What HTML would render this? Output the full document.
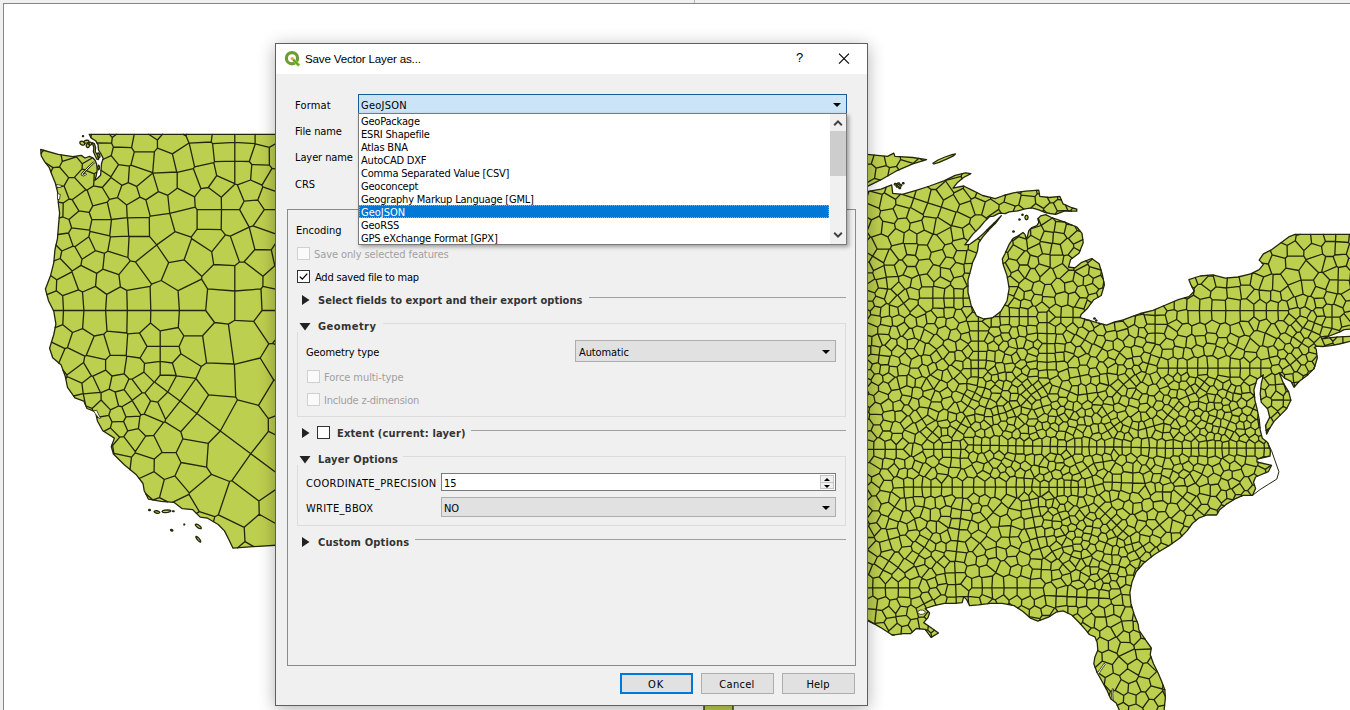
<!DOCTYPE html>
<html lang="en">
<head>
<meta charset="utf-8">
<title>Save Vector Layer as...</title>
<style>
*{box-sizing:border-box;margin:0;padding:0}
html,body{width:1350px;height:710px;overflow:hidden;background:#fff}
body{position:relative;font-family:"DejaVu Sans Condensed","DejaVu Sans","Liberation Sans",sans-serif;font-stretch:condensed;font-size:11px;color:#000}
.abs{position:absolute}
#canvas{left:0;top:0;width:1350px;height:710px;background:#fff;overflow:hidden}
#map{left:0;top:0}
.edgeT{left:0;top:0;width:1350px;height:4px;background:#f0f0f0;border-bottom:1px solid #868686}
.edgeL{left:0;top:3px;width:4px;height:707px;background:#f0f0f0;border-right:1px solid #868686}
#dlg{left:275px;top:43px;width:593px;height:663px;background:#f0f0f0;border:1px solid #5f5f5f;box-shadow:0 3px 16px 0 rgba(0,0,0,.30)}
#title{left:0;top:0;width:591px;height:30px;background:#fff}
#title .t{left:29px;top:7px;font-family:"Liberation Sans",sans-serif;font-stretch:normal;font-size:11.6px;line-height:16px;white-space:nowrap;letter-spacing:-.18px}
.lbl{white-space:nowrap;line-height:14px;height:14px;letter-spacing:-.2px}
.dis{color:#a0a0a0}
.b{font-weight:700;color:#333;letter-spacing:0}
.combo{background:#e1e1e1;border:1px solid #adadad}
.combo .v,.spin .v{left:3px;top:5px;line-height:14px;letter-spacing:-.1px}
.arr{width:0;height:0;border-left:4px solid transparent;border-right:4px solid transparent;border-top:4px solid #000}
.cb{width:13px;height:13px;background:#fff;border:1px solid #333}
.cb.d{border-color:#d0d0d0;background:#fafafa}
.grp{border:1px solid #dcdcdc}
.hl{height:1px;background:#a0a0a0}
.btn{height:21px;width:73px;top:629px;background:#e1e1e1;border:1px solid #adadad;text-align:center;line-height:21px;text-indent:-1px;letter-spacing:-.2px}
#list{left:82px;top:69px;width:489px;height:132px;background:#fff;border:1px solid #7a7a7a;box-shadow:2px 2px 4px rgba(0,0,0,.35)}
#list .it{left:0;width:470px;height:13px;line-height:15px;padding-left:2px;white-space:nowrap;letter-spacing:-.2px}
</style>
</head>
<body>
<div id="canvas" class="abs">
<svg id="map" class="abs" width="1350" height="710" viewBox="0 0 1350 710">
<g fill="#bdcf4f" stroke="#23260a" stroke-width="1.3" stroke-linejoin="round">
<path d="M89.2 134.3L280 134.3L280 545L258.3 546.3L233 548.2L228.7 539.3L224.5 530.9L218.2 524.5L207.6 518.2L200.2 517.1L192.8 509.7L182.3 508.7L173.8 502.3L161.1 501.3L148.5 499.2L144.2 490.7L143 483.5L136.6 475.1L124 464.5L113.4 454L111.3 446.6L114.4 438.1L102.8 430.7L97.5 421.2L95.4 411.7L87 408.5L83.8 401.1L74.9 397.9L67.5 387.3L65.4 376.8L61.2 365.1L52.7 357.8L49.6 348.2L53.8 334.5L55.9 324L53.8 311.3L48.5 300.7L45.4 289.1L50.6 275.4L53.8 262.7L54.9 250L57.5 238.3L58.5 225.6L59.6 213L58.5 204.5L57.6 192.1L55.3 183.1L52.5 176.3L49.1 167.3L44.6 161.7L41.3 156L40.7 149.5L58.2 154.3L72.8 156.6L81.2 155.4L85 158L89.5 156.3L93 158L95.2 160.5L96.6 164L97.2 170L96.2 176L94.7 180.4L98.1 177.8L100.6 175.3L101 170.2L101.5 163.5L103.2 158.4L100.6 153.3L98.5 150L98.1 144.9L95.6 140.7L91.3 138.1Z"/>
<path d="M860 154.3L867 154.3L887.5 156.4L893.8 153.2L894.9 156.4L912.8 157.5L926.6 159.6L912.8 163.8L895.9 171.2L881.1 179.7L867 186.6L862 189L867 191.7L881.1 189.2L891.7 184.9L892.7 193.4L902.3 194.4L917 190.2L929.7 186L944.5 180.7L955.1 175.4L965.6 172.9L970.9 173.7L963.5 177.5L957.2 182.8L953 188.1L963.5 186L972 190.2L982.6 195.5L995.2 198.7L1003.7 195.5L1013.4 192.8L1026 191.1L1038.7 190.1L1039.8 196.4L1049.3 197.5L1059.9 196.4L1063 203.8L1072.5 208L1076.8 209.1L1076.8 211.2L1064.1 211.2L1055.6 214.4L1050 213.5L1044.7 212.3L1038.8 209.8L1031.9 207.8L1024.9 208.8L1018 210.8L1009.2 211.8L1005.2 213.7L999.3 213.2L993.4 216.2L989.4 216.7L984.5 221.6L979.6 227.5L972.7 234.4L964.8 244.8L969.7 244.3L976.6 239.4L983.5 233.5L989.4 227.5L995.4 221.6L1001.3 215.7L995.9 222.9L988.9 229.8L983 236.7L978.6 242.8L977.6 250.2L975.6 256.1L972.7 262.1L971.5 267.2L968 279.9L968 292.5L971.1 305.2L976.4 315.8L983.8 319L992.3 317.9L1000.7 311.6L1007 301L1009.2 288.3L1007 275.6L1003.3 265L1002.3 259.1L1005.2 253.2L1009.2 244.3L1013.1 238.4L1019 235.4L1023 232.5L1025 234.4L1026.4 239.4L1027.9 234.4L1028.9 230.5L1031.9 227.5L1036.8 225.6L1038.8 222.6L1037.8 218.7L1040.7 215.9L1045.7 214.6L1051.4 217.5L1064.1 221.8L1076.8 227L1082 233.4L1083.2 242.7L1079 253.2L1070.6 259.6L1068.5 267L1074.8 268L1081.1 262.7L1091.7 258.5L1099.1 263.8L1102.3 274.4L1104.4 284.9L1101.2 295.5L1093.8 299.7L1087.5 308.2L1081.1 314.5L1080.1 317.7L1087.5 319.8L1098 323L1106.5 325.1L1114.9 321.9L1123.4 319.8L1131.8 316.6L1140.3 313.5L1153 310.3L1165.6 305L1178.3 299.7L1188.9 296.6L1194.2 291.3L1191 284.9L1188.9 279.7L1195.2 277.5L1200 276L1212.7 274.9L1225.4 278.1L1238 277L1250.7 273.9L1259.2 269.7L1263.4 264.4L1259.2 260.1L1263.4 253.8L1271.8 249.6L1280.3 243.2L1288.7 236.9L1295.1 234.4L1356 234.4L1356 329L1350 329.2L1344.2 329.6L1339.2 332.1L1330.7 335.5L1322.3 338.9L1330.7 337.6L1339.2 336.8L1350 336.3L1356 336.2L1356 341L1350 341.4L1339.2 344L1330.7 345.6L1322.3 346.5L1316.8 346.1L1314.3 347.6L1316.3 349.2L1316.8 354.9L1317.3 358L1314.1 368.6L1307.7 374.9L1299.3 381.3L1294 387.2L1290.9 381.3L1284.5 378.1L1279.2 372.8L1283.5 383.4L1288.7 391.8L1290.9 400.3L1286.6 408.7L1280.3 415.1L1274 421.4L1268.7 429.9L1266.6 434.1L1265.5 425.6L1269.7 417.2L1267.6 408.7L1261.3 402.4L1260.2 393.9L1261.3 383.4L1263.4 374.9L1257 379.2L1253.9 389.7L1254.9 400.3L1257 408.7L1259.2 419.3L1260.2 429.9L1262.3 438.3L1267.6 442.5L1270.4 450.6L1270 456L1257 459L1257 462L1271.5 465.4L1268.3 471.7L1255.6 477L1253.5 482.3L1255.6 488.6L1252.5 495.4L1243 495.4L1234.5 499.2L1226.1 504.4L1219.7 509.7L1216.6 515L1207 515L1198.6 518.2L1192.3 523.5L1187 530.9L1179.6 538.2L1169 545.6L1158.5 552L1154.1 554.8L1143.5 563.2L1136.1 571.7L1131.9 582.3L1129.8 592.8L1130.9 603.4L1134 613.9L1138.2 624.5L1138.9 630L1145.7 640.1L1151.3 648L1150.2 654.8L1153.5 663.8L1158 672.8L1161.4 680.7L1164.8 689.7L1165.4 697.6L1163.7 714L1120.9 714L1116.4 703.3L1110.7 698.7L1107.3 690.9L1101.7 680.7L1097.2 672.8L1093.8 663.8L1094.9 657L1097.8 650.3L1097.2 642.4L1094.9 636.8L1089.3 634.5L1086.5 630.9L1080.1 623.5L1071.7 615L1063.2 610.8L1056.9 611.8L1048.5 617.1L1037.8 621.1L1030.4 618.1L1023 611.5L1014.1 605.6L1002.2 603.3L990.4 603.3L978.5 604.8L969.6 605.6L966.7 599.6L963.7 596.7L962.2 602.6L954.8 603.3L944.4 603.3L934.1 605.6L925.2 608.5L929.6 613L928.1 617.4L923.7 622.6L931.1 627.8L938.5 633L931.1 637.4L925.2 629.3L916.3 628.5L910.4 633.7L903 633.7L892.6 635.2L882.2 628.5L874.8 624.1L867 620.4L860 620.4Z"/>
<path d="M704 704L733 704L733 714L704 714Z"/>
<path d="M84.6 144.5L83.6 145.2L82.1 145.1L80.7 144.3L79.9 143.1L80 141.9L81 141.2L82.5 141.3L83.9 142.1L84.7 143.3Z"/>
<path d="M89.1 141.1L88.7 142.1L87.5 142.9L86 143.1L84.6 142.8L83.9 142.1L84.3 141.1L85.5 140.3L87 140.1L88.4 140.4Z"/>
<path d="M89.4 145.6L89.1 146.8L88.3 147.5L87.3 147.5L86.5 146.8L86.2 145.6L86.5 144.4L87.3 143.7L88.3 143.7L89.1 144.4Z"/>
<path d="M91.5 143.6L91.3 144.5L90.7 145.1L89.9 145.1L89.3 144.5L89.1 143.6L89.3 142.7L89.9 142.1L90.7 142.1L91.3 142.7Z"/>
<path d="M83.6 136.2L83.3 136.7L82.7 136.7L82.4 136.2L82.7 135.7L83.3 135.7Z"/>
<path d="M92.2 142.5L94.3 143.5L95.6 147.5L95.2 151.5L97.6 155.5L98.6 159.5L96.8 159.2L95.2 155.8L93.4 151.8L93.8 147.5Z"/>
<path d="M99.8 154.9L100 156.8L99.5 157.7L98.6 157.2L97.8 155.5L97.6 153.6L98.1 152.7L99 153.2Z"/>
<path d="M99.5 167.5L99.2 169.2L98.6 169.9L98 169.2L97.7 167.5L98 165.8L98.6 165.1L99.2 165.8Z"/>
<path d="M150.5 510.1L150 510.7L149 510.7L148.5 510.1L149 509.5L150 509.5Z"/>
<path d="M159.7 512.5L159 513.1L157.6 513.3L155.8 513L154.5 512.3L154.1 511.5L154.8 510.9L156.2 510.7L158 511L159.3 511.7Z"/>
<path d="M170.8 510.8L170 511.7L167.9 512.3L165.2 512.6L162.9 512.3L162 511.6L162.8 510.7L164.9 510.1L167.6 509.8L169.9 510.1Z"/>
<path d="M174.2 511.2L173.8 511.6L172.9 511.6L172.4 511.2L172.9 510.8L173.8 510.8Z"/>
<path d="M201.2 528.5L200.2 528.7L198.5 528.1L196.7 526.8L195.5 525.4L195.4 524.3L196.4 524.1L198.1 524.7L199.9 526L201.1 527.4Z"/>
<path d="M200.6 542L199.7 541.8L198.2 540.7L196.8 539L195.9 537.4L196 536.4L196.9 536.6L198.4 537.7L199.8 539.4L200.7 541Z"/>
<path d="M172.9 530.6L172.1 531.1L170.9 530.6L170.5 529.8L171.3 529.3L172.5 529.8Z"/>
<path d="M184.8 524.5L184.5 525L183.9 524.8L183.9 524.2L184.5 524Z"/>
<path d="M932.9 163.2L938 160L945 157L952 154.6L955.4 154L953 156.2L946 159.4L939 162.4L934 164Z"/>
<path d="M896.8 184.3L896.1 185.1L894.9 185.1L894.2 184.3L894.9 183.5L896.1 183.5Z"/>
<path d="M899.8 183.6L899.2 184.4L898 184.4L897.4 183.6L898 182.8L899.2 182.8Z"/>
<path d="M898.5 186.4L897.9 187.2L896.7 187.2L896.1 186.4L896.7 185.6L897.9 185.6Z"/>
<path d="M901.9 185.4L901.3 186.1L900.2 186.1L899.7 185.4L900.2 184.7L901.3 184.7Z"/>
<path d="M900.7 187.8L900.2 188.5L899.2 188.5L898.7 187.8L899.2 187.1L900.2 187.1Z"/>
<path d="M904.1 183.3L903.7 183.9L902.8 183.9L902.3 183.3L902.8 182.7L903.7 182.7Z"/>
<path d="M1028.1 217.5L1027.6 219.1L1026.5 219.8L1025.4 219.1L1024.9 217.5L1025.4 215.9L1026.5 215.2L1027.6 215.9Z"/>
<path d="M1020.3 219.5L1019.7 220.1L1018.9 219.9L1018.9 219.1L1019.7 218.9Z"/>
<path d="M1023.3 214.8L1022.7 215.4L1021.9 215.2L1021.9 214.4L1022.7 214.2Z"/>
<path d="M1014.4 231.5L1013.8 232.2L1012.8 231.9L1012.8 231.1L1013.8 230.8Z"/>
<path d="M1095.4 318.5L1094.8 319.2L1093.8 318.9L1093.8 318.1L1094.8 317.8Z"/>
<path d="M1097.1 320.6L1096.5 321.2L1095.7 321L1095.7 320.2L1096.5 320Z"/>
</g>
<path fill="none" stroke="#23260a" stroke-width="1.3" stroke-linecap="round" d="M280 140.1L277.5 140.8M277.5 140.8L276 134.3M145.6 493.4L152.9 499.9M41.1 153.6L41.3 152.7M277.5 140.8L276.4 143.2M276.4 143.2L280 146.8M268.4 431.4L250.8 453.7M220.3 431L250.8 453.7M258.5 405.3L237.5 399.8M237.5 399.8L220.3 431M268.3 418.7L258.5 405.3M268.3 418.7L268.4 431.4M258.5 405.3L273.8 380.2M234.4 364.3L260.2 358M234.4 364.3L235.7 397.2M235.7 397.2L237.5 399.8M260.2 358L273.8 380.2M280 414.2L268.3 418.7M280 380L273.8 380.2M162.5 134.3L157.4 140M148.6 134.3L157.4 140M260.2 358L268.8 343.9M280 346.4L272.6 343.3M272.6 343.3L268.8 343.9M262.9 286.3L280 290.2M262.9 286.3L261 288.9M261 288.9L262 310.5M262 310.5L280 310.5M274.8 265.7L280 266.7M263 276.3L274.8 265.7M263 276.3L262.9 286.3M253.7 321.4L268.8 343.9M272.6 343.3L280 334M253.7 321.4L262 310.5M231.9 480.7L250.8 453.7M231.9 480.7L258.9 501M250.8 453.7L280 475.5M258.9 501L280 486.6M268.4 431.4L280 437M199.3 511.6L189 494.4M199.3 511.6L196.5 513.4M189 494.4L172.9 502.2M213.5 521.7L214.8 516.7M214.8 516.7L199.3 511.6M152.9 499.9L159.5 497.7M159.5 497.7L167.7 501.8M162.1 452.3L153.7 435.3M176.1 452.7L162.1 452.3M176.1 452.7L182.9 438.8M182.9 438.8L180.8 431.8M163.6 422.4L153.7 435.3M163.6 422.4L165 421.9M180.8 431.8L165 421.9M134.3 151.8L154.4 151.6M134.3 151.8L130.9 165.1M130.9 165.1L152.7 172.7M154.4 151.6L152.7 172.7M157.5 148.1L157.4 140M131.6 147.7L134.2 134.3M157.5 148.1L154.4 151.6M131.6 147.7L134.3 151.8M51.5 342.1L65 348.6M58.8 363L65 348.6M165 421.9L165.6 419.4M157.7 402.1L165.6 419.4M157.7 402.1L150.6 400.9M163.6 422.4L144.1 414.2M150.6 400.9L144.1 414.2M234.8 320.3L234.8 291M261 288.9L234.8 291M253.7 321.4L234.8 320.3M233.9 364L228.4 324.1M234.4 364.3L233.9 364M234.8 320.3L228.4 324.1M126.8 333L127.3 310.5M127.3 310.5L150.8 310.5M126.8 333L127.7 333.8M139.5 332.9L127.7 333.8M150.5 323.1L150.8 310.5M139.5 332.9L150.5 323.1M126.8 290.4L150.1 286.3M126.8 290.4L127.3 310.5M150.1 286.3L150.8 310.5M156.7 245L135.4 261.9M135.4 261.9L151.6 284.1M156.7 245L168.7 262.6M151.6 284.1L161.2 280.5M168.7 262.6L161.2 280.5M274.8 265.7L271.3 249.8M279.2 237.9L271.3 249.8M280 222.9L277.6 234.7M279.2 237.9L277.6 234.7M280 168.2L277.9 169.4M277.9 169.4L280 173.9M259.2 514.3L280 526M259.2 514.3L244.2 527.3M245 541.6L244.2 527.3M245 541.6L253.8 546.6M275.3 545.3L280 539.4M258.9 501L259.2 514.3M218.4 514.8L244.2 527.3M218.4 514.8L229.6 481.5M229.6 481.5L231.9 480.7M237.7 547.8L245 541.6M214.8 516.7L218.4 514.8M211.5 474.3L206.6 467.1M211.5 474.3L189.3 492.9M206.6 467.1L181 462.5M189.3 492.9L174.9 475.9M174.9 475.9L181 462.5M220.3 431L208.3 443.3M229.6 481.5L211.5 474.3M208.3 443.3L206.6 467.1M189 494.4L189.3 492.9M208.3 443.3L182.9 438.8M176.1 452.7L181 462.5M159.5 497.7L164.3 479.5M164.3 479.5L174.9 475.9M145.7 436L153.7 435.3M135.3 451.7L145.7 436M162.1 452.3L154.3 459.1M135.3 451.7L135.2 452.9M135.2 452.9L154.3 459.1M164.3 479.5L154.1 471.7M139.2 478.5L154.1 471.7M154.1 471.7L154.3 459.1M144.1 414.2L140.9 414.9M140.9 414.9L140 416.1M145.7 436L138.4 428.6M138.4 428.6L140 416.1M135.3 451.7L123.8 436.7M123.8 436.7L127.7 430.8M138.4 428.6L127.7 430.8M196.9 413.6L180 401.1M208.6 394.8L196.9 413.6M195.9 378.5L180 401.1M208.6 394.8L195.9 378.5M180.8 431.8L196.9 413.6M165.6 419.4L180 401.1M220.3 431L196.9 413.6M235.7 397.2L208.6 394.8M201.3 366.5L206.6 362.8M233.9 364L206.6 362.8M195.9 378.4L201.3 366.5M195.9 378.4L195.9 378.5M62.3 161.3L59.5 167M62.3 161.3L61.1 154.8M41.3 152.7L43.8 150.3M45.5 162.8L53 167.6M53 167.6L59.5 167M132.2 400.6L132.3 400.3M132.2 400.6L121.8 406.7M132.3 400.3L124.1 389.7M115.1 392L124.1 389.7M115.1 392L118.6 406M118.6 406L121.8 406.7M140.9 414.9L132.2 400.6M140 416.1L126 416.9M121.8 406.7L126 416.9M127.7 430.8L123.6 421.4M126 416.9L123.6 421.4M118.6 406L110.5 409.9M110.5 409.9L108.8 415.3M123.6 421.4L112 421.9M108.8 415.3L112 421.9M112.6 445.5L111.8 445.1M112.6 445.5L119.7 437.2M119.7 437.2L110.4 427.9M110.4 427.9L103.9 431.4M123.8 436.7L119.7 437.2M112 421.9L110.4 427.9M108.8 415.3L96.7 417.5M201.3 366.5L180.9 353.7M206.6 362.8L202.6 335.7M179.1 346.4L180.9 353.7M179.1 346.4L183.9 335.8M202.6 335.7L183.9 335.8M228.4 324.1L214.6 322.5M202.6 335.7L214.6 322.5M126.8 356.2L126.2 355.5M127.7 333.8L126.2 355.5M139.5 332.9L147 346.4M126.8 356.2L140 358M140 358L147 346.4M150.5 323.1L160.2 330.9M160.2 330.9L160.2 346.4M147 346.4L160.2 346.4M179.1 346.4L160.2 346.4M160.2 330.9L178.3 327.5M183.9 335.8L178.3 327.5M195.9 378.4L176.5 375.8M176.5 375.8L167.8 392M180 401.1L167.8 392M157.7 402.1L167.8 392M207.6 288.8L205.7 310.5M207.6 288.8L201.6 279.1M201.6 279.1L178.1 290.7M205.7 310.5L179.4 310.5M178.1 290.7L179.4 310.5M234.8 291L207.6 288.8M214.6 322.5L205.7 310.5M178.3 327.5L179.4 310.5M150.1 286.3L151.6 284.1M150.8 310.5L179.4 310.5M161.2 280.5L178.1 290.7M194.6 196.8L201 188.7M201 188.7L193.3 168.6M177.2 188.2L194.6 196.8M177.2 188.2L177.2 172.4M193.3 168.6L177.2 172.4M157.5 148.1L172.4 153.9M152.9 173.1L176.7 172M152.7 172.7L152.9 173.1M172.4 153.9L176.7 172M169.7 213.3L150.2 216.2M169.7 213.3L167.8 195.3M167.8 195.3L158.4 191.6M158.4 191.6L145.9 199.9M145.9 199.9L150.2 216.2M175 231.7L169.8 213.4M169.8 213.4L169.7 213.3M149.5 236.3L156.7 244.9M149.5 236.3L149.3 217.4M156.7 244.9L175 231.7M149.3 217.4L150.2 216.2M169.8 213.4L195.2 207.1M194.6 196.8L195.2 207.1M177.2 188.2L167.8 195.3M152.8 173.1L158.4 191.6M152.9 173.1L152.8 173.1M176.7 172L177.2 172.4M136.6 186.4L152.8 173.1M140 197.1L136.6 186.4M140 197.1L145.9 199.9M280 212.8L277.6 209.6M277.6 209.6L280 200.7M276.4 143.2L269.3 147.4M255.1 134.3L255.1 143.6M255.1 143.6L255.3 143.8M269.3 147.4L255.3 143.8M130 469.6L131.5 457.1M131.5 457.1L113.9 453.3M135.2 452.9L131.5 457.1M112.6 445.5L113.9 453.3M126.8 333L107 331.1M127.3 310.5L105.6 310.5M107 331.1L105.6 310.5M84.8 356.2L67.4 347.6M67.4 347.6L72.5 332.5M72.5 332.5L82.6 328.6M84.8 356.2L86.3 355.3M86.3 355.3L94.2 336M82.6 328.6L94.2 336M86.3 355.3L105.6 359.7M110.2 355.1L105.6 359.7M110.2 355.1L103.8 334.2M94.2 336L103.8 334.2M126.2 355.5L110.2 355.1M107 331.1L103.8 334.2M105.6 310.5L83.9 310.5M82.6 328.6L83.9 310.5M126.6 205L140 197.1M126.6 205L127.2 217.6M149.3 217.4L127.5 217.9M127.5 217.9L127.2 217.6M62.3 161.3L76.5 156.8M59.5 167L68.7 177.6M74.4 177.4L68.7 177.6M76.5 156.8L82.3 163.8M74.4 177.4L82.1 168.9M82.1 168.9L82.3 163.8M130.9 165.1L129.4 166.1M136.6 186.4L128.3 182.6M128.3 182.6L129.4 166.1M131.6 147.7L113.4 147M113.4 147L111.2 155.6M111.2 155.6L118.5 164.6M129.4 166.1L118.5 164.6M129 378.8L124.1 389.7M124.1 373.8L129 378.8M124.1 373.8L112 376M115.1 392L109.2 389.1M109.2 389.1L112 376M124.1 373.8L126.8 356.2M105.6 359.7L105.6 370.1M105.6 370.1L112 376M81.9 383.2L91.4 375.8M81.9 383.2L67 376.5M67 376.5L66.9 375M66.9 375L83.6 362.6M83.6 362.6L91.4 375.8M73.6 396L83.2 393.7M65.8 378.7L67 376.5M83.2 393.7L81.9 383.2M63 370.2L66.9 375M84.8 356.2L83.6 362.6M67.4 347.6L65 348.6M92.8 376.2L105.6 370.1M92.8 376.2L91.4 375.8M101.1 400L92.1 408.4M101.1 400L101.1 392.7M101.1 392.7L100.3 392.3M100.3 392.3L83.3 393.8M83.3 393.8L85.6 405.2M85.9 406L92.1 408.4M110.5 409.9L101.1 400M92.7 410.7L92.1 408.4M109.2 389.1L101.1 392.7M92.8 376.2L100.3 392.3M83.2 393.7L83.3 393.8M144.9 392.8L142.2 392.8M144.9 392.8L154.1 382.1M142.2 392.8L131.9 379.2M154.1 382.1L143.9 372.1M143.9 372.1L131.9 379.2M150.6 400.9L144.9 392.8M132.3 400.3L142.2 392.8M154.5 382.1L167.8 392M154.5 382.1L154.1 382.1M129 378.8L131.9 379.2M140 358L144.5 363.4M144.5 363.4L143.9 372.1M172.4 363L160.2 361.3M172.4 363L176.2 375.5M176.2 375.5L160.2 375M160.2 375L160.2 361.3M160.2 346.4L160.2 361.3M180.9 353.7L172.4 363M176.5 375.8L176.2 375.5M154.5 382.1L160.2 375M144.5 363.4L160.2 361.3M208.3 187.5L201 188.7M216.7 175.7L208.3 187.5M193.3 168.6L194.6 166.9M216.7 175.7L213.8 162.7M213.8 162.7L194.6 166.9M168.7 262.6L184.1 259.8M201.6 279.1L201.9 276.4M184.1 259.8L201.9 276.4M156.7 245L156.7 244.9M175 231.7L191.2 237.1M191.2 237.1L191.6 238.6M184.1 259.8L191.6 238.6M271.3 249.8L254.9 249.5M263 276.3L244.1 261.8M254.9 249.5L244.1 261.8M191.2 237.1L197.1 229.2M195.2 207.1L197.1 209.6M197.1 209.6L197.1 229.2M208.3 187.5L221.3 197.3M197.1 209.6L221.5 209.6M221.3 197.3L221.5 209.6M221.2 229.6L221.5 209.6M221.2 229.6L197.1 229.2M264.3 209.6L257.8 200M264.3 209.6L253.1 225.9M257.8 200L244.1 201.2M253.1 225.9L249.2 227.1M249.2 227.1L239.6 209.6M239.6 209.6L244.1 201.2M277.6 209.6L264.3 209.6M280 192.8L262.8 186.9M262.8 186.9L257.8 200M277.6 234.7L253.1 225.9M249.2 227.2L254.9 249.5M249.2 227.2L249.2 227.1M277.9 169.4L272 168.3M262.8 186.9L262 185.2M272 168.3L262 185.2M269.3 147.4L269.4 165.1M272 168.3L269.4 165.1M53 167.6L50.9 171.9M72.1 199.7L78.9 210.9M78.9 210.9L89.2 212.4M85.8 189.8L72.1 199.7M87.1 190L85.8 189.8M87.1 190L92.8 205.9M92.8 205.9L89.2 212.4M110.4 236.8L128.7 236.1M110.4 236.8L107.8 251.2M107.8 251.2L127.9 257.5M127.9 257.5L129.1 236.5M129.1 236.5L128.7 236.1M149.5 236.3L129.1 236.5M135.4 261.9L130.2 260.9M130.2 260.9L127.9 257.5M127.5 217.9L128.7 236.1M126.8 290.4L120.4 286.9M130.2 260.9L118.9 274.6M120.4 286.9L118.9 274.6M105.6 310.5L106.7 294.4M120.4 286.9L106.7 294.4M97 143L111.6 143.2M90.8 137.3L91.5 134.3M109.6 134.3L112.3 137.6M112.3 137.6L111.6 143.2M82.3 163.8L92.6 157.8M111.2 155.6L102.8 159.5M113.4 147L111.6 143.2M116.4 134.3L112.3 137.6M126.6 205L117.4 197.6M128.3 182.6L121.9 185.3M121.9 185.3L117.4 197.6M255.1 143.6L234.8 142.3M234.8 134.3L234.8 142.3M213.7 264.5L211.7 251.8M213.7 264.5L234.8 265.7M211.7 251.8L225.4 234.8M234.8 265.7L239.5 262.1M239.5 262.1L230.3 236.1M225.4 234.8L230.3 236.1M191.6 238.6L211.7 251.8M201.9 276.4L213.7 264.5M234.8 291L234.8 265.7M221.2 229.6L225.4 234.8M244.1 261.8L239.5 262.1M249.2 227.2L230.3 236.1M221.5 209.6L239.6 209.6M249.3 161.5L251.8 164.5M249.3 161.5L234.8 161.2M251.8 164.5L250.6 180M234.8 183.6L234.8 161.2M250.6 180L237.4 184.9M237.4 184.9L235.1 184M234.8 183.6L235.1 184M255.3 143.8L249.3 161.5M269.4 165.1L251.8 164.5M234.8 142.3L234.8 161.2M262 185.2L250.6 180M214.5 161.7L234.8 161.2M216.7 175.7L234.8 183.6M213.8 162.7L214.5 161.7M244.1 201.2L237.4 184.9M221.3 197.3L235.1 184M212.6 143.7L234.8 142.3M214.5 161.7L212.6 143.7M85.8 189.8L74.4 177.4M68.7 177.6L64.1 185.9M72.1 199.7L69.1 199M69.1 199L64.1 185.9M64.1 185.9L56.5 187.8M91.9 219.7L111.3 219.3M91.9 219.7L89.6 230.2M90 231.3L89.6 230.2M90 231.3L109.7 235.9M109.7 235.9L111.5 219.5M111.5 219.5L111.3 219.3M92.8 205.9L107.3 202.2M89.2 212.4L91.9 219.7M107.3 202.2L111.3 219.3M71.6 227.8L89.6 230.2M69 219.5L71.6 227.8M69 219.5L78.9 210.9M127.2 217.6L111.5 219.5M110.4 236.8L109.7 235.9M117.4 197.6L109.5 199.4M107.3 202.2L109.5 199.4M106.7 294.4L95.5 286.4M83.9 310.5L82.5 292M95.5 286.4L82.5 292M110.9 176.8L111 177.5M110.9 176.8L101 170.3M111 177.5L102.3 187.5M94.3 173.8L96.9 172M94.3 173.8L93.6 185.9M93.6 185.9L102.3 187.5M118.5 164.6L110.9 176.8M121.9 185.3L111 177.5M109.5 199.4L102.3 187.5M82.1 168.9L94.3 173.8M87.1 190L93.6 185.9M212.2 134.3L211.2 142M211.2 142L189.2 143.1M186.8 134.3L186 135.8M186 135.8L189 143M189 143L189.2 143.1M212.6 143.7L211.2 142M194.6 166.9L189.2 143.1M183.1 134.3L186 135.8M172.4 153.9L189 143M58.3 202.2L63.2 203M63.2 203L62.9 217M59.2 217.9L62.9 217M69.1 199L63.2 203M69 219.5L62.9 217M71.6 227.8L68.5 233M57.8 234.5L68.5 233M62.8 324.7L63.5 310.5M62.8 324.7L55.2 327.6M53.4 310.5L63.5 310.5M72.5 332.5L62.8 324.7M83.9 310.5L63.5 310.5M71.9 271.8L78.6 289.9M71.9 271.8L56.7 279.8M78.6 289.9L62.7 295.7M56.7 279.8L56.3 290.8M62.7 295.7L56.3 290.8M63.5 310.5L62.7 295.7M82.5 292L78.6 289.9M46.9 294.7L56.3 290.8M50.6 275.5L56.7 279.8M118.9 274.6L102.8 269.2M95.5 286.4L96.7 273.4M102.8 269.2L96.7 273.4M107.8 251.2L104.5 253.3M102.8 269.2L104.5 253.3M90 231.3L88.8 236.8M88.8 236.8L95.4 250.7M104.5 253.3L95.4 250.7M72.2 271L80.9 265.4M72.2 271L60.2 258.5M80.9 265.4L82 259.2M82 259.2L74.9 246.7M60.2 258.5L61.8 251M61.8 251L73.1 246.1M73.1 246.1L74.9 246.7M71.9 271.8L72.2 271M96.7 273.4L80.9 265.4M54 260.8L60.2 258.5M95.4 250.7L82 259.2M88.8 236.8L74.9 246.7M56 245L61.8 251M68.5 233L73.1 246.1"/>
<path fill="none" stroke="#23260a" stroke-width="1.3" stroke-linecap="round" d="M1164.8 689.6L1162.9 689.7M1165.3 696.3L1162.7 690.9M1162.7 690.9L1162.9 689.7M1163.1 685.2L1162.5 689M1162.9 689.7L1162.5 689M871.3 163.8L874.1 155M871.3 163.8L860.9 165.2M860 164.4L860.9 165.2M861.3 181.7L860.9 165.2M860 182L861.3 181.7M876 168.1L871.3 163.8M876 168.1L886.3 165.7M884.2 156.1L886.3 165.7M861.3 181.7L865.8 183.4M876 168.1L874.6 178.3M874.6 178.3L865.8 183.4M999.2 204.8L1004 202M1005.7 194.9L1004 202M990.6 199L990.6 197.5M990.6 199L999.2 204.8M1016.7 260.4L1024.6 251M1008.7 258.7L1016.7 260.4M1007.7 252.6L1013.3 244.7M1008.7 258.7L1007.7 252.6M1013.3 244.7L1024.6 251M1109.2 695.4L1110.4 691.4M1110.4 691.4L1104.3 684.8M1096.9 672L1105.2 677.6M1105.2 677.6L1104.3 684.8M1158.2 706.5L1153.9 699.7M1158.2 706.5L1156.3 711.1M1156.3 711.1L1146.4 712.6M1149.1 699.1L1153.9 699.7M1149.1 699.1L1142.7 708M1146.4 712.6L1143.4 710.4M1142.7 708L1143.4 710.4M1164.6 705.1L1158.2 706.5M1162.7 690.9L1153.9 699.7M1158.1 714L1156.3 711.1M1146.7 714L1146.4 712.6M1139.4 714L1143.4 710.4M1256.2 466.7L1254.1 473.6M1254.1 473.6L1257.4 476.2M1257.7 465.6L1265.3 469.4M1257.7 465.6L1256.2 466.7M1265.9 472.7L1265.3 469.4M860 203L862.7 204M862.7 204L865.2 202.7M865.8 183.4L867.1 186.5M865.2 202.7L868.9 191.4M922.9 160.7L920.1 158.6M900.3 156.7L900.6 159.7M918.6 158.4L913.1 163.4M900.6 159.7L913.1 163.4M953.9 192.8L953.4 194.5M945.6 181L953.9 192.8M936 189.5L945.6 181M936 189.5L943.5 200.1M953.4 194.5L943.5 200.1M963.1 188.3L971.2 199.2M963.1 188.3L963.9 186.2M974.9 197.4L971.2 199.2M974.9 197.4L976.9 192.6M985.3 201.8L974.9 197.4M990.6 199L985.3 201.8M945.7 180.3L961.1 176.3M961.1 176.3L962.1 173.7M961.9 178.9L961.1 176.3M953.9 192.8L963.1 188.3M945.6 181L945.7 180.3M991.2 326.9L989.8 327.9M989.8 327.9L982 321.3M991.2 318L991.2 326.9M985.4 318.8L982 321.3M1001.5 213.4L998.7 209.4M998.7 209.4L986.1 218M995.2 223.6L993.8 223.2M986.1 218L986.7 219.4M1015.4 206.1L1013.1 211.4M1015.4 206.1L1004 202M999.2 204.8L998.7 209.4M985.3 201.8L981.6 214.9M981.6 214.9L986.1 218M987 230L987.9 231M1008.7 258.7L1005.3 262.7M1011.2 272.9L1005.3 262.7M1011.2 272.9L1018.2 269.8M1016.7 260.4L1019.6 264.9M1018.2 269.8L1019.6 264.9M1050.2 267.3L1050.3 267.5M1040 276.9L1050.3 267.5M1040 276.9L1034.8 268.5M1050.2 267.3L1039 263.9M1039 263.9L1034.8 268.5M1025.3 278.1L1030.6 268.4M1033.6 282.7L1025.3 278.1M1033.6 282.7L1039.6 280.7M1040 276.9L1039.6 280.7M1034.8 268.5L1030.6 268.4M1018.2 269.8L1024.6 278.2M1019.6 264.9L1027.7 265M1024.6 278.2L1025.3 278.1M1030.6 268.4L1027.7 265M1015.4 206.1L1018.7 205M1018.7 205L1023.7 209.1M1013.3 244.7L1012.8 240.9M1007.7 252.6L1005.8 251.8M1011.9 240.2L1012.8 240.9M930.2 355.6L932.9 362.4M930.2 355.6L936.4 350.1M936.4 350.1L942 358.7M942 358.7L935.6 363.2M935.6 363.2L932.9 362.4M870.1 191.1L882.2 194.3M865.2 202.7L879.2 208.4M879.2 208.4L882.2 194.3M860.4 452.6L862.3 449.3M862.3 449.3L860 441M1117.2 705.3L1123.3 702.4M1128.2 714L1128.7 706.2M1128.7 706.2L1123.3 702.4M1142.7 708L1136 704M1128.7 706.2L1136 704M1150.9 656.8L1147.3 662.6M1156.7 671.6L1147.3 662.6M1151 685.9L1145.4 692.2M1151 685.9L1149.1 678.9M1149.1 678.9L1138.7 676.3M1145.4 692.2L1141.1 691.5M1141.1 691.5L1136.3 680.6M1136.3 680.6L1138.7 676.3M1162.5 689L1151 685.9M1149.1 699.1L1145.4 692.2M1156.7 671.6L1149.1 678.9M1138.5 675.4L1143.1 663.4M1147.3 662.6L1143.1 663.4M1138.5 675.4L1138.7 676.3M1136 704L1136.1 695.2M1136.1 695.2L1141.1 691.5M1128.6 683.6L1127.9 692.5M1128.6 683.6L1121.1 679.5M1121.1 679.5L1115.2 690.4M1115.2 690.4L1123.8 695.5M1123.8 695.5L1127.9 692.5M1136.1 695.2L1127.9 692.5M1136.3 680.6L1128.6 683.6M1123.3 702.4L1123.8 695.5M1110.4 691.4L1115.2 690.4M1095.2 667.5L1102.3 661.1M1097.7 650.5L1101.9 652.9M1102.3 661.1L1101.9 652.9M1091.3 628L1082.6 622.4M1091.3 628L1087.6 632.4M1080.5 624L1082.6 622.4M1323.2 234.4L1325.4 241.3M1335.8 234.4L1335.5 241.5M1325.4 241.3L1335.5 241.5M1348.6 242.5L1349.4 234.4M1348.6 242.5L1335.5 241.5M862.7 204L861.1 213.7M860 214.5L861.1 213.7M970.4 200.8L975.2 214.9M970.4 200.8L959.6 204.6M957.1 211.6L959.6 204.6M957.1 211.6L970.6 218.2M970.6 218.2L975.2 214.9M971.2 199.2L970.4 200.8M981.6 214.9L975.2 214.9M953.4 194.5L959.6 204.6M969.4 223.4L975.7 231.4M969.4 223.4L970.6 218.2M993.8 316.7L999.7 316.7M1000.2 312L999.7 316.7M1036.5 316.7L1038.8 322.7M1036.5 316.7L1038.2 312.4M1038.2 312.4L1047 311.8M1047 311.8L1047 322.6M1038.8 322.7L1047 322.6M1037.2 193.9L1035 196.6M1037.2 193.9L1036.4 190.3M1035 196.6L1021.2 195.1M1021.4 191.7L1020.6 193.7M1020.6 193.7L1021.2 195.1M1039.4 193.9L1037.2 193.9M1035.7 203.6L1035 196.6M1035.7 203.6L1030.8 208M1018.7 205L1021.2 195.1M1016.9 192.3L1020.6 193.7M1018.6 236.7L1018.8 235.5M1018.6 236.7L1026.3 239.2M1026.5 239.2L1030.8 235.2M1030.8 235.2L1030.5 228.9M1012.8 240.9L1018.6 236.7M921 388.2L914.9 386.8M915.5 379L914.9 386.8M915.5 379L922.2 376.4M921 388.2L926.3 378M922.2 376.4L926.3 378M951.2 365L960.6 371.6M963.1 368.7L960.6 371.6M951.2 365L955.3 360.3M963.1 368.7L962.8 361.6M955.3 360.3L962.8 361.6M860.7 281.1L860 281.6M860 276.7L860.7 281.1M860 261.4L862.8 263.4M860 274.1L861.4 272.9M861.4 272.9L862.8 263.4M1050.7 404.6L1052 408.3M1050.7 404.6L1042.2 406.6M1052 408.3L1047.7 414.5M1042.2 406.6L1042.1 406.9M1042.1 406.9L1044.5 413.3M1047.7 414.5L1044.5 413.3M1056.4 410L1052 408.3M1057.8 415.7L1056.4 410M1056.2 416.7L1048.5 415.8M1048.5 415.8L1047.7 414.5M1057.8 415.7L1056.2 416.7M1056.4 410L1060.7 406M1051.4 402.4L1050.7 404.6M1051.4 402.4L1057.4 400.9M1057.4 400.9L1060.7 406M1065.5 409L1064.2 406.6M1065.5 409L1064.4 412.9M1064.4 412.9L1058.3 415.8M1057.8 415.7L1058.3 415.8M1064.2 406.6L1060.7 406M1058.3 415.8L1063.2 421.7M1063.2 421.7L1058.8 425.5M1056.2 416.7L1055 422.6M1058.8 425.5L1055 422.6M1254.1 473.6L1248.2 476.9M1254.5 485.2L1252.6 485M1252.6 485L1248.2 476.9M860.4 452.6L867.1 463M860 464.1L866.2 464.3M867.1 463L866.2 464.3M865.8 431.5L862.2 438.4M865.8 431.5L871 430.5M862.2 438.4L873.9 441.7M871 430.5L877.1 437.9M873.9 441.7L877.1 437.9M862.3 449.3L873.6 449.3M860 439.6L862.2 438.4M873.6 449.3L873.9 441.7M865.8 431.5L860.7 424.2M880.2 424.7L873.5 424.8M880.2 424.7L883.3 419.9M882 414.7L869.7 414.2M882 414.7L883.3 419.9M873.5 424.8L869 418.7M869 418.7L869.7 414.2M879.1 437.4L877.1 437.9M879.1 437.4L882.9 431M882.9 431L880.2 424.7M871 430.5L873.5 424.8M890.2 430.9L892.8 422.4M892.8 422.4L883.3 419.9M882.9 431L890.2 430.9M892.8 422.4L895.2 421M894.9 411.7L895.2 421M883.4 412.1L882 414.7M893.2 410.1L883.4 412.1M893.2 410.1L894.9 411.7M860.7 424.2L869 418.7M904.3 430L904.3 429.6M904.3 430L902.3 433.4M904.3 429.6L900.2 423M900.2 423L895.2 421M890.2 430.9L892.2 433.4M902.3 433.4L892.2 433.4M860.7 281.1L865.9 284.7M865.9 284.7L866.6 290.1M866.6 290.1L864.7 292.3M864.7 292.3L860 292.7M963.1 368.7L970.9 368.6M962.8 361.6L966.6 357.9M968.4 358L966.6 357.9M968.4 358L970.8 360.1M970.9 368.6L971.2 368.4M970.8 360.1L971.2 368.4M975.1 432L970.2 426.8M975.1 432L981.1 428.5M981.1 428.5L980.1 422.9M970.2 426.8L970.9 425.2M970.9 425.2L975.3 421.6M980.1 422.9L975.3 421.6M968.3 427.5L970.2 426.8M968.3 427.5L960.8 423.6M966 416.4L970.9 425.2M965.5 416.2L966 416.4M965.5 416.2L960.8 423.6M974.5 414.5L966 416.4M974.5 414.5L975.3 421.6M984.1 415.5L975 413.7M974.5 414.5L975 413.7M984.5 416.3L984.1 415.5M984.5 416.3L983.9 420M983.9 420L980.1 422.9M964.1 437.1L963.3 438.7M964.1 437.1L973.5 437.5M963.3 438.7L968.1 444.8M973.5 437.5L973.5 444.9M968.1 444.8L973.5 444.9M963.6 434.5L968.3 427.5M963.6 434.5L964.1 437.1M975.2 435.6L973.5 437.5M975.2 435.6L975.1 432M894.9 411.7L901.5 410.5M900.2 423L907.1 415.8M907.1 415.8L901.5 410.5M904.3 429.6L913.2 422.5M913.2 422.5L909.5 415.7M907.1 415.8L909.5 415.7M915.4 434.4L918.6 431.8M904.3 430L915.4 434.4M913.2 422.5L915.3 423.1M915.3 423.1L918.6 431.8M960.6 371.6L960.6 372.1M971.1 376.7L970.9 368.6M971.1 376.7L967.4 379.6M960.6 372.1L967.4 379.6M962.8 412.5L965.5 416.2M962.8 412.5L967.9 405.9M975 413.7L974.7 409.7M974.7 409.7L968.2 405.8M967.9 405.9L968.2 405.8M1161.1 542.8L1168.7 545.8M1161.1 542.8L1156.9 547M1156.9 547L1159.4 551.4M1132.3 608.1L1130.8 606.7M1130.8 606.7L1131.3 604.8M1137 621.4L1133.1 621.2M1139.8 632.6L1133.4 630M1133.1 621.2L1133.4 630M1132.2 620.3L1133.6 612.5M1132.2 620.3L1133.1 621.2M1096.5 640.7L1099.8 636.8M1099.8 636.8L1108.3 641M1101.9 652.9L1108.5 649.9M1108.3 641L1108.5 649.9M1082.6 622.4L1083.1 619.1M1083.1 619.1L1091.5 612.9M1091.5 612.9L1095.2 616.9M1091.3 628L1094.1 627.6M1095.2 616.9L1094.1 627.6M1099.8 636.8L1099.7 631.3M1094.1 627.6L1099.7 631.3M1105.2 677.6L1113.3 673M1102.3 661.1L1112.4 664.7M1112.4 664.7L1113.3 673M1121.1 679.5L1119.5 675.7M1113.3 673L1119.5 675.7M1138.5 675.4L1127.5 668.8M1119.5 675.7L1127.5 668.8M1143.1 663.4L1136.9 658.8M1136.9 658.8L1127.6 664.6M1127.5 668.8L1127.6 664.6M1066.6 342.8L1070.7 342.1M1070.7 342.1L1074.7 334.9M1062.7 334.1L1066.6 342.8M1062.7 334.1L1066.3 330M1074.7 334.9L1066.3 330M1039.6 243.3L1042.5 253.6M1039.6 243.3L1027.7 249.1M1030.2 255L1037.9 257.1M1030.2 255L1026.9 250.7M1037.9 257.1L1042.5 253.6M1027.7 249.1L1026.9 250.7M1027.7 265L1030.2 255M1039 263.9L1037.9 257.1M1024.6 251L1026.9 250.7M1026.5 239.2L1027.7 249.1M1038.2 218.3L1041.2 225.4M1030.5 228.9L1041.2 225.5M1041.2 225.4L1041.2 225.5M1030.8 235.2L1040.2 240.5M1041.2 225.5L1044.2 231M1044.2 231L1040.2 240.5M1039.6 243.3L1040.4 241.3M1040.4 241.3L1040.2 240.5M1060.2 244.5L1062.9 254.8M1060.2 244.5L1052.7 243.1M1052.7 243.1L1052 243.5M1052 243.5L1049.8 254.7M1062.9 254.8L1050.1 255.1M1050.1 255.1L1049.8 254.7M1053.4 232.4L1044.2 231M1053.4 232.4L1052.7 243.1M1040.4 241.3L1052 243.5M1042.5 253.6L1049.8 254.7M1050.2 267.3L1050.1 255.1M1063.9 255.6L1062.9 254.8M1063.9 255.6L1062.4 263.5M1050.3 267.5L1052.6 268.7M1052.6 268.7L1062.4 263.5M1074 267.9L1073.8 270.4M1068 254.8L1072.3 258.3M1063.9 255.6L1068 254.8M1073.8 270.4L1068.9 270M1062.4 263.5L1068.9 270M1039.6 280.7L1044.9 284.6M1044.9 284.6L1051 284.1M1052.6 268.7L1056.5 278.1M1051 284.1L1056.5 278.1M1068.9 270L1059.7 278.6M1056.5 278.1L1059.7 278.6M1074.8 271.6L1074.7 271.1M1073.8 270.4L1074.7 271.1M1074.8 271.6L1072.9 280.9M1059.7 278.6L1064.5 283M1072.9 280.9L1064.5 283M1048.7 310.2L1055.5 316.9M1048.7 310.2L1047 311.8M1047 322.6L1048.9 322.7M1048.9 322.7L1055.5 316.9M1072.9 280.9L1077.6 286.6M1075.2 292L1077.6 286.6M1075.2 292L1068.4 293.9M1064.5 283L1065 291.6M1068.4 293.9L1065 291.6M1051 284.1L1056 294M1065 291.6L1056 294M1320.9 336.8L1324.8 345.6M1320.9 336.8L1328.2 336M1324.8 345.6L1332.9 343.1M1332.9 343.1L1332.9 341.2M1329.8 337.7L1332.9 341.2M1337.1 337L1332.9 341.2M1339.8 331.8L1339.4 330.6M1339.4 330.6L1332 328.4M1328.2 336L1332 328.4M1332 328.4L1332 328.4M1332.9 343.1L1334.2 344.8M1320.5 336.6L1319.8 334.9M1320.9 336.8L1320.5 336.6M1332 328.4L1322.4 326.7M1319.8 334.9L1322.4 326.7M1341.7 327.1L1339.8 316.9M1341.7 327.1L1350.4 325M1350.4 325L1351.3 322.9M1351.3 322.9L1344 313.6M1339.8 316.9L1344 313.6M1343 343.1L1342.8 336.6M1352.6 336.3L1352.8 341.2M1352.1 329.1L1350.4 325M1339.4 330.6L1341.7 327.1M1356 269L1350.7 271.1M1356 279.5L1349.9 279.6M1350.7 271.1L1349.9 279.6M1356 291.5L1354.1 291.6M1350.7 288.7L1354.1 291.6M1350.7 288.7L1349.3 280.3M1349.3 280.3L1349.9 279.6M1348.6 242.5L1349.5 243.8M1356 244.9L1349.5 243.8M1268.3 264L1262.1 263.1M1268.3 264L1272.1 254.9M1272.1 254.9L1270.3 250.3M1272.1 254.9L1285.3 258.3M1285.3 258.3L1287.3 256.2M1287.3 256.2L1287.1 245.5M1287.1 245.5L1281.1 242.6M1325.9 317L1332 317.2M1332 328.4L1332 317.2M1322.4 326.7L1321.9 325.6M1321.9 325.6L1325.9 317M1339.8 316.9L1332 317.2M1321.6 272.1L1325.7 256.5M1321.6 272.1L1318.7 272.7M1325.7 256.5L1322.7 254M1322.7 254L1305.9 259.7M1305.9 259.7L1306 260.2M1318.7 272.7L1306 260.2M1072.8 410.1L1073.6 402.5M1065.5 409L1072.8 410.1M1064.2 406.6L1068 400.7M1073.6 402.5L1068 400.7M1059.2 397L1066.8 397.7M1059.2 397L1057.4 400.9M1066.8 397.7L1068 400.7M1307.8 374.8L1307.1 374.1M1302.5 378.8L1303.4 375.9M1307.1 374.1L1303.4 375.9M1294.1 382.7L1298.8 381.8M1294.5 386.6L1294.1 382.7M1133 463.4L1132.7 473M1132.7 473L1132.9 473.2M1136.8 460.1L1133 463.4M1136.8 460.1L1141.9 465.1M1141.9 465.1L1139.3 472.2M1132.9 473.2L1139.3 472.2M1145.7 464.6L1141.9 465.1M1145.7 464.6L1150.4 470M1142.8 474.4L1139.3 472.2M1142.8 474.4L1150.4 470.5M1150.4 470.5L1150.4 470M898.9 169.9L896.5 166.3M887.8 175.9L889.5 167.6M889.5 167.6L896.5 166.3M900.6 159.7L896.5 166.3M884.4 192.9L882.2 194.3M874.6 178.3L880.3 180.1M884.4 192.9L886.1 187.2M886.3 165.7L889.5 167.6M936 189.5L931.2 189.5M931.2 189.5L927.6 186.7M957.1 211.6L956 212.2M969.4 223.4L962.4 228.2M962.4 228.2L951.6 225.7M956 212.2L951.6 225.7M988.3 330.7L988.7 332.2M988.3 330.7L978.4 330.8M988.7 332.2L984.3 341.1M978.4 330.8L978.4 340.8M984.3 341.1L978.4 340.8M969.9 330.7L978.4 330.8M971.2 341.1L978.4 340.8M969 332.1L969.9 330.7M969 332.1L971.2 341.1M1040.3 399.7L1042.2 406.6M1040.3 399.7L1041.5 397.9M1051.4 402.4L1047.2 395.9M1041.5 397.9L1047.2 395.9M1038.8 322.7L1036.7 325.9M1028 316.7L1036.5 316.7M1028 316.7L1028 325.2M1028 325.2L1036.7 325.9M1014.2 297.6L1013.8 296.1M1014.2 297.6L1007.9 306M1007.9 306L1004.6 305.1M1013.8 296.1L1008.2 294M1033.6 282.7L1031.5 290M1044.9 284.6L1042 295.2M1031.5 290L1034.3 294.2M1034.3 294.2L1042 295.2M1049.5 308.2L1055.7 304M1049.5 308.2L1042 301.7M1055.7 304L1054.5 297.4M1054.5 297.4L1042.7 296.3M1042 301.7L1042.7 296.3M1038.2 312.4L1035.4 306.5M1048.7 310.2L1049.5 308.2M1042 301.7L1035.4 306.5M1054.5 297.4L1056 294M1042 295.2L1042.7 296.3M1020.8 300.9L1023.8 298.9M1020.8 300.9L1020.2 307.4M1023.8 298.9L1030.8 301M1020.2 307.4L1028 309M1028 309L1032.8 305.6M1032.8 305.6L1030.8 301M1013.8 296.1L1018.3 286.8M1024.3 291.7L1018.3 286.8M1024.3 291.7L1023.8 298.9M1014.2 297.6L1020.8 300.9M1009.2 307.4L1007.9 306M1009.2 307.4L1019.2 308.5M1019.2 308.5L1020.2 307.4M1024.3 291.7L1031.5 290M1034.3 294.2L1030.8 301M1028 316.7L1028 309M1035.4 306.5L1032.8 305.6M969.9 330.7L967.3 321.6M978.4 330.8L978.4 321.2M967.3 321.6L978.4 321.2M989.8 327.9L988.3 330.7M982 321.3L978.4 321.2M937.5 369.3L930.5 375M935.6 363.2L937.5 369.3M932.9 362.4L927.4 366M927.4 366L930 375.1M930.5 375L930 375.1M968.4 358L973.1 351.3M973.1 351.3L968.2 344.7M966.6 357.9L961.8 350.9M961.8 350.9L968.2 344.7M971.2 341.1L968.3 343.8M973.1 351.3L978.4 351.1M978.4 351.1L978.4 340.8M968.3 343.8L968.2 344.7M1005.3 262.7L1003 263.4M884.4 192.9L895.6 199.4M895.6 199.4L900.4 194.2M902 194.4L913.8 198.2M916.2 190.4L913.8 198.2M1048.5 415.8L1047.6 421.4M1055 422.6L1050.2 424.2M1047.6 421.4L1050.2 424.2M1252.6 485L1247.6 490.6M1247.6 490.6L1251.2 495.4M1244.4 476.4L1240 481.6M1244.4 476.4L1241.3 469.2M1241.3 469.2L1232.1 471.3M1232.1 471.3L1232.3 477.8M1232.3 477.8L1240 481.6M1126.6 461.9L1121.9 466.3M1126.6 461.9L1133 463.4M1132.7 473L1123.4 471.5M1123.4 471.5L1121.9 466.3M882.9 459.3L873.9 456M882.9 459.3L882 468.7M882 468.7L880.9 469.5M880.9 469.5L869.2 462.3M873.9 456L869.2 462.3M867.1 463L869.2 462.3M873.6 449.3L873.9 456M906.8 385.7L912.7 387.9M914.9 386.8L912.7 387.9M915.5 379L908.4 374.2M906.8 385.7L907 375.3M908.4 374.2L907 375.3M930 375.1L926.6 378M926.3 378L926.6 378M927.4 366L922.2 364.2M922.2 376.4L918.3 368M922.2 364.2L918.3 368M908.4 374.2L910.2 368.1M918.3 368L910.2 368.1M878.6 391L888.3 394.7M878.6 391L873.7 395.6M873.7 395.6L875.1 402.2M888.6 398.6L888.3 394.7M888.6 398.6L880.6 404.1M880.6 404.1L875.1 402.2M893.2 410.1L892.9 402.5M883.4 412.1L880.6 404.1M892.9 402.5L888.6 398.6M869.7 414.2L868.7 412.3M860 412.1L868.7 412.3M875.1 402.2L869.5 407.8M868.7 412.3L869.5 407.8M869.5 407.8L860.8 400.1M873.7 395.6L869.2 394M869.2 394L860.8 400.1M860 400L860.8 400.1M860 388.2L861.6 387.3M860.8 378.5L861.6 387.3M869.2 394L866.2 388.3M861.6 387.3L866.2 388.3M860 301.8L862.9 303.5M864.7 292.3L864.9 301.2M864.9 301.2L862.9 303.5M866.6 290.1L874.7 292.9M874.7 292.9L875.8 296.1M875.8 296.1L872.7 301M864.9 301.2L872.7 301M860 308.9L862.7 306.1M862.7 306.1L862.9 303.5M874.7 292.9L878.4 287.9M875.8 296.1L884.4 299.2M878.4 287.9L887.7 289M887.7 289L884.4 299.2M867.2 505.3L872.4 510.6M860 509L867.2 505.3M860 517.2L866.7 519M866.7 519L872.4 510.6M867.2 505.3L867.5 500.2M867.5 500.2L860 497M874.3 536.2L881.3 528.5M874.3 536.2L868.7 526.2M881.3 528.5L876.6 522.6M876.6 522.6L869.4 523.9M868.7 526.2L869.4 523.9M881.1 514.3L876.6 522.6M878.8 510.8L881.1 514.3M872.4 510.6L878.8 510.8M866.7 519L869.4 523.9M860 531.2L868.7 526.2M901.7 626.6L897.2 623.2M901.7 626.6L901 634M897.2 623.2L888.7 630.9M894.2 635L892 634.8M888.5 632.3L888.7 630.9M908 625.1L901.7 626.6M908 625.1L912.4 631.9M883.9 622.3L888.7 630.9M883.9 622.3L874.8 623.3M874.8 623.3L874.2 623.8M895.7 613.7L888.7 606.1M895.7 613.7L896 616.6M896 616.6L895.8 616.9M895.8 616.9L886.4 618.4M886.4 618.4L882 610.5M882 610.5L888.7 606.1M897.2 623.2L895.8 616.9M883.9 622.3L886.4 618.4M876.3 609.6L874.8 623.3M876.3 609.6L882 610.5M876.3 609.6L876.3 609.5M876.3 609.5L877.7 599.4M885.7 596.6L877.7 599.4M889.9 600.2L888.7 606.1M889.9 600.2L885.7 596.6M860 606.1L864.3 606.4M860.6 617.9L862.5 616.7M862.5 616.7L865.6 608.7M865.6 608.7L864.3 606.4M860.5 620.4L860.6 617.9M860.5 595L864.8 600.2M864.8 600.2L864.3 606.4M874 623.7L862.5 616.7M876.3 609.5L865.6 608.7M877.7 599.4L872.9 596M864.8 600.2L872.9 596M887.6 469.2L882 468.7M884.8 457.9L894.4 459.8M882.9 459.3L884.8 457.9M887.6 469.2L894.2 463.4M894.2 463.4L894.4 459.8M883.1 570.2L879.2 576.8M885.5 583.9L879.2 576.8M885.5 583.9L891.9 576.9M883.1 570.2L891.8 574.4M891.8 574.4L891.9 576.9M1044.5 413.3L1037.7 417.7M1042.1 406.9L1033.7 409.9M1037.7 417.7L1033.7 409.9M1040.3 399.7L1036.2 400.3M1036.2 400.3L1031.8 404.8M1031.8 404.8L1031.8 409M1033.7 409.9L1031.8 409M979.6 405.3L974.7 409.7M979.6 405.3L985.6 407.6M984.1 415.5L985.9 408.1M985.9 408.1L985.6 407.6M985.2 368.4L986.6 360.4M985.2 368.4L978.4 368.5M978.4 368.5L978.4 360.2M986.4 360.1L978.4 360.2M986.6 360.4L986.4 360.1M970.8 360.1L978.4 360.2M971.2 368.4L978.4 368.5M978.4 351.1L978.4 360.2M986.8 351.4L978.4 351.1M986.8 351.4L986.4 360.1M971.1 376.7L978.4 377.2M978.4 377.2L978.4 368.5M978.5 377.3L982.8 377.6M978.4 377.2L978.5 377.3M987.8 371.1L985.2 368.4M987.8 371.1L987.9 371.9M982.8 377.6L987.9 371.9M926.3 425.5L922 419M927.6 414.9L922 419M926.3 425.5L935.2 420.5M927.6 414.9L935.2 420.5M928.5 408.2L929 407.8M938.9 412.1L929 407.8M936.5 420.6L938.9 412.1M936.5 420.6L935.2 420.5M928.5 408.2L927.6 414.9M922 419L916.2 410.2M928.5 408.2L919.5 406.8M919.5 406.8L916.2 410.2M915.3 423.1L922 419M909.5 415.7L913.6 410.7M916.2 410.2L913.6 410.7M889.9 600.2L896.6 598.8M895.7 613.7L900.5 606.2M900.5 606.2L896.6 598.8M1049.5 615.5L1049.9 616.2M1049.5 615.5L1042.1 615.4M1040.2 620.2L1039.9 618.7M1039.9 618.7L1042.1 615.4M1084.5 584.1L1089.2 578.8M1084.5 584.1L1079.2 580M1079.2 580L1080.5 572M1080.5 572L1089.2 576.7M1089.2 576.7L1089.2 578.8M1083.1 619.1L1077.4 613.5M1077.4 613.5L1072.6 615.9M1078.2 607.9L1077.4 613.5M1091.5 612.9L1091.4 610.9M1078.2 607.9L1086.5 606M1091.4 610.9L1086.5 606M1071.8 581.7L1070.3 584.7M1070.3 584.7L1077 589.4M1071.8 581.7L1079.2 580M1084.5 584.1L1084.5 586.6M1077 589.4L1084.5 586.6M1091.4 610.9L1098.5 605.4M1086.5 606L1086.9 597.5M1098.7 598L1086.9 597.5M1098.5 605.4L1098.7 598M1057.8 611.7L1055.3 607.8M1049.5 615.5L1054.6 608M1055.3 607.8L1054.6 608M1125.3 606.8L1130.8 606.7M1125.3 606.8L1123.1 605.1M1130 595.1L1121.9 594.3M1123.1 605.1L1121.9 594.3M1109.6 598.6L1109.1 591.2M1111.2 588.9L1109.1 591.2M1109.6 598.6L1110.9 599.9M1111.2 588.9L1120.1 588.6M1120.1 588.6L1121.2 593.7M1110.9 599.9L1121.2 593.7M1139.8 632.6L1140.9 638.1M1140.9 638.1L1144.9 639M1136.9 658.8L1135.1 649.7M1135.1 649.7L1151.1 649M1116.9 653.4L1120.4 642.2M1116.9 653.4L1118.6 656.4M1118.8 656.4L1118.6 656.4M1118.8 656.4L1134.5 648.9M1120.4 642.2L1130.2 642.6M1130.2 642.6L1133.8 645.5M1134.5 648.9L1133.8 645.5M1116.7 637.2L1115.9 636.9M1108.3 641L1115.9 636.9M1108.5 649.9L1116.9 653.4M1116.7 637.2L1120.4 642.2M1112.4 664.7L1118.6 656.4M1127.6 664.6L1118.8 656.4M1135.1 649.7L1134.5 648.9M1123.6 630.7L1116.7 637.2M1129.4 632.8L1123.6 630.7M1129.4 632.8L1130.2 642.6M1129.4 632.8L1133.4 630M1140.9 638.1L1133.8 645.5M1132.2 620.3L1121.8 621.2M1125.3 606.8L1120.3 617.6M1121.8 621.2L1120.3 617.6M1123.6 630.7L1121.7 621.3M1121.8 621.2L1121.7 621.3M1115.9 636.9L1110.6 627.4M1121.7 621.3L1110.6 627.4M1099.7 631.3L1107.1 626.2M1107.1 626.2L1110.6 627.4M1090.5 320.7L1094.2 328M1094.2 328L1100.9 323.7M1055.7 304L1061.4 306.9M1068.4 293.9L1067.7 304.8M1061.4 306.9L1067.7 304.8M1079.9 297.5L1075.2 292M1074.6 306.8L1079.9 297.5M1074.6 306.8L1073 307.4M1073 307.4L1067.7 304.8M1057.5 196.7L1057.8 199.3M1061.4 200L1057.8 199.3M1055.7 221.4L1054.1 231.9M1055.7 221.4L1064.9 222.1M1065.1 222.2L1066.4 224.2M1066.4 224.2L1064.1 233.7M1064.1 233.7L1054.1 231.9M1068.4 238.5L1067 238.2M1068.4 238.5L1077.2 230.5M1067 238.2L1064.1 233.7M1074.9 226.2L1077.2 230.5M1072.1 225.1L1066.4 224.2M1067 238.2L1060.2 244.5M1053.4 232.4L1054.1 231.9M1070.7 210.7L1072.6 208M1070.7 210.7L1071.4 211.2M1065.5 204.9L1067.7 210.3M1068.9 211L1067.7 210.3M1068.9 211L1070.7 210.7M1080.4 231.4L1077.2 230.5M1087.8 264.2L1074.7 271.1M1087.8 264.2L1087.9 262.8M1085.8 260.8L1087.9 262.8M1316.4 346.4L1314.1 343.5M1316.7 354.2L1308.7 352.2M1314.1 343.5L1308.7 347.5M1308.7 347.5L1308.7 352.2M1314.1 342.8L1320.5 336.6M1314.1 342.8L1314.1 343.5M1314.1 342.8L1308 337.6M1308 337.6L1311.6 331.2M1319.8 334.9L1311.6 331.2M1314.4 322.8L1311.6 331.2M1314.4 322.8L1321.9 325.6M1308 337.6L1304.4 338.5M1304.4 338.5L1301.8 343.1M1308.7 347.5L1301.8 343.2M1301.8 343.2L1301.8 343.1M1300.2 331.8L1304.4 338.5M1296.8 332.5L1300.2 331.8M1296.8 332.5L1293 336.9M1301.8 343.1L1293 336.9M1313.5 279.9L1301.2 280.1M1301.2 280.1L1303.1 294.1M1315.7 286.4L1310.8 296.1M1310.8 296.1L1308 296.5M1315.7 286.4L1313.5 279.9M1308 296.5L1303.1 294.1M1307.1 374.1L1308.5 371.5M1308.5 371.5L1312.2 370.4M1313.6 369.1L1314.9 366M1317 356L1312 361.4M1314.9 365.8L1312 361.4M1356 320.7L1351.3 322.9M1335.5 241.5L1334.8 255M1325.7 256.5L1333.1 256.5M1325.4 241.3L1321.5 246.5M1322.7 254L1321.5 246.5M1334.8 255L1333.1 256.5M1349.5 243.8L1346.3 254.2M1334.8 255L1346.3 254.2M1356 258.7L1348.7 258.2M1350.7 271.1L1346.3 266M1346.3 266L1348.7 258.2M1346.3 254.2L1348.7 258.2M1311.6 243.3L1303.9 250.6M1311.6 243.3L1310.6 234.4M1303.9 250.6L1295.3 240.7M1300.3 234.4L1296.2 235.4M1296.2 235.4L1295.3 240.7M1321.5 246.5L1311.6 243.3M1305.9 259.7L1303.7 255.9M1303.7 255.9L1303.9 250.6M1303.7 255.9L1287.3 256.2M1287.1 245.5L1295.3 240.7M1295.4 234.4L1296.2 235.4M1280.4 274L1285.9 268.1M1280.4 274L1288 285.1M1285.9 268.1L1298.8 270.5M1288 285.1L1301.1 280M1301.1 280L1298.8 270.5M1285.3 258.3L1285.9 268.1M1306 260.2L1298.8 270.5M1318.7 272.7L1313.5 279.9M1301.2 280.1L1301.1 280M1314.2 322.5L1316.9 316.5M1314.2 322.5L1314.4 322.8M1325.9 317L1324.5 315.8M1316.9 316.5L1324.5 315.8M1329.7 279.8L1338.1 279.9M1338.4 267.5L1338.1 279.9M1336.8 266.4L1338.4 267.5M1336.8 266.4L1322.7 272.5M1322.7 272.5L1329.7 279.8M1325.7 289.6L1326.4 291.4M1337.1 293.9L1326.4 291.4M1337.8 293.5L1337.1 293.9M1337.8 293.5L1338.1 279.9M1325.7 289.6L1329.7 279.8M1349.3 280.3L1338.1 279.9M1346.3 266L1338.4 267.5M1333.1 256.5L1336.8 266.4M1321.6 272.1L1322.7 272.5M1315.7 286.4L1325.7 289.6M1350.7 288.7L1340.9 294.2M1340.9 294.2L1337.8 293.5M1345.8 301.2L1342.8 307.9M1345.8 301.2L1352.2 300.1M1352.2 300.1L1355.5 304M1355.5 304L1352.5 310.7M1352.5 310.7L1344.5 312.4M1344.5 312.4L1342.8 307.9M1333.8 304.1L1337.1 293.9M1333.8 304.1L1342.8 307.9M1340.9 294.2L1345.8 301.2M1354.1 291.6L1352.2 300.1M1356 313.9L1352.5 310.7M1344 313.6L1344.5 312.4M1332 304.9L1332 317.2M1332 304.9L1333.8 304.1M1248.2 476.9L1244.4 476.4M1256.2 466.7L1245 463.9M1241.3 469.2L1241.9 466.7M1245 463.9L1241.9 466.7M1257.7 465.6L1258.3 462.3M1246.4 456.2L1255 456.1M1258.3 458.7L1255 456.1M1246.4 456.2L1246 456.8M1245 463.9L1246 456.8M1260.7 458.1L1263.8 456.4M1263.8 456.4L1265.4 457.1M1265.3 469.4L1271 465.3M1268.3 264L1271.7 273.8M1280.4 274L1273.1 274.5M1273.1 274.5L1271.7 273.8M1293.7 382.5L1294.1 382.7M1288.5 391.5L1286.2 391.4M1291.6 382.6L1293.7 382.5M1283.9 384L1286.2 391.4M1163.5 305.9L1167.1 310.9M1155.1 309.4L1155.1 315.5M1165.2 314.8L1155.1 315.5M1167.1 310.9L1165.2 314.8M1174.2 309.6L1167.1 310.9M1174.2 301.4L1174.2 309.6M1093.3 423.5L1098.1 424.2M1093.3 423.5L1090 425.9M1092.5 434.1L1090 425.9M1092.5 434.1L1099 432.5M1098.1 424.2L1099 432.5M1062.3 381.2L1059.8 387.5M1059.8 387.5L1069.5 391.7M1071.9 385.8L1069.5 391.7M1062.3 381.2L1068.7 380.2M1068.7 380.2L1071.9 385.8M1066.8 397.7L1069.5 391.7M1057.8 393.6L1059.8 387.5M1057.8 393.6L1059.2 397M1059.8 387.5L1059.8 387.5M1086.2 353.5L1080.3 346M1086.2 353.5L1078.2 357.6M1078.2 357.6L1074.4 355.5M1076.1 346.9L1073.8 353.9M1076.1 346.9L1080.3 346M1073.8 353.9L1074.4 355.5M1075.9 334.4L1074.7 334.9M1075.9 334.4L1084.6 339.8M1070.7 342.1L1076.1 346.9M1084.6 339.8L1080.3 346M1144 314.7L1143.4 314.2M1144 314.7L1155.1 315.5M1143.4 314.2L1143.8 312.6M1083.1 285L1085.3 286M1083.1 285L1083.6 277M1085.3 286L1092.4 283.3M1088.5 274.4L1083.6 277M1088.5 274.4L1093.3 278.3M1093.3 278.3L1092.4 283.3M1079.9 297.5L1086.7 298.1M1086.7 298.1L1088.6 294.9M1077.6 286.6L1083.1 285M1088.6 294.9L1085.3 286M1074.8 271.6L1083.6 277M1089.4 266.7L1087.8 264.2M1089.4 266.7L1088.5 274.4M1089.4 266.7L1101 270M1100.7 275.1L1101.4 271.3M1100.7 275.1L1093.3 278.3M1293.7 382.5L1292.9 373.7M1284.5 378.1L1284.5 374.7M1284.5 374.7L1292.9 373.7M1297 371.5L1294.4 371.8M1297 371.5L1303.4 375.9M1292.9 373.7L1294.4 371.8M1122.6 508.2L1124.4 502.1M1122.6 508.2L1130.1 514.6M1132.5 513.9L1130.1 514.6M1132.5 513.9L1133.1 503.3M1124.4 502.1L1129.4 499.7M1133.1 503.3L1129.4 499.7M1145.2 483.5L1145 483.4M1142.8 474.4L1145 483.4M1145.2 483.5L1151 481.6M1150.4 470.5L1153.1 473.7M1151 481.6L1153.1 473.7M1145.2 485.4L1138.4 493.3M1145.2 485.4L1150.7 495.6M1138.4 493.3L1143.7 499.6M1143.7 499.6L1150 498.2M1150.7 495.6L1150 498.2M941.3 207.1L941.3 207.2M941.3 207.1L927.8 202.8M941.3 207.2L937.7 217.2M923.1 214.6L927.8 202.8M936.2 218.2L937.7 217.2M936.2 218.2L923.7 216.4M923.1 214.6L923.7 216.4M943.5 200.1L941.3 207.1M956 212.2L941.3 207.2M931.2 189.5L927.8 202.8M951.6 225.7L951.3 225.9M951.3 225.9L937.7 217.2M910.6 207.5L913.8 198.2M910.6 207.5L923.1 214.6M913.8 198.2L927.8 202.8M1059.8 387.5L1052.1 385.2M1057.8 393.6L1049.1 393.8M1052.1 385.2L1049.1 393.8M1047.2 395.9L1047.9 394.5M1049.1 393.8L1047.9 394.5M1047.9 394.5L1043 386.6M1049.7 382.1L1043 386.6M1052.1 385.2L1049.7 382.1M1019.3 316.7L1009.6 316.7M1019.2 308.5L1019.3 316.7M1009.2 307.4L1009.6 316.7M1028 316.7L1019.3 316.7M999.7 316.7L1009.6 316.7M1028 325.2L1026.2 326.6M1019.3 316.7L1019.2 325.2M1026.2 326.6L1019.2 325.2M999.7 316.7L1000.6 325.2M1009.6 316.7L1009.3 324.3M1000.6 325.2L1009.3 324.3M991.2 326.9L999.1 327M1000.6 325.2L999.1 327M1019.2 325.2L1017.1 326.9M1017.1 326.9L1011.6 326.8M1009.3 324.3L1011.6 326.8M987.8 371.1L995.1 365.8M987.9 371.9L991.6 375.2M997.8 374.2L991.6 375.2M997.8 374.2L998.3 373.5M995.1 365.8L998.3 373.5M997.8 374.2L998.8 379.8M1003.9 381.4L1006.2 380.1M1006.1 372.5L1006.2 380.1M1006.1 372.5L1005.2 371.8M998.8 379.8L1003.9 381.4M998.3 373.5L1005.2 371.8M1019.1 283.2L1018.2 286.6M1019.1 283.2L1010.3 275.9M1018.2 286.6L1008.9 286.7M1010.3 275.9L1007.3 277.5M1024.6 278.2L1019.1 283.2M1018.3 286.8L1018.2 286.6M1011.2 272.9L1010.3 275.9M978.4 321.2L978.4 316.7M947.1 383L941.4 380.1M947.1 383L952.6 378.6M941.4 380.1L942.8 371M952.6 378.6L947.3 368.7M947.3 368.7L942.8 371M954 378.5L959.1 384M959.1 384L955.7 391M954 378.5L952.6 378.6M955.7 391L952.3 392.3M947.6 387.1L952.3 392.3M947.6 387.1L947.1 383M937.5 369.3L942.8 371M930.5 375L939.9 380.4M939.9 380.4L941.4 380.1M960.6 372.1L954 378.5M948.9 365.6L951.2 365M948.9 365.6L947.3 368.7M943.6 359L948.9 365.6M943.6 359L942 358.7M955.3 360.3L954.7 352M961.8 350.9L956.7 350.2M954.7 352L956.7 350.2M943.6 359L949.3 351.9M954.7 352L949.3 351.9M936.5 349.2L942.8 344.5M936.5 349.2L936.4 350.1M949.3 351.9L942.8 344.5M934 334.8L928.5 343M936.5 349.2L928.5 343M936.5 334L934 334.8M936.5 334L943.9 340.8M943.9 340.8L942.8 344.5M969 332.1L961 334.2M968.3 343.8L960.2 338.7M961 334.2L960.2 338.7M956.7 350.2L955.5 342.1M960.2 338.7L955.5 342.1M943.9 340.8L948.1 338.9M948.1 338.9L955.5 342.1M967.2 286L963.5 289.1M967.2 286L962.7 275.9M963.5 289.1L953.7 288.3M962.7 275.9L953.8 277.9M953.8 277.9L950.7 282.1M950.7 282.1L950.5 284.7M950.5 284.7L953.7 288.3M961 334.2L956.7 328.6M948.1 338.9L950.6 330.2M950.6 330.2L956.7 328.6M967.3 321.6L966.3 320.8M966.3 320.8L959.2 323.1M959.2 323.1L956.7 328.6M980.3 240.5L977.8 238.4M878.4 287.9L876.1 279.7M865.9 284.7L874.8 279M874.8 279L876.1 279.7M861.4 272.9L872.7 272.9M874.8 279L872.7 272.9M862.8 263.4L869.1 261.9M869.1 261.9L873.5 270.6M872.7 272.9L873.5 270.6M861.1 213.7L871.4 219.9M860 230L866.8 231.7M871.4 219.9L866.8 231.7M879.2 208.4L880.6 210.8M880.6 210.8L879.3 216.2M871.4 219.9L879.3 216.2M860.2 248.5L870.4 236.8M866.8 231.7L870.4 236.8M924.3 230.1L916.9 234M921.8 220.1L924.3 230.1M921.8 220.1L910.2 223.1M910.2 223.1L909.2 229.5M916.9 234L909.2 229.5M1020.7 394.5L1026.7 399.7M1020.8 406L1026.7 399.7M1017 400.5L1020 405.6M1017 400.5L1019.2 394.5M1019.2 394.5L1020.7 394.5M1020.8 406L1020 405.6M1021.4 406.8L1031.1 409.4M1021.4 406.8L1020.8 406M1031.8 404.8L1026.7 399.7M1031.8 409L1031.1 409.4M1036.2 400.3L1031 395.1M1031 395.1L1026.7 399.7M1092.5 434.1L1090.4 437.8M1083.5 436.4L1089.8 438M1083 433L1083.5 436.4M1090 425.9L1086.8 426M1086.8 426L1083 433M1090.4 437.8L1089.8 438M1105 446.9L1096.8 446.9M1104.5 440.5L1105 446.9M1104.5 440.5L1101.7 438.2M1101.7 438.2L1096.6 441.2M1096.6 441.2L1096.8 446.9M1096.5 453.8L1096.8 446.9M1102 455.7L1096.5 453.8M1102 455.7L1104.5 452.8M1104.5 452.8L1105 446.9M1101.3 434.2L1099 432.5M1090.4 437.8L1096.6 441.2M1101.3 434.2L1101.7 438.2M1088.8 446.8L1096.8 446.9M1089.8 438L1088.8 446.8M1089.7 455.4L1088.8 446.8M1091.8 456.3L1089.7 455.4M1096.5 453.8L1091.8 456.3M1138.4 493.3L1132.2 492.1M1132.2 492.1L1132.7 483M1145 483.4L1132.7 483M1145.2 485.4L1145.2 483.5M1141.6 502.4L1143.7 499.6M1133.1 503.3L1141.6 502.4M1129.4 499.7L1130.2 494M1130.2 494L1132.2 492.1M1132.9 473.2L1132.7 483M1120.8 490.4L1130.2 494M1124.4 502.1L1117.9 498.6M1120.8 490.4L1119.3 491.5M1117.9 498.6L1119.3 491.5M1094.5 497.2L1097.3 494.9M1094.5 497.2L1086.4 494.5M1097.3 494.9L1094.2 485.9M1086.7 488.1L1094.2 485.9M1086.7 488.1L1086.4 494.5M1121.3 474.1L1121.5 482.6M1132.7 483L1121.5 482.6M1123.4 471.5L1121.3 474.1M1120.8 490.4L1121.5 482.6M1077.8 424.6L1075.9 427.8M1077.8 424.6L1077 420.7M1075.9 427.8L1068.6 426.1M1077 420.7L1069.6 418.8M1068.6 426.1L1067.3 422M1067.3 422L1069.1 419M1069.6 418.8L1069.1 419M1076.1 428.5L1083 433M1076.1 428.5L1075.9 427.8M1085.4 424.9L1086.8 426M1085.4 424.9L1077.8 424.6M1083.8 417L1085.4 424.9M1079.6 417.2L1083.8 417M1079.6 417.2L1077 420.7M1065.7 431.7L1073.1 435.5M1065.7 431.7L1068.6 426.1M1073.1 435.5L1076.1 428.5M1079.6 417.2L1076.1 411.8M1076.1 411.8L1073.8 411.4M1073.8 411.4L1069.6 418.8M1064.4 412.9L1069.1 419M1063.2 421.7L1067.3 422M1072.8 410.1L1073.8 411.4M1083.5 436.4L1081.8 437.9M1073.1 435.5L1074.1 438M1074.1 438L1074.7 438.4M1081.8 437.9L1074.7 438.4M1074.1 438L1066.4 441.8M1066.4 441.8L1066.4 446.6M1066.4 446.6L1074.9 446.8M1074.7 438.4L1074.9 446.8M873.6 449.3L885.3 449.3M879.1 437.4L884.8 441.3M884.8 441.3L885.3 449.3M892.2 433.4L890.9 439.3M884.8 441.3L890.9 439.3M884.8 457.9L885.3 449.3M860.8 378.5L863.4 376.7M863.4 376.7L871 379.8M866.2 388.3L871.6 382.1M871.6 382.1L871 379.8M878.6 391L878.4 385.7M871.6 382.1L878.4 385.7M888.3 394.7L891.5 390.5M888.2 383.4L891.5 390.5M888.2 383.4L883.2 381.5M878.4 385.7L883.2 381.5M897.2 366.9L898.4 375.8M897.2 366.9L889.4 366.2M888.6 372.7L895 377.2M888.6 372.7L889.4 366.2M895 377.2L896.9 377.1M898.4 375.8L896.9 377.1M910.2 368.1L909.4 366.5M907 375.3L898.4 375.8M900.6 363.4L897.2 366.9M900.6 363.4L909.4 366.5M883.2 381.5L882.5 375.8M882.5 375.8L888.6 372.7M888.2 383.4L895 377.2M891.5 390.5L899.7 389.1M899.7 389.1L899.8 388.9M899.8 388.9L896.9 377.1M906.8 385.7L899.8 388.9M930.2 355.6L923.2 354.7M922.2 364.2L921.2 356.1M923.2 354.7L921.2 356.1M928.5 343L925.5 343.4M923.2 354.7L925.5 343.4M934 334.8L924.1 329.3M924.1 329.3L920.1 340.2M925.5 343.4L920.1 340.2M915.7 266.4L918.9 274.9M915.7 266.4L907.1 266.5M918.9 274.9L911.8 278.4M907.1 266.5L903.1 274.8M911.8 278.4L903.1 274.8M860 488.5L862.1 486.8M862.1 486.8L860 479.7M879.3 473.4L880.9 469.5M866.2 464.3L865.7 472.7M879.3 473.4L871.6 477.1M871.6 477.1L865.7 472.7M865.7 472.7L860 475.6M876.1 495.6L871.8 496.1M876.1 495.6L880.1 490.4M871.8 496.1L865.9 486.9M880.1 490.4L879.5 487.9M879.5 487.9L871.4 481.8M871.4 481.8L865.9 486.9M881.3 504.1L878.8 510.8M881.3 504.1L876.1 495.6M867.5 500.2L871.8 496.1M890.4 492.4L888.5 502.2M881.3 504.1L888.5 502.2M890.4 492.4L880.1 490.4M862.1 486.8L865.9 486.9M871.6 477.1L871.4 481.8M883.8 480.2L879.3 473.4M883.8 480.2L879.5 487.9M860 550.6L863.9 549.7M863.9 549.7L860 538.2M874.3 536.2L874.2 537.5M860 537.5L874.2 537.5M889 539.5L879.4 542.3M889 539.5L886.5 529.6M879.4 542.3L875.8 540.7M881.3 528.5L885.6 528.6M886.5 529.6L885.6 528.6M874.2 537.5L875.8 540.7M879.2 576.8L873 578.2M873 578.2L872.7 587.9M885.3 587.9L872.7 587.9M885.5 583.9L885.3 587.9M864 587.9L872.7 587.9M872.9 596L872.7 587.9M860.5 595L864 587.9M885.7 596.6L885.3 587.9M918.9 473.3L912.1 468.2M923.1 463.4L918.9 473.3M923.1 463.4L914.7 460.2M914.7 460.2L912.1 468.2M903.3 449.3L908.9 442.9M903.3 449.3L896.2 449.3M896.2 444.7L896.2 449.3M896.2 444.7L902.7 437.7M902.7 437.7L908.9 442.9M913.1 443.3L911.4 456.1M913.1 443.3L908.9 442.9M911.4 456.1L910.1 456.2M910.1 456.2L903.3 449.3M896.2 457.8L896.2 449.3M904.6 459.8L910.1 456.2M896.2 457.8L904.6 459.8M885.3 449.3L896.2 449.3M890.9 439.3L896.2 444.7M902.3 433.4L902.7 437.7M914.3 442.7L915.4 434.4M914.3 442.7L913.1 443.3M894.4 459.8L896.2 457.8M967.5 476.8L962.5 481M962.5 481L956.7 477.2M964 469.2L967.5 476.8M964 469.2L961.1 468.5M956.7 477.2L961.1 468.5M960.6 467.9L950.2 467.1M950.2 467.1L951.6 457.4M960.1 458.4L960.6 467.9M960.1 458.4L960.1 458.4M960.1 458.4L951.6 457.4M930.9 496.1L931 487.1M930.9 496.1L925 498.2M925 498.2L922.8 496.6M922.8 496.6L921.8 487.1M931 487.1L921.8 487.1M894.2 463.4L899.2 469.4M904.6 459.8L905.1 467.8M899.2 469.4L905.1 467.8M914.7 460.2L913.1 457M912.1 468.2L907.6 469.3M913.1 457L911.4 456.1M905.1 467.8L907.6 469.3M985.9 550.1L996.1 547M996.1 547L996.5 557.4M984.8 554.5L988.3 559M984.8 554.5L985.9 550.1M988.3 559L996.5 557.4M975.8 564.4L976.7 556.9M975.8 564.4L967 566.1M967 566.1L964.4 562.6M964.4 562.6L966.8 552.9M976.7 556.9L972.4 551.7M972.4 551.7L968.7 551.4M968.7 551.4L966.8 552.9M979.1 567.2L975.8 564.4M979.1 567.2L986.7 564.9M986.7 564.9L988.3 559M984.8 554.5L976.7 556.9M980.3 543.1L985.9 550.1M979.4 543.1L980.3 543.1M979.4 543.1L972.4 551.7M885.3 587.9L898.4 587.9M898.2 582.1L898.4 587.9M891.9 576.9L898.2 582.1M898.2 596.9L909.8 597.7M898.2 596.9L898.4 587.9M909.8 597.7L909.7 587.9M898.4 587.9L909.7 587.9M896.6 598.8L898.2 596.9M881.2 552.1L879.4 542.3M881.2 552.1L892.1 549.3M889 539.5L889.1 539.6M892.1 549.3L889.1 539.6M982.8 377.6L986.1 381.9M991.6 375.2L991.1 380.1M986.1 381.9L991.1 380.1M998.8 379.8L995 383.3M991.1 380.1L995 383.3M1002.3 390L1003.9 381.4M1002.3 390L995.1 384.7M995 383.3L995.1 384.7M991.5 392.9L989.9 389.8M991.5 392.9L989.9 398.7M989.9 389.8L985 387.9M989.1 399.1L989.9 398.7M989.1 399.1L981.6 396.9M981.6 396.9L981.6 396.7M981.6 396.7L985 387.9M985 387.9L985 387.9M1002.3 390L1002.5 390.6M1000.8 393.5L1002.5 390.6M995.1 384.7L989.9 389.8M1000.8 393.5L991.5 392.9M996.3 402.5L989.9 398.7M1000.9 396L996.3 402.5M1000.9 396L1000.8 393.5M986.1 381.9L985 387.9M978.8 401.8L981.6 396.9M979.6 405.3L978.8 401.8M985.6 407.6L989.1 399.1M967.9 405.9L961.2 401M968.2 405.8L971.5 399.2M961.2 401L964 394.3M964 394.3L964.1 394.3M964.1 394.3L971.5 399.2M978.8 401.8L971.5 399.2M960 412.2L956.7 414M960 412.2L956.7 402.6M956.7 414L948.3 411.7M956.7 402.6L954.3 402M954.3 402L947.2 410.1M947.2 410.1L948.3 411.7M960.8 423.6L956.2 420M962.8 412.5L960 412.2M956.2 420L956.7 414M961.2 401L956.7 402.6M956.2 420L950 422.9M947.5 419.6L948.3 411.7M950 422.9L947.5 419.6M951.3 396.4L952.3 392.3M964 394.3L955.7 391M951.3 396.4L954.3 402M943.6 408.9L947.2 410.1M938.9 412.1L943.6 408.9M937.4 421.7L936.5 420.6M937.4 421.7L947.5 419.6M951.3 396.4L942.5 398.9M947.6 387.1L939.5 392.2M939.5 392.2L942.5 398.9M929 407.8L931.3 401.6M943.6 408.9L941 402.1M931.3 401.6L941 402.1M941 402.1L942.5 398.9M911.5 396.7L902 394.9M911.5 396.7L911.9 397.4M911.9 397.4L908.3 404.6M900.1 400L902 394.9M900.1 400L904.4 405M904.4 405L908.3 404.6M912.7 387.9L911.5 396.7M899.7 389.1L902 394.9M918.4 399.4L919.5 406.8M918.4 399.4L911.9 397.4M913.6 410.7L908.3 404.6M892.9 402.5L900.1 400M901.5 410.5L904.4 405M1190.2 503.6L1196.9 509.3M1183.5 511.3L1190.2 503.6M1192.4 515.1L1196.9 509.3M1192.4 515.1L1186.2 515.3M1183.5 511.3L1186.2 515.3M1195.8 520.6L1192.4 515.1M1204.3 515.5L1196.9 509.3M1196.2 496.2L1190.2 503.6M1182.7 497.3L1190.2 503.6M1196.2 496.2L1187.1 491.8M1187.1 491.8L1182.7 497.3M1181.8 536.1L1179.9 532.6M1179.9 532.6L1184.1 525.9M1184.1 525.9L1189.6 527.3M1171.2 533.1L1171.9 543.6M1171.2 533.1L1179.9 532.6M1171.2 533.1L1170.1 532.3M1170.1 532.3L1172.4 519.8M1183.2 523.8L1172.4 519.8M1183.2 523.8L1184.1 525.9M1183.2 523.8L1186.2 515.3M1126.8 556.5L1121.5 557.2M1126.8 556.5L1130.1 561.5M1130.1 561.5L1129.8 563.9M1125.4 568L1129.8 563.9M1125.4 568L1119.8 566.5M1119.8 566.5L1118.7 565.2M1118.7 565.2L1121.5 557.2M1099.8 561.7L1101.7 560.4M1099.8 561.7L1098.6 566.9M1101.7 560.4L1110.8 565.3M1098.6 566.9L1099.4 568.7M1099.4 568.7L1108.3 571.3M1110.8 565.3L1108.3 571.3M1089.9 566.8L1098.6 566.9M1089.1 566L1089.9 566.8M1092.5 557.7L1099.8 561.7M1089.1 566L1092.5 557.7M1089.9 566.8L1090.7 574.9M1097.3 573.7L1090.7 574.9M1097.3 573.7L1099.4 568.7M1117.2 573.8L1119.8 566.5M1108.3 571.3L1108.7 572.9M1118.7 565.2L1112.1 564.3M1112.1 564.3L1110.8 565.3M1117.2 573.8L1109.1 573.2M1109.1 573.2L1108.7 572.9M1029 616.7L1039.9 618.7M1059.1 569.3L1051.4 570.7M1059.1 569.3L1062.2 575.3M1062.2 575.3L1060.9 578.1M1060.9 578.1L1051.9 580.4M1051.9 580.4L1051.4 570.7M1070.4 573.2L1062.2 575.3M1070.4 573.2L1070.8 572.4M1070.8 572.4L1062.7 564M1062.7 564L1059.1 569.3M1070.4 573.2L1071.8 581.7M1066.4 585.4L1067.9 585.8M1070.3 584.7L1067.9 585.8M1066.4 585.4L1060.9 578.1M1056.6 588.5L1066.4 585.4M1051.1 581.8L1056.6 588.5M1051.1 581.8L1051.9 580.4M1085.3 517L1089.8 512.1M1085.3 517L1079.4 509.6M1089.8 512.1L1088.3 505.8M1079.4 509.6L1079.3 508.4M1079.3 508.4L1087.1 505.4M1087.1 505.4L1088.3 505.8M1083.4 496.8L1086.4 494.5M1083.4 496.8L1087.1 505.4M1093.7 502.9L1094.5 497.2M1093.7 502.9L1088.3 505.8M1074.9 515.6L1079.4 509.6M1079.5 521.1L1074.9 515.6M1079.5 521.1L1083.1 520M1085.3 517L1085.3 517M1083.1 520L1085.3 517M1094.8 513.2L1096.9 518.3M1094.8 513.2L1099 507.4M1099.8 518.9L1105.2 513.6M1099 507.4L1105.2 513.6M1099.8 518.9L1096.9 518.3M1093.3 521.2L1085.3 517M1089.8 512.1L1094.8 513.2M1093.3 521.2L1096.9 518.3M1099 507.4L1093.7 502.9M1099 507.4L1099 507.4M1102.9 524.2L1106.4 524.3M1102.9 524.2L1099.8 518.9M1111 519.3L1105.2 513.6M1106.4 524.3L1111 519.3M1112 506.6L1105.2 513.6M1116.6 514.1L1111 519.3M1112 506.6L1116.7 510.4M1116.7 510.4L1116.6 514.1M1134.4 514.6L1137.6 519.8M1134.4 514.6L1142.6 510.3M1137.6 519.8L1146.1 521.5M1142.6 510.3L1146.8 512.3M1146.8 512.3L1147.6 519.6M1146.1 521.5L1147.6 519.6M1141.6 502.4L1142.6 510.3M1132.5 513.9L1134.4 514.6M1134.7 528.1L1136.5 531.7M1136.5 531.7L1138.8 532.6M1146.3 524.9L1138.8 532.6M1134.7 528.1L1137.6 519.8M1146.3 524.9L1146.1 521.5M1153.1 502L1150 498.2M1153.4 508.1L1146.8 512.3M1153.4 508.1L1153.1 502M1158.1 512L1155.4 519.5M1158.1 512L1153.4 508.1M1155.4 519.5L1147.6 519.6M1143.1 546.3L1149.7 541.7M1149.9 536.6L1149.7 541.7M1149.9 536.6L1140.1 534.4M1140.1 534.4L1139.3 541.6M1143.1 546.3L1142.6 546.1M1139.3 541.6L1142.6 546.1M1130.1 561.5L1139.4 558.3M1139.4 558.3L1135.1 551.3M1126.8 556.5L1127.9 553.8M1127.9 553.8L1133.8 550.8M1135.1 551.3L1133.8 550.8M1155.4 547L1149.7 552.8M1156.9 547L1155.4 547M1151.3 556.6L1149.7 552.8M1142.6 546.1L1135.1 551.3M1143.1 546.3L1145.9 551.6M1139.4 558.3L1139.5 558.4M1139.5 558.4L1145.9 551.6M1149.7 541.7L1155.4 547M1149.7 552.8L1145.9 551.6M1095.1 544.9L1096.7 550.4M1091.7 554.9L1096.7 550.4M1091.7 554.9L1086.4 549.3M1095.1 544.9L1090.3 543.7M1086.4 549.3L1090.3 543.7M1092.5 557.7L1091.6 555.7M1091.6 555.7L1082.1 558.9M1089.1 566L1086.3 565.8M1082.1 558.9L1086.3 565.8M1089.2 576.7L1090.7 574.9M1080.5 572L1080.1 571.2M1086.3 565.8L1080.1 571.2M1070.8 572.4L1075.8 569.4M1080.1 571.2L1075.8 569.4M1076.2 606.1L1067.9 606.3M1076.2 606.1L1076.6 597M1067 596.5L1076.6 597M1066.9 605.3L1067 596.5M1066.9 605.3L1067.9 606.3M1078.2 607.9L1076.2 606.1M1067.8 613.1L1067.9 606.3M1086.9 597.5L1076.6 597M1067.9 585.8L1067 596.5M1077 589.4L1076.6 597M1055.7 607.2L1056.1 596M1055.7 607.2L1066.9 605.3M1056.1 596L1067 596.5M1055.7 607.2L1055.3 607.8M1056.6 588.5L1056.1 596M1087.3 590.1L1086.9 597.5M1087.3 590.1L1084.5 586.6M1056.1 596L1044.7 595.4M1054.6 608L1046.2 605.1M1046.2 605.1L1044.7 595.4M1042.1 615.4L1040.7 608.7M1046.2 605.1L1040.7 608.7M1051.1 581.8L1045.5 583.6M1043.2 587.9L1045.5 583.6M1043.2 587.9L1044.5 595.2M1044.7 595.4L1044.5 595.2M1120.2 588.4L1116.4 581.1M1120.2 588.4L1125.8 584.4M1125.8 584.4L1125.6 576.8M1116.4 581.1L1119 576.3M1119 576.3L1125.6 576.8M1111.3 580.4L1109.2 583.3M1111.2 588.9L1109.2 583.3M1120.1 588.6L1120.2 588.4M1111.3 580.4L1116.4 581.1M1121.2 593.7L1121.9 594.3M1131.1 585.9L1125.8 584.4M1117.2 573.8L1119 576.3M1109.1 573.2L1111.3 580.4M1125.4 568L1127.2 574.9M1127.2 574.9L1125.6 576.8M1113.9 614.4L1105.9 617.4M1113.9 614.4L1113.5 605.3M1104.2 608.2L1111.5 603.5M1104.2 608.2L1105.4 617M1105.4 617L1105.9 617.4M1113.5 605.3L1111.5 603.5M1120.3 617.6L1113.9 614.4M1107.1 626.2L1105.9 617.4M1123.1 605.1L1113.5 605.3M1109.6 598.6L1098.7 598M1098.5 605.4L1104.2 608.2M1110.9 599.9L1111.5 603.5M1095.2 616.9L1105.4 617M1073.8 353.9L1064.7 351.2M1066.6 342.8L1065.2 344.2M1064.7 351.2L1065.2 344.2M1065.2 344.2L1055.2 343.2M1062.7 334.1L1056.4 334.2M1056.4 334.2L1055.2 343.2M1049.7 382.1L1049.8 379.7M1062.3 381.2L1057.9 375.5M1057.9 375.5L1049.8 379.7M1067.9 368.6L1058.4 372.4M1069.9 378.2L1067.9 368.6M1068.7 380.2L1069.9 378.2M1057.9 375.5L1058.4 372.4M1091.6 302.6L1087.3 299.8M1087.3 299.8L1083.8 309M1083.8 309L1084.9 310.8M1089.8 320.5L1084.8 319.7M1084.4 318.9L1084.8 319.7M1074.6 306.8L1083.8 309M1086.7 298.1L1087.3 299.8M1102.2 348.6L1102 348.1M1102.2 348.6L1107.2 351.3M1107.2 351.3L1113.4 349M1113 341.3L1113.4 349M1113 341.3L1105.8 340.2M1102 348.1L1105.8 340.2M1060.9 322.9L1060.8 317.1M1060.9 322.9L1066.3 327.4M1060.8 317.1L1073.1 317.3M1066.3 327.4L1072.8 322.5M1072.8 322.5L1073.1 317.3M1048.9 322.7L1055.6 326.5M1055.6 326.5L1060.9 322.9M1055.5 316.9L1060.8 317.1M1066.3 330L1066.3 327.4M1056.4 334.2L1055.4 333.3M1055.6 326.5L1055.4 333.3M1061.4 306.9L1060.8 317.1M1073 307.4L1073.1 317.3M1075.9 334.4L1078.5 328M1078.5 328L1072.8 322.5M1082.4 326.8L1078.5 328M1080.2 317.5L1073.1 317.3M1084.8 319.7L1082.4 326.8M1057.3 211L1053.4 202.9M1057.3 211L1055.2 214.3M1052.3 218L1052.8 218.1M1046.7 212.8L1043.7 209.9M1043.7 209.9L1043.5 208.4M1043.5 208.4L1050.1 202.6M1050.1 202.6L1053.4 202.9M1067.7 210.3L1057.3 211M1057.8 199.3L1053.4 202.9M1055.7 221.4L1052.8 218.1M1041.2 225.4L1052.3 218M1042.5 211.4L1043.7 209.9M1035.7 203.6L1043.5 208.4M1047.2 197.3L1050.1 202.6M1079.9 250.9L1073.8 247.5M1073.5 244.2L1073.8 247.5M1073.5 244.2L1082.8 239.6M1068 254.8L1073.8 247.5M1068.4 238.5L1073.5 244.2M1087.9 262.8L1092.4 259M1100.7 275.1L1103.2 279M1143.4 314.2L1136.5 315.4M1301.8 343.2L1298.4 347.5M1298.4 347.5L1294.2 348.2M1293 336.9L1292.1 337.2M1294.2 348.2L1290.1 343.1M1292.1 337.2L1290.1 343.1M1294.2 348.2L1291.2 353.2M1291.2 353.2L1288.1 353.7M1288.1 353.7L1283.6 349.1M1283.6 349.1L1285.3 344.1M1285.3 344.1L1290.1 343.1M1308.1 320.3L1306.8 318M1308.1 320.3L1303.4 327.6M1306.8 318L1300.1 315.8M1303.4 327.6L1302.6 327.8M1302.6 327.8L1295.9 320.3M1300.1 315.8L1296.1 319.5M1296.1 319.5L1295.9 320.3M1316.9 316.5L1313.4 310.4M1311.3 310.7L1313.4 310.4M1314.2 322.5L1308.1 320.3M1311.3 310.7L1306.8 318M1311.6 331.2L1303.4 327.6M1311.3 310.7L1304.8 306.6M1304.8 306.6L1300 308.7M1300 308.7L1300.1 315.8M1300.2 331.8L1302.6 327.8M1290.8 325.1L1295.9 320.3M1296.8 332.5L1290.8 325.1M1273.1 274.5L1272.5 289.8M1287.8 285.9L1280.3 291.8M1287.8 285.9L1288 285.1M1280.3 291.8L1272.5 289.8M1303.1 294.1L1295.3 296.9M1300 308.7L1297.7 307.3M1308 296.5L1304.8 306.6M1297.7 307.3L1295.3 296.9M1287.8 285.9L1293.9 296.5M1295.3 296.9L1293.9 296.5M1307.9 361.1L1305 364.8M1307.9 361.1L1305.8 354.8M1301.1 364.8L1296.5 359.5M1302.5 354.3L1296.5 359.5M1301.1 364.8L1305 364.8M1302.5 354.3L1305.8 354.8M1308.5 371.5L1305 364.8M1312 361.4L1307.9 361.1M1308.7 352.2L1305.8 354.8M1290.3 364.8L1296.5 359.5M1294.4 371.8L1290.3 364.8M1297 371.5L1301.1 364.8M1291.2 353.2L1296.5 359.5M1298.4 347.5L1302.5 354.3M1289.8 364.8L1290.3 364.8M1285 358.5L1288.1 353.7M1285 358.5L1289.8 364.8M1323.7 297.8L1314 298.5M1323.7 297.8L1326.5 303.8M1326.5 303.8L1322.8 307.8M1322.8 307.8L1315.9 307.5M1314 298.5L1315.9 307.5M1326.4 291.4L1323.7 297.8M1310.8 296.1L1314 298.5M1332 304.9L1326.5 303.8M1324.5 315.8L1322.8 307.8M1313.4 310.4L1315.9 307.5M1241.9 466.7L1234.7 460.7M1246 456.8L1236.7 454.6M1236.7 454.6L1234.9 456.5M1234.9 456.5L1234.7 460.7M1232.1 471.3L1229.3 469.6M1229.3 469.6L1229.9 463.7M1234.7 460.7L1229.9 463.7M1268.2 430.9L1266.9 429.8M1266.9 429.8L1269.9 427.9M1257.9 419.9L1259.2 419.8M1265.6 425.3L1265.7 427.1M1257.9 419.9L1259 427.2M1259 427.2L1260 427.5M1266.9 429.8L1266.5 429.8M1266.1 430.5L1266.5 429.8M1246.4 456.2L1246.2 448.1M1236.9 448.1L1246.2 448.1M1236.7 454.6L1236.9 448.1M1258.7 440.4L1255 443.2M1258.7 440.4L1264.1 443.9M1264.1 443.9L1264.4 448.1M1264.4 448.1L1255.1 448.1M1255 443.2L1255.1 448.1M1258.5 436.4L1261.5 435.3M1258.5 436.4L1258.7 440.4M1266 441.2L1264.1 443.9M1269.5 448L1264.4 448.1M1263.8 456.4L1264.4 448.1M1255 456.1L1255.1 448.1M1246.2 448.1L1255.1 448.1M1249 439.4L1255 443.2M1246.3 442.8L1249 439.4M1246.3 442.8L1246.2 448.1M1258.5 436.4L1255.2 433.9M1249 439.4L1249.1 437.7M1249.1 437.7L1255.2 433.9M1255.9 419.5L1251 423.2M1251 423.2L1250.8 427.2M1257.4 419.5L1257.9 419.9M1259 427.2L1255.2 430M1255.9 419.5L1257.4 419.5M1250.8 427.2L1255.2 430M1255.2 430L1255.2 433.9M1249.1 437.7L1245.4 433.7M1250.8 427.2L1245.2 429.7M1245.4 433.7L1245.2 429.7M1227.4 277.9L1226.6 287.9M1226.5 288L1226.6 287.9M1214 275.2L1213.3 275.9M1226.5 288L1216.1 286.8M1216.1 286.8L1213.3 275.9M1207.4 275.4L1208.1 276.1M1208.1 276.1L1213.3 275.9M1257.2 356.4L1256.4 352.7M1256.4 352.7L1244.8 351.4M1249.9 362.7L1243.5 357.1M1257.2 356.4L1249.9 362.7M1244.8 351.4L1243.5 357.1M1290.9 400.1L1283.4 400M1283.4 395.9L1283.4 400M1286.2 391.4L1283.4 395.9M1283.2 406.2L1283.4 400M1283.2 406.2L1286.7 408.4M1155.1 315.5L1155.1 324.1M1146.9 324.2L1155.1 324.1M1144 314.7L1146.9 324.2M1098.1 424.2L1100.9 422.7M1107.5 430.7L1104.1 424.3M1107.5 430.7L1101.3 434.2M1104.1 424.3L1100.9 422.7M1069.5 391.7L1077.9 395.3M1073.6 402.5L1077 401M1077 401L1077.9 395.3M1076.1 411.8L1082 407.4M1082 407.4L1081.7 404.5M1077 401L1081.7 404.5M1085.4 415.6L1091.6 416.9M1085.4 415.6L1085.1 410M1085.1 410L1091.5 407.9M1091.5 407.9L1094.4 413.2M1091.6 416.9L1094.4 413.2M1083.8 417L1085.4 415.6M1093.3 423.5L1091.6 416.9M1082 407.4L1085.1 410M1097.2 413.2L1094.4 413.2M1097.2 413.2L1102 417.8M1102 417.8L1100.9 422.7M1102 417.8L1107.3 414.5M1097.2 413.2L1102.1 406.3M1102.1 406.3L1107.3 414.5M1091.5 407.9L1092.5 404.5M1081.7 404.5L1087.8 400.2M1087.8 400.2L1091.8 402.9M1091.8 402.9L1092.5 404.5M1102.1 406.3L1102.1 405.4M1092.5 404.5L1102.1 405.4M1067.9 368.6L1068.7 367.4M1068.7 367.4L1077.7 367.9M1079.9 376.2L1069.9 378.2M1079.9 376.2L1080 376.1M1080 376.1L1077.7 367.9M1078.2 357.6L1079.9 365.2M1090.5 356.4L1086.7 364.9M1088.5 353.9L1090.5 356.4M1088.5 353.9L1086.2 353.5M1086.7 364.9L1079.9 365.2M1074.4 355.5L1067.3 363M1067.3 363L1068.7 367.4M1079.9 365.2L1077.7 367.9M1168.9 517.1L1171.4 518.2M1168.9 517.1L1165.4 511.4M1171.4 518.2L1180.2 510M1165.4 511.4L1167.9 504.1M1167.9 504.1L1170.5 502.9M1170.5 502.9L1176.9 503.8M1176.9 503.8L1180.2 510M1183.5 511.3L1180.2 510M1172.4 519.8L1171.4 518.2M1162.8 500.5L1153.1 502M1162.8 500.5L1167.9 504.1M1158.1 512L1165.4 511.4M1182.7 497.3L1176.9 503.8M1160.7 538.1L1166.2 532.3M1160.7 538.1L1152.3 534.5M1166.2 532.3L1159.5 525M1152.3 534.5L1152.7 530.5M1152.7 530.5L1159.5 525M1159.5 525L1159.5 525M1161.1 542.8L1160.7 538.1M1170.1 532.3L1166.2 532.3M1149.9 536.6L1152.3 534.5M1168.9 517.1L1159.5 525M1146.3 524.9L1152.7 530.5M1140.1 534.4L1138.8 532.6M1155.4 519.5L1159.5 525M1150.7 495.6L1155.7 491.8M1151 481.6L1154.8 483.4M1154.8 483.4L1155.7 491.8M1196.9 509.3L1201.4 504.3M1196.2 496.2L1197.3 495.9M1197.3 495.9L1201.4 504.3M1187.1 491.8L1187.2 486.9M1197.3 495.9L1199.6 493.3M1199.6 493.3L1199.3 486.8M1187.2 486.9L1195.2 483.2M1195.2 483.2L1195.5 483.3M1195.5 483.3L1199.3 486.8M932.9 234.1L927.3 245.2M932.9 234.1L933.3 234M933.3 234L936.6 234.8M936.6 234.8L944.9 244.9M931.2 252.4L927.3 245.2M931.2 252.4L942.5 249.3M942.5 249.3L944.9 244.9M921.8 220.1L923.7 216.4M924.3 230.1L932.9 234.1M936.2 218.2L933.3 234M951.3 225.9L950.7 227.3M950.7 227.3L936.6 234.8M1032.9 385L1036.9 390.7M1031 394.6L1036.9 390.7M1031 394.6L1026.6 389.6M1026.6 389.6L1031.8 384.9M1031.8 384.9L1032.9 385M1043 386.6L1036.9 390.7M1038.4 380.3L1043 386.6M1038.4 380.3L1032.9 385M1031 395.1L1031 394.6M1041.5 397.9L1036.9 390.7M1026.3 389.6L1020.7 394.5M1026.3 389.6L1026.6 389.6M1022.1 382.8L1027.5 378.8M1027.5 378.8L1031.8 384.9M1022 384L1026.3 389.6M1022.1 382.8L1022 384M1006.1 372.5L1012.1 372M1011.6 382.4L1006.2 380.1M1011.6 382.4L1015.8 377.7M1015.8 377.7L1012.1 372M1011.6 326.8L1008.9 332.6M999.1 327L1001.2 333M1008.9 332.6L1001.2 333M988.7 332.2L994.3 337.3M994.3 337.3L1000.5 334.9M1001.2 333L1000.5 334.9M986.6 360.4L994.7 361.7M995.1 365.8L995.9 363M994.7 361.7L995.9 363M966.3 320.8L966.5 318.2M975 313L972.5 312M966.5 318.2L972.5 312M953.4 317.1L959.2 323.1M955.8 309.5L953.4 317.1M955.8 309.5L961.2 309.1M966.5 318.2L961.2 309.1M880 316.1L880.9 307.5M880 316.1L870.7 314.7M870.7 314.7L870.1 311.2M870.1 311.2L874.6 306.1M874.6 306.1L880.9 307.5M872.7 301L874.6 306.1M862.7 306.1L870.1 311.2M884.4 299.2L886.5 303.3M886.5 303.3L880.9 307.5M899 314.7L897.7 307.3M899 314.7L891.8 317.5M891.8 317.5L889.5 315.8M889.5 315.8L889.4 304.8M889.4 304.8L897.7 307.3M881.2 317.7L889.5 315.8M880.4 324.4L881.2 317.7M892.6 325.6L890.9 326.7M892.6 325.6L891.8 317.5M890.9 326.7L880.4 324.4M880 316.1L881.2 317.7M888.8 304.1L886.5 303.3M888.8 304.1L889.4 304.8M944.7 307.5L953.8 307.4M944.7 307.5L943.7 298.1M943.7 298.1L954 298.1M953.8 307.4L954 298.1M943.8 308.5L932.9 307.8M932.9 307.8L932.8 298.1M932.8 298.1L943.7 298.1M943.8 308.5L944.7 307.5M953.7 288.3L954 298.1M944.8 288.6L943.7 298.1M944.8 288.6L950.5 284.7M953.4 317.1L946.3 318.9M950.6 330.2L945.5 325.8M946.3 318.9L945.5 325.8M955.8 309.5L953.8 307.4M943.8 308.5L944.2 316.9M946.3 318.9L944.2 316.9M936.5 334L938.2 328.7M945.5 325.8L938.2 328.7M931 310.4L937 317.6M931 310.4L926.2 312.3M925.5 313.8L926.2 312.3M925.5 313.8L927 323.3M937 317.6L934.6 323.7M927 323.3L934.6 323.7M932.9 307.8L931 310.4M944.2 316.9L937 317.6M918.3 304.6L926.2 312.3M918.3 304.6L918.1 300.1M919.6 298.1L932.8 298.1M918.1 300.1L919.6 298.1M909.8 313.9L916 317.8M916 317.8L925.5 313.8M918.3 304.6L910.1 311.9M910.1 311.9L909.8 313.9M916 317.8L917 325.8M923.6 327.7L917 325.8M923.6 327.7L927 323.3M938.2 328.7L934.6 323.7M923.6 327.7L924.1 329.3M962.7 275.9L964.6 272.9M967.2 286L968 286.2M969.8 273.5L964.6 272.9M950 269.1L953.8 277.9M964.6 272.9L963.8 264.5M950 269.1L955.8 262.4M955.8 262.4L963.8 264.5M972.4 263.3L964.7 263.6M963.8 264.5L964.7 263.6M919.1 290L921.8 286.9M919.1 290L910.1 287.2M918.9 274.9L919.5 275.2M910.1 287.2L911.8 278.4M919.5 275.2L921.8 286.9M919.6 298.1L919.1 290M932.8 298.1L932.9 286.9M921.8 286.9L932.9 286.9M944.8 288.6L933.6 286.1M932.9 286.9L933.6 286.1M897.6 218.8L906.5 217.8M897.6 218.8L893 208.6M893 208.6L895.9 204.7M895.9 204.7L909.6 208.3M909.6 208.3L906.5 217.8M880.6 210.8L893 208.6M895.6 199.4L895.9 204.7M910.6 207.5L909.6 208.3M910.2 223.1L906.5 217.8M904.1 243.7L916.8 243.4M904.1 243.7L906.8 254.5M906.8 254.5L915.4 255.5M915.4 255.5L918.1 244.6M918.1 244.6L916.8 243.4M903.2 243.1L904.1 243.7M903.2 243.1L904.2 232.8M916.9 234L916.8 243.4M909.2 229.5L904.2 232.8M890.3 248.5L891.6 245.9M903.2 243.1L891.6 245.9M898.9 260L890.3 248.5M902.1 259.9L898.9 260M902.1 259.9L906.8 254.5M902.1 259.9L907.1 266.5M915.7 266.4L918.8 260.1M918.8 260.1L915.4 255.5M929.5 258.8L918.8 260.1M929.5 258.8L931.2 252.4M927.3 245.2L918.1 244.6M877.1 248.8L872.6 256.1M883.6 262.9L872.6 256.1M877.1 248.8L889.1 249.2M883.6 262.9L889.1 249.2M870.4 236.8L871.4 237.1M860.2 248.5L872.6 256.1M871.4 237.1L877.1 248.8M884 265.5L873.5 270.6M869.1 261.9L872.6 256.1M884.2 264.9L884 265.5M884.2 264.9L883.6 262.9M894.3 265.2L898.9 260M884.2 264.9L894.3 265.2M890.3 248.5L889.1 249.2M887.9 236.9L881.2 233.9M887.9 236.9L895.5 228.5M881.2 233.9L882.7 221.1M882.7 221.1L894.4 223.7M895.5 228.5L894.4 223.7M891.6 245.9L887.9 236.9M871.4 237.1L881.2 233.9M904.2 232.8L895.5 228.5M879.3 216.2L882.7 221.1M897.6 218.8L894.4 223.7M1018 393.5L1017.5 387.3M1018 393.5L1010.7 393.2M1017.5 387.3L1012 384.6M1012 384.6L1008.4 390.7M1010.7 393.2L1008.4 390.7M1022 384L1017.5 387.3M1019.2 394.5L1018 393.5M1009.6 401L1017 400.5M1009.6 401L1010.7 393.2M1015.8 377.7L1016.1 377.7M1022.1 382.8L1016.1 377.7M1011.6 382.4L1012 384.6M1002.5 390.6L1008.4 390.7M1000.9 396L1007.8 401.8M1009.6 401L1008.8 401.7M1007.8 401.8L1008.8 401.7M996.3 402.5L997.1 405.6M1007.8 401.8L1003.1 405.9M1003.1 405.9L997.1 405.6M990.6 409L997.1 405.6M990.6 409L985.9 408.1M997.1 405.6L997.1 405.6M1007.7 418.1L1015.5 416.3M1007.7 418.1L1005.8 412.4M1005.8 412.4L1005.9 412.1M1005.9 412.1L1012.4 409.1M1015.5 416.3L1012.4 409.1M1008.8 401.7L1012.4 409.1M1003.1 405.9L1005.9 412.1M1020 405.6L1012.4 409.1M1031.1 409.4L1027.4 415.3M1021.4 406.8L1021.1 413.6M1021.1 413.6L1027.4 415.3M1037.7 417.7L1037.5 418.7M1037.5 418.7L1028.3 419.2M1027.4 415.3L1028.3 419.2M1047.6 421.4L1041.9 422.9M1037.5 418.7L1038.2 420.8M1038.2 420.8L1041.9 422.9M1050.7 437.7L1050.1 446.3M1050.7 437.7L1046.5 436M1042.2 446.2L1041.9 439M1050.1 446.3L1042.2 446.2M1046.5 436L1041.9 439M1050 427.3L1050.2 424.2M1050 427.3L1045.9 431M1041.9 422.9L1042.8 429M1045.9 431L1042.8 429M1057.9 439.5L1064.7 439.9M1057.9 439.5L1055.4 436.5M1055.4 436.5L1057.2 432M1058.7 430.9L1057.2 432M1058.7 430.9L1065.7 431.7M1065.7 431.7L1064.7 439.9M1057.4 446.5L1066.4 446.6M1057.4 446.5L1057.9 439.5M1066.4 441.8L1064.7 439.9M1050.1 446.3L1057.4 446.5M1050.7 437.7L1055.4 436.5M1050 427.3L1057.2 432M1046.5 436L1045.9 431M1058.8 425.5L1058.7 430.9M1065.7 431.7L1065.7 431.7M1040 487.2L1031.6 487.1M1040.2 482.3L1040 487.2M1040.2 482.3L1034.2 477.8M1033 478.8L1031.6 487.1M1034.2 477.8L1033 478.8M1039 497.1L1032.1 490.6M1039 497.1L1038.3 497.8M1038.3 497.8L1029.6 499.9M1032.1 490.6L1028.7 495.5M1028.7 495.5L1029.6 499.9M1031.6 487.1L1032.1 490.6M1040.2 496.4L1040 487.2M1040.2 496.4L1039 497.1M1031.3 508.4L1029.6 499.9M1038.5 506.7L1031.3 508.4M1038.5 506.7L1038.3 497.8M1021.3 501.2L1029.6 499.9M1031.3 508.4L1021.6 509.9M1021.3 501.2L1021.6 509.9M1094.2 485.9L1092 476.6M1085.6 487.1L1086.7 488.1M1085.6 487.1L1084.9 478.9M1084.9 478.9L1092 476.6M1083.4 496.8L1078.6 497M1079.3 508.4L1076.7 505.8M1078.6 497L1076.7 505.8M1074.9 515.6L1069.5 515.9M1068.1 512.1L1069.5 515.9M1068.1 512.1L1074 505.9M1076.7 505.8L1074 505.9M1235.5 494.6L1231.8 488.9M1235.5 494.6L1241.1 494.6M1231.8 488.9L1239.8 483.4M1239.8 483.4L1244.6 490.3M1241.1 494.6L1244.6 490.3M1226.2 490.8L1230.1 488.6M1230.1 488.6L1231.8 488.9M1233 499.9L1226.9 498.4M1226.9 498.4L1226.2 490.8M1233 499.9L1235.5 494.6M1241.5 496.1L1241.1 494.6M1240 481.6L1239.8 483.4M1227.8 480.7L1230.1 488.6M1232.3 477.8L1227.8 480.7M1247.6 490.6L1244.6 490.3M1105 490.4L1099.1 495M1105 490.4L1109.2 491.5M1109.2 491.5L1110.8 502M1099.1 495L1105.4 501.8M1105.4 501.8L1110.8 502.1M1110.8 502.1L1110.8 502M1102.8 483.5L1094.2 485.9M1097.3 494.9L1099.1 495M1102.8 483.5L1105 490.4M1111.8 489.8L1119.3 491.5M1111.8 489.8L1109.2 491.5M1117.9 498.6L1110.8 502M1099 507.4L1105.4 501.8M1112 506.6L1110.8 502.1M1122.6 508.2L1116.7 510.4M1102.8 483.5L1103.6 481.9M1111.8 489.8L1112.3 482.2M1103.6 481.9L1112.3 482.2M1112.3 474L1112.3 482.2M1121.5 482.6L1112.3 482.2M1121.3 474.1L1112.3 474M1074.9 446.8L1082.1 446.8M1074.9 446.8L1074.6 454.1M1081.8 454.1L1082.1 446.8M1074.6 454.1L1081.8 454.1M1081.8 437.9L1082.1 446.8M1074.9 446.8L1074.9 446.8M1088.8 446.8L1082.1 446.8M1089.7 455.4L1084.3 456.9M1084.3 456.9L1081.8 454.1M871 379.8L874.5 374.1M882.5 375.8L879.4 373.4M879.4 373.4L874.5 374.1M861.9 367.8L863.1 359.5M861.9 367.8L864.3 370.6M864.3 370.6L870.6 369.4M863.1 359.5L864.5 358.1M870.6 369.4L872.4 364M872.4 364L865.7 358.1M864.5 358.1L865.7 358.1M860 368.1L861.9 367.8M860 359.7L863.1 359.5M863.4 376.7L864.3 370.6M874.5 374.1L870.6 369.4M860.1 349.1L864.5 358.1M870.8 346L861 346M870.8 346L870.8 354.1M860.1 349.1L861 346M870.8 354.1L865.7 358.1M888.2 364.5L890.1 356.5M888.2 364.5L880.6 365M890.1 356.5L879.1 355.1M878.2 362.7L879.1 355.1M880.6 365L878.2 362.7M889.4 366.2L888.2 364.5M899.1 357.5L891.7 355M900.6 363.4L899.1 357.5M891.7 355L890.1 356.5M879.4 373.4L880.6 365M870.8 354.1L879.1 355.1M872.4 364L878.2 362.7M920.1 340.2L919.1 340.3M917 325.8L912.1 328.5M912.1 328.5L914.7 337.9M914.7 337.9L919.1 340.3M861 346L860.6 345M865.1 550.3L867.3 549.9M865.1 550.3L864.3 560.9M867.3 549.9L877.4 556.8M864.3 560.9L872.6 564.6M877.4 556.8L874.2 563.9M874.2 563.9L872.6 564.6M863.9 549.7L865.1 550.3M875.8 540.7L867.3 549.9M860 563.3L864.3 560.9M879.9 555.6L881.2 552.1M879.9 555.6L877.4 556.8M888.7 560.8L879.9 555.6M888.7 560.8L883 570M883 570L874.2 563.9M868.6 574.6L873 578.2M883 570L883.1 570.2M868.6 574.6L872.6 564.6M896 616.6L906.4 615.4M900.5 606.2L907.8 607.1M907.8 607.1L906.4 615.4M908 625.1L910.8 619.7M906.4 615.4L910.8 619.7M860.1 582.1L862.5 575.3M860 572.8L862.5 575.3M868.6 574.6L862.5 575.3M864 587.9L860.1 582.1M935.9 543.9L929.6 539.5M935.9 543.9L935.1 550M935.1 550L931.4 552.4M931.4 552.4L924.7 547.3M924.7 547.3L928.9 539.7M929.6 539.5L928.9 539.7M966.8 552.9L956.4 551.7M955.3 561.1L956.4 551.7M964.4 562.6L955.3 561.1M935.1 550L944.1 552.9M941.5 541.2L935.9 543.9M941.5 541.2L946 543.6M946 543.6L946.1 550.3M946.1 550.3L944.1 552.9M938.2 520.8L936.4 521.5M938.2 520.8L948.4 527.9M936.4 521.5L936.3 532.5M948.4 527.9L947.5 529.8M947.5 529.8L939.9 534M939.9 534L936.3 532.5M946 543.6L951 540.3M951 540.3L947.5 529.8M941.5 541.2L939.9 534M932.7 533.7L929.6 539.5M932.7 533.7L936.3 532.5M934.9 497.8L930.9 496.1M934.9 497.8L941.3 495.4M931 487.1L941.7 487.1M941.3 495.4L941.7 487.1M923.1 463.4L925.4 462.6M913.1 457L922.7 451.4M925.4 462.6L926.4 458.5M922.7 451.4L926.4 458.5M921.7 445.4L923.2 449.3M914.3 442.7L921.7 445.4M922.7 451.4L923.2 449.3M923.2 449.3L933.8 449.3M926.4 458.5L933.7 455.3M933.7 455.3L933.8 449.3M952.2 487.1L941.7 487.1M941.7 487.1L941.5 483.5M952.2 478.1L948.2 475.2M952.2 478.1L952.2 487.1M941.5 483.5L948.2 475.2M950.2 467.1L949 468.1M949 468.1L948.1 474.8M952.2 478.1L956.7 477.2M960.6 467.9L961.1 468.5M948.2 475.2L948.1 474.8M951.6 437.9L947.8 435.1M951.6 437.9L956.8 429.9M947.8 435.1L947.6 428M950 425.7L956.8 429.9M950 425.7L947.6 428M960.8 423.6L956.8 429.9M950 422.9L950 425.7M963.6 434.5L956.8 429.9M964.8 449.3L968.1 444.8M963.3 438.7L960.1 440.9M964.8 449.3L961 449.3M961 449.3L961 449.3M960.1 440.9L961 449.3M951.6 437.9L952.4 440.3M960.1 440.9L952.4 440.3M921.8 487.1L913.5 487.1M922.9 476.6L921.8 487.1M922.9 476.6L919.3 474.7M919.3 474.7L913.4 479.2M913.4 479.2L913.5 487.1M918.9 473.3L919.3 474.7M907.6 469.3L907.2 477.1M913.4 479.2L907.2 477.1M922.8 496.6L913.4 496.7M913.4 496.7L913.5 487.1M986.7 564.9L995.8 572.6M996.5 557.4L1000.6 561.1M1000.6 561.1L995.8 572.6M888.9 560.7L894.9 551.9M888.9 560.7L898.2 567.5M898.2 567.5L903.8 558.7M903.8 558.7L898.4 552M894.9 551.9L898.4 552M888.7 560.8L888.9 560.7M892.1 549.3L894.9 551.9M891.8 574.4L898.2 567.7M898.2 567.7L898.2 567.5M898.2 567.7L904.7 572.9M898.2 582.1L905.4 576.4M904.7 572.9L905.4 576.4M909.7 587.9L909.8 579.8M905.4 576.4L909.8 579.8M928.9 539.7L919.7 534.7M924.3 547.4L924.7 547.3M924.3 547.4L915.4 541.2M915.4 541.2L919.7 534.7M925.8 527.3L919.5 531.4M932.7 533.7L925.8 527.3M919.5 531.4L919.7 534.7M912.4 550.7L918.7 554.3M918.7 554.3L918.9 555.2M905.5 558.7L912.4 550.7M905.5 558.7L913.6 564.2M918.9 555.2L913.6 564.2M905.5 558.7L903.8 558.7M904.7 572.9L914.3 566.1M913.6 564.2L914.3 566.1M909.8 579.8L919.2 576.3M919.2 576.3L915.7 567.1M914.3 566.1L915.7 567.1M967.5 476.8L973.9 478.2M964 469.2L971.8 464.8M977.2 474L971.8 464.8M977.2 474L976.7 475.9M973.9 478.2L976.7 475.9M976.7 475.9L984.9 481.2M984.9 481.2L990.8 476.6M977.2 474L982.7 470.4M982.7 470.4L990.2 474.3M990.8 476.6L990.2 474.3M982.7 470.4L984.2 463.9M987.8 461.7L984.2 463.9M987.8 461.7L988.4 461.8M988.4 461.8L993 468.2M990.2 474.3L993 468.2M993.7 457.8L988.4 461.8M1001.3 460.9L1001.4 462.6M1001.4 462.6L997 468M993.7 457.8L1001.3 460.9M993 468.2L997 468M967 389.5L974.9 392.5M967 389.5L966.7 383.3M966.7 383.3L966.7 383.3M966.7 383.3L977.2 385.6M977.8 386.6L974.9 392.5M977.2 385.6L977.8 386.6M964.1 394.3L967 389.5M971.5 399.2L974.9 392.5M959.1 384L966.7 383.3M967.4 379.6L966.7 383.3M978.5 377.3L977.2 385.6M981.6 396.7L974.9 392.5M985 387.9L977.8 386.6M930.8 400.5L935 390.4M930.8 400.5L922.7 395.9M923.1 391.3L922.7 395.9M923.1 391.3L933.3 388.6M935 390.4L934 388.8M933.3 388.6L934 388.8M939.5 392.2L935 390.4M931.3 401.6L930.8 400.5M918.4 399.4L922.7 395.9M921 388.2L923.1 391.3M926.6 378L933.3 388.6M939.9 380.4L934 388.8M1112.1 564.3L1111.9 555.2M1121.5 557.2L1118.2 554.6M1111.9 555.2L1118.2 554.6M1100.2 578.9L1101.5 579.3M1100.2 578.9L1094.7 582.2M1101.5 579.3L1103.4 583M1103.4 583L1101.1 589.3M1094.7 582.2L1095.1 588M1095.1 588L1099.2 590.4M1099.2 590.4L1101.1 589.3M1097.3 573.7L1100.2 578.9M1108.7 572.9L1101.5 579.3M1089.2 578.8L1094.7 582.2M1109.2 583.3L1103.4 583M1109.1 591.2L1101.1 589.3M1087.3 590.1L1095.1 588M1098.7 598L1099.2 590.4M1091.6 555.7L1091.7 554.9M1101.7 560.4L1104.3 553.9M1096.7 550.4L1103 551.9M1104.3 553.9L1103 551.9M1111.9 555.2L1111.3 554.7M1104.3 553.9L1111.3 554.7M1095.1 544.9L1099 540.6M1099 540.6L1106.1 543.1M1103 551.9L1106.1 543.1M1021.8 599.8L1021.4 605.5M1021.8 599.8L1030.4 595.9M1021.4 605.5L1029.5 609.6M1030.4 595.9L1034.3 599.7M1034.3 599.7L1034.4 605.7M1029.5 609.6L1034.4 605.7M1040.7 608.7L1034.4 605.7M1044.5 595.2L1034.3 599.7M1029 616.7L1029.5 609.6M1043.2 587.9L1029.9 587.9M1030.4 595.9L1029.9 587.9M1009 603.1L1011.8 605.2M1009 603.1L1009 600.3M1017.7 608L1021.4 605.5M1021.8 599.8L1017.1 595.2M1017.1 595.2L1009 600.3M1017.1 595.2L1017.2 587.9M1029.9 587.9L1017.2 587.9M1040.8 578.2L1030.5 579.3M1040.8 578.2L1041.3 569.3M1032.4 568.8L1041.3 569.3M1032.4 568.8L1030.2 578.9M1030.5 579.3L1030.2 578.9M1029.9 587.9L1030.5 579.3M1045.5 583.6L1040.8 578.2M1050.6 569.9L1041.3 569.3M1050.6 569.9L1051.4 570.7M1020.5 575.7L1030.2 578.9M1020.5 575.7L1017 578M1017 578L1017.2 587.9M1020.5 575.7L1022.1 566.5M1032.4 568.8L1028.7 564.5M1022.1 566.5L1028.7 564.5M1007.7 604.4L1009 603.1M1079.5 521.1L1076.4 525.3M1076.4 525.3L1071.2 523.3M1069.5 515.9L1069.1 516.8M1071.2 523.3L1069.1 516.8M1065.8 510.8L1068.1 512.1M1065.8 510.8L1058.5 512.7M1058.5 512.7L1061.9 520.4M1058.5 512.7L1058.5 512.7M1069.1 516.8L1061.9 520.4M1099 540.6L1097.9 537M1089 541.3L1090.3 543.7M1089 541.3L1091.6 534.7M1091.6 534.7L1097.9 537M1106.4 524.3L1110 529.7M1110 529.7L1106 533.6M1102.9 524.2L1100 528.4M1106 533.6L1101.3 532.5M1100 528.4L1101.3 532.5M1093.3 521.2L1092.4 526.5M1083.1 520L1086.4 526M1086.4 526L1092.4 526.5M1097.9 537L1101.3 532.5M1100 528.4L1092.9 527.4M1091.6 534.7L1091.3 534.2M1091.3 534.2L1092.9 527.4M1092.4 526.5L1092.9 527.4M1116.6 514.1L1122.3 519.7M1111 519.3L1116.8 525.2M1122.3 519.7L1116.8 525.2M1130.1 514.6L1125.9 519.7M1134.7 528.1L1127.8 525.4M1127.8 525.4L1125.9 519.7M1125.9 519.7L1122.3 519.7M1112.1 529.9L1116.8 525.2M1112.1 529.9L1110 529.7M1136.5 531.7L1130.1 536.1M1139.3 541.6L1131.9 543.7M1130.1 536.1L1131.9 543.7M1133.8 550.8L1131.9 543.8M1131.9 543.7L1131.9 543.8M1071.2 523.3L1067.5 526.2M1061.4 521.7L1061.9 520.4M1061.4 521.7L1062.1 524.8M1067.5 526.2L1062.1 524.8M1066.5 537.3L1065.6 535.4M1066.5 537.3L1061.8 545.6M1061.8 545.6L1056.3 541.1M1064.8 535.1L1065.6 535.4M1064.8 535.1L1056 537.5M1056 537.5L1056.3 541.1M1060.2 528L1062.1 524.8M1068.8 531.5L1065.6 535.4M1068.8 531.5L1067.5 526.2M1060.2 528L1064.8 535.1M1086.4 526L1082.7 531M1091.3 534.2L1083.5 533M1082.7 531L1083.5 533M1076.4 525.3L1076.9 528.1M1082.7 531L1076.9 528.1M1068.8 531.5L1074.4 531.1M1076.9 528.1L1074.4 531.1M1074.4 531.1L1075.5 536.9M1066.5 537.3L1072.1 540.5M1072.1 540.5L1075.5 536.9M1083.5 533L1081.7 537.3M1075.5 536.9L1081.7 537.3M1089 541.3L1082.7 540.2M1082.7 540.2L1081.7 537.3M1127.2 574.9L1133.3 575.2M1133.3 575.2L1134.3 576.2M1129.8 563.9L1135.6 568.5M1133.3 575.2L1135.6 568.5M1008.9 332.6L1011.6 338.1M1003.3 340.9L1000.5 334.9M1003.3 340.9L1007.7 341.6M1007.7 341.6L1011.6 338.1M1019.1 336.2L1017.1 326.9M1019.1 336.2L1015.6 338.7M1015.6 338.7L1011.6 338.1M1019.1 336.2L1025.5 337.2M1026.2 326.6L1027.2 334.6M1025.5 337.2L1027.2 334.6M1017.8 348.6L1015.6 338.7M1023.5 348L1026.3 339.5M1023.5 348L1017.8 348.6M1025.5 337.2L1026.3 339.5M1036.7 325.9L1037.4 332.9M1027.2 334.6L1037.4 332.9M1058.4 372.4L1056.3 369.7M1056.3 369.7L1047.2 369.8M1049.8 379.7L1048 378M1048 378L1047.2 369.8M1038.4 380.3L1038.8 377.7M1048 378L1038.8 377.7M1027.9 376.8L1027.5 378.8M1027.9 376.8L1038 376.2M1038 376.2L1038.8 377.7M1055.5 352.6L1063.8 352M1055.5 352.6L1054.9 353.4M1054.9 353.4L1055.9 361.4M1063.8 352L1064.4 361M1064.4 361L1056.2 361.8M1056.2 361.8L1055.9 361.4M1064.7 351.2L1063.8 352M1055.2 343.2L1054.7 343.7M1054.7 343.7L1055.5 352.6M1067.3 363L1064.4 361M1056.3 369.7L1056.2 361.8M1103.2 324.3L1106.2 332.1M1112.7 322.7L1114.4 322.7M1106.2 332.1L1115.2 330.3M1114.4 322.7L1115.2 330.3M1106.2 332.1L1103.8 335.8M1113 341.3L1117.3 338.1M1103.8 335.8L1105.8 340.2M1117.3 338.1L1116.6 331.6M1115.2 330.3L1116.6 331.6M1092.1 344.3L1084.7 339.7M1092.1 344.3L1093.8 343.9M1093.8 343.9L1097.5 335.1M1084.7 339.7L1089.1 331.6M1097.5 335.1L1093.3 330.4M1089.1 331.6L1093.3 330.4M1084.6 339.8L1084.7 339.7M1088.5 353.9L1092.1 344.3M1102.2 348.6L1096.2 357.3M1102 348.1L1093.8 343.9M1096.2 357.3L1090.5 356.4M1103.8 335.8L1097.5 335.1M1082.4 326.8L1089.1 331.6M1094.2 328L1093.3 330.4M1123.4 319.8L1123 321.1M1123 321.1L1114.7 322.2M1135.5 316.2L1136.5 315.4M1135.5 316.2L1134.1 315.8M1134.4 324.4L1128.1 327.6M1128.1 327.6L1123 321.1M1135.5 316.2L1134.4 324.4M1128.1 327.6L1127.7 328.5M1116.6 331.6L1127.7 328.5M1114.4 322.7L1114.7 322.2M1267.3 408.4L1271.4 405.9M1271.4 405.9L1277.7 411M1271.1 417.8L1269.5 417.5M1271.1 417.8L1277.7 411.7M1277.7 411L1277.7 411.7M1283.2 406.2L1277.7 411M1271.8 399.8L1283.4 400M1271.8 399.8L1271.4 405.9M1273.6 422L1271.1 417.8M1280.3 415.1L1277.7 411.7M1255.9 419.5L1250.4 414.6M1251 423.2L1246.7 420.3M1250.4 414.6L1247.1 415.9M1246.7 420.3L1247.1 415.9M1160.9 377.8L1156.3 384.2M1160.9 377.8L1156.9 371.5M1149.6 374.5L1156.9 371.5M1149.6 374.5L1153 383.8M1153 383.8L1156.3 384.2M1156.3 384.2L1159.5 389M1168.3 384.6L1163.5 377.8M1163.5 377.8L1160.9 377.8M1168.3 384.6L1168.1 385.8M1159.5 389L1168.1 385.8M1245.4 433.7L1239.5 436.8M1246.3 442.8L1238.8 440.3M1239.5 436.8L1238.8 440.3M1236.9 448.1L1236.7 442M1236.7 442L1238.8 440.3M1229.9 463.7L1222.5 458.3M1223.8 471.2L1229.3 469.6M1223.8 471.2L1219.6 463.1M1222.5 458.3L1221.3 459M1219.6 463.1L1221.3 459M1229.1 448.1L1221.8 448.2M1228.9 454.5L1229.1 448.1M1222.8 457.9L1221.8 448.2M1228.9 454.5L1222.8 457.9M1228.8 440.8L1229.1 448.1M1228.8 440.8L1222.3 442.4M1222.3 442.4L1221.8 448.2M1236.9 448.1L1229.1 448.1M1234.9 456.5L1228.9 454.5M1222.5 458.3L1222.8 457.9M1229.9 439.4L1230 439.4M1229.9 439.4L1228.8 440.8M1236.7 442L1230 439.4M1278.1 350.3L1277.4 355.8M1278.1 350.3L1273.5 345.5M1273.5 345.5L1267.7 347.3M1267.7 347.3L1269.4 357.6M1269.4 357.6L1277.4 355.8M1285 358.5L1280.6 359.2M1278.1 350.3L1283.6 349.1M1280.6 359.2L1277.4 355.8M1251.1 273.7L1252 273.9M1253.7 272.9L1252 273.9M1271.7 273.8L1263.7 276.8M1253.7 272.9L1263.7 276.8M1199.9 299.3L1193.5 295.1M1199.9 299.3L1210.1 297.2M1210.1 297.2L1210.9 291.6M1210.9 291.6L1201 284.1M1193.5 295.1L1193.9 291.6M1194 290.9L1194.3 288M1194.3 288L1197.9 284.4M1197.9 284.4L1201 284.1M1208.1 276.1L1201 284.1M1216.1 286.8L1210.9 291.6M1192 287L1194.3 288M1187 299.1L1193.5 295.1M1184.4 297.9L1187 299.1M1195.3 277.5L1197.9 284.4M1174.2 309.6L1177.2 311.3M1187 299.1L1186.5 309.4M1177.2 311.3L1186.5 309.4M1269.4 357.6L1269.1 358.1M1260.9 359.9L1269.1 358.1M1267.7 347.3L1262.5 345.6M1256.4 352.7L1259.7 346.5M1257.2 356.4L1260.9 359.9M1259.7 346.5L1262.5 345.6M1283.4 395.9L1275.9 390.8M1271.8 399.8L1270.6 398.1M1270.6 398.1L1275.9 390.8M1283.7 383.8L1275.5 384.6M1275.9 390.8L1275.5 384.6M1148.6 386L1142.2 382M1153 383.8L1148.6 386M1149.6 374.5L1146.4 373.5M1146.4 373.5L1142.2 382M1098.1 395.9L1103.2 401.4M1098.1 395.9L1091.8 402.9M1102.1 405.4L1103.4 403.6M1103.2 401.4L1103.4 403.6M1107.3 414.5L1113.8 410.3M1113.8 410.3L1113.4 405.4M1103.4 403.6L1113.4 405.4M1080 376.1L1088.4 374.3M1086.7 364.9L1089.7 368.6M1089.7 368.6L1088.4 374.3M1170.5 502.9L1171.4 492M1162.8 500.5L1162.4 491.9M1171.4 492L1162.4 491.9M1182.7 497.3L1173.7 489.8M1173.7 489.8L1171.4 492M1155.7 491.8L1162.4 491.9M1224.3 505.9L1221.4 504.7M1217.7 513.1L1217.1 510.3M1217.1 510.3L1221.4 504.7M1204.3 515.5L1210.2 508.1M1217.1 510.3L1210.2 508.1M1201.4 504.3L1207.6 504.1M1210.2 508.1L1207.6 504.1M1226.9 498.4L1221.4 503.1M1221.4 503.1L1221.4 504.7M1190 472.6L1193 470M1193 470L1201.9 473.8M1189.9 473.6L1195.2 483.2M1190 472.6L1189.9 473.6M1195.5 483.3L1202.1 474.3M1201.9 473.8L1202.1 474.3M1199.3 486.8L1208.5 483.7M1202.1 474.3L1207.7 477.5M1208.5 483.7L1207.7 477.5M1219.6 463.1L1212.1 466.7M1223.8 471.2L1220.6 476.1M1212.1 466.7L1213.7 473M1213.7 473L1220.6 476.1M1227.8 480.7L1221.1 478.1M1220.6 476.1L1221.1 478.1M1027.6 353.4L1037 356.6M1037.1 360.6L1037 356.6M1037.1 360.6L1026.6 362.5M1027.6 353.4L1024.7 359.9M1026.6 362.5L1024.7 359.9M993.7 340.9L998.7 345.8M993.7 340.9L987.5 344.1M988.1 350.2L987.5 344.1M988.1 350.2L995.2 351.5M995.2 351.5L998.6 349.7M998.7 345.8L998.6 349.7M1003.3 340.9L998.7 345.8M994.3 337.3L993.7 340.9M984.3 341.1L987.5 344.1M986.8 351.4L988.1 350.2M994.7 361.7L995.2 351.5M1005.2 371.8L1004.3 364.1M995.9 363L1002.3 362.3M1004.3 364.1L1002.3 362.3M969.4 298.1L963 298.1M963.5 306.6L963 298.1M963.5 306.6L971.5 306.7M963.5 289.1L963 298.1M954 298.1L963 298.1M961.2 309.1L963.5 306.6M972.5 312L971.5 306.7M892.6 325.6L896.8 326.6M904.8 317.9L899 314.7M904.8 317.9L904.4 322.1M896.8 326.6L904.4 322.1M904.8 317.9L909.8 313.9M912.1 328.5L909.3 328M904.4 322.1L909.3 328M877.7 333.7L871.9 336.6M877.7 333.7L877.8 333.8M877.8 333.8L882.4 345.2M871.9 336.6L871.6 345.3M871.6 345.3L880.1 347.2M880.1 347.2L882.4 345.2M888.8 334.7L877.8 333.8M888.8 334.7L890.9 326.7M877.8 327.1L880.4 324.4M877.8 327.1L877.7 333.7M891 338.1L888.8 334.7M884.8 345.2L891 338.1M884.8 345.2L882.4 345.2M870.8 346L871.6 345.3M864.4 334.5L860.6 345M864.4 334.5L871.9 336.6M879.1 355.1L880.1 347.2M891.5 351.3L891.7 355M891.5 351.3L884.8 345.2M968.1 249.7L966.9 250.6M968.1 249.7L968.5 244.4M966.9 250.6L956.7 250.3M964.1 238.1L952.9 240.9M964.1 238.1L967.9 240.7M956.7 250.3L951.6 243.2M952.9 240.9L951.6 243.2M976.7 253L968.1 249.7M964.7 263.6L966.9 250.6M955.8 262.4L953.3 258.1M953.3 258.1L956.7 250.3M962.4 228.2L964.1 238.1M950.7 227.3L952.9 240.9M944.9 244.9L951.6 243.2M945.9 256.9L942.5 249.3M945.9 256.9L953.3 258.1M940.4 276.6L940.5 267.4M940.4 276.6L933.9 282M933.9 282L927.1 273.9M927.1 273.9L933.3 264.5M933.3 264.5L939.5 266.2M939.5 266.2L940.5 267.4M950 269.1L940.5 267.4M950.7 282.1L940.4 276.6M933.6 286.1L933.9 282M919.5 275.2L927.1 273.9M929.5 258.8L933.3 264.5M945.9 256.9L939.5 266.2M975.2 435.6L981.9 438.2M973.5 444.9L981.3 445.1M981.9 438.2L981.3 445.1M1000.9 421.1L998.7 414.2M1005.8 412.4L998.7 414.2M1006.3 421L1000.9 421.1M1007.7 418.1L1006.3 421M990.6 409L993.1 415.6M997.1 405.6L998.7 414.2M993.1 415.6L998.7 414.2M984.5 416.3L992.3 416.6M992.3 416.6L993.1 415.6M1006.3 421L1008.1 424.1M1000.9 421.1L997.8 424.2M1008.1 424.1L1005.1 430.7M1005.1 430.7L1003.2 431.7M1003.2 431.7L997.8 424.2M992.3 416.6L993.4 424.7M993.4 424.7L997.8 424.2M1024.5 423.9L1017.6 416.7M1024.5 423.9L1018.4 429M1014.1 425.4L1016.5 428.6M1014.1 425.4L1016.3 416.8M1016.3 416.8L1017.6 416.7M1018.4 429L1016.5 428.6M1026 423.7L1028.3 419.2M1021.1 413.6L1017.6 416.7M1026 423.7L1024.5 423.9M1008.1 424.1L1014.1 425.4M1005.1 430.7L1012 432.7M1012 432.7L1016.5 428.6M1015.5 416.3L1016.3 416.8M1034.6 426.3L1036.8 430.9M1034.6 426.3L1028.4 425.9M1028.4 425.9L1028.5 433.7M1036.4 432L1036.8 430.9M1036.4 432L1029.3 434.7M1028.5 433.7L1029.3 434.7M1042.8 429L1036.8 430.9M1038.2 420.8L1034.6 426.3M1026 423.7L1028.4 425.9M1020.6 433.1L1018.4 429M1020.6 433.1L1028.5 433.7M1041.9 439L1039.4 437.9M1039.4 437.9L1036.4 432M1040 487.2L1049.1 487.3M1041.2 496.6L1048.9 491.1M1040.2 496.4L1041.2 496.6M1048.9 491.1L1049.1 487.3M1045.9 500.1L1053.9 498.6M1045.9 500.1L1045.8 506.3M1053.9 498.6L1051.9 506.9M1051.9 506.9L1048.3 508.6M1045.8 506.3L1048.3 508.6M1041.2 496.6L1045.9 500.1M1054.5 498L1048.9 491.1M1054.5 498L1053.9 498.6M1038.8 506.9L1038.5 506.7M1038.8 506.9L1045.8 506.3M1058.5 512.7L1053.2 515.8M1048 510.9L1053.2 515.8M1048 510.9L1048.3 508.6M1058.5 512.7L1057.1 509.2M1057.1 509.2L1051.9 506.9M1053.2 515.8L1051.9 520.7M1061.4 521.7L1052.1 520.9M1052.1 520.9L1051.9 520.7M996.3 542.2L986.6 536.3M996.3 542.2L1001.3 536.9M1001.3 536.9L998.3 527.1M986.4 534L991.1 527M986.4 534L986.6 536.3M991.1 527L998.3 527.1M980.3 543.1L986.6 536.3M996.4 546.4L996.1 547M996.4 546.4L996.3 542.2M1011.8 520.6L1010.9 525.5M1011.8 520.6L1007 514.1M1010.9 525.5L999 526.4M1007 514.1L1000.1 516.8M1000.1 516.8L999 526.4M1021.2 516.8L1011.8 520.6M1020.9 511L1021.2 516.8M1008.5 508.3L1007 514.1M1008.9 508.1L1008.5 508.3M1008.9 508.1L1020.9 511M993.1 512.5L1000.1 516.8M993.1 512.5L993.1 512M993.1 512L1001.6 502.5M1008.5 508.3L1001.6 502.5M986.5 519.3L991.1 527M993.1 512.5L986.5 519.3M998.3 527.1L999 526.4M1051.3 562.6L1050.6 569.9M1051.3 562.6L1056.9 558.9M1062.7 564L1062.7 563.8M1062.7 563.8L1058.7 559.3M1056.9 558.9L1058.7 559.3M1052.3 551.4L1056.9 558.9M1051.3 562.6L1044.4 558.3M1052.3 551.4L1052.2 551.4M1052.2 551.4L1044.4 558.3M1021.6 509.9L1020.9 511M1021.3 501.2L1018.1 498.2M1008.9 508.1L1016.3 497.9M1016.3 497.9L1016.7 497.8M1018.1 498.2L1016.7 497.8M1028.7 495.5L1024.2 492.1M1018.1 498.2L1024.2 492.1M1000.4 473.2L997 468M1000.4 473.2L998.8 477.1M990.8 476.6L995 478.8M995 478.8L998.8 477.1M1000.4 473.2L1005.3 471.6M1006.3 481.8L998.8 477.1M1006.3 481.8L1010 477.1M1010 477.1L1005.3 471.6M1001.4 462.6L1006.5 467.7M1005.3 471.6L1006.5 467.7M1091.8 456.3L1093.8 463.2M1093.8 463.2L1093.8 463.2M1084.3 456.9L1082.6 461.4M1093.8 463.2L1087.6 467.5M1082.6 461.4L1087.6 467.5M1072.3 456.3L1074.6 454.1M1072.3 456.3L1075.7 463.7M1082.6 461.4L1075.7 463.7M1041.5 454.2L1034.6 455M1041.5 454.2L1044.4 456.9M1044.4 456.9L1038.6 466M1034.6 455L1034.2 465M1034.2 465L1038.6 466M1025 460.8L1025.5 455.5M1031.7 465.9L1025 460.8M1031.7 465.9L1034.2 465M1032.6 453.6L1025.5 455.5M1032.6 453.6L1034.6 455M1034.4 477.4L1039.6 473.5M1034.4 477.4L1030.3 469M1030.3 469L1031.7 465.9M1039.6 473.5L1039.1 466.5M1039.1 466.5L1038.6 466M965.2 542.1L957.7 541M956.4 551.7L957.7 541M968.7 551.4L965.2 542.1M979.4 543.1L971.1 536.8M965.2 542.1L971.1 536.8M946.1 550.3L956.4 551.7M951 540.3L957.7 541M949.2 527.5L959.2 529.5M957.7 541L959.2 529.5M948.4 527.9L949.2 527.5M971.1 536.8L971.1 534.2M986.4 534L978.5 529.7M978.5 529.7L971.1 534.2M959.2 529.5L967.4 529.9M967.4 529.9L971.1 534.2M1000.9 500.3L994.8 497.1M1000.9 500.3L1006.4 494.2M994.8 497.1L995.6 487.1M995.6 487.1L1006.3 487.1M1006.4 494.2L1006.3 487.1M1001.6 502.5L1000.9 500.3M1016.3 497.9L1006.4 494.2M995 478.8L995.6 487.1M1006.3 481.8L1006.3 487.1M1103.6 481.9L1103 479.2M1092 476.6L1092.4 475.9M1092.4 475.9L1095.7 474.8M1103 479.2L1095.7 474.8M1092.4 475.9L1087.6 467.5M1093.8 463.2L1097.8 471.1M1097.8 471.1L1095.7 474.8M903.1 511.6L894.5 507M888.1 516.7L894.5 507M903.1 511.6L899.8 521.1M888.1 516.7L889 518.3M889 518.3L898.4 521.8M899.8 521.1L898.4 521.8M905.4 498.1L904.5 497.6M900.3 498.3L904.5 497.6M900.3 498.3L894.5 507M906.3 510.4L903.1 511.6M906.3 510.4L905.4 498.1M881.1 514.3L888.1 516.7M888.5 502.2L894.5 507M885.6 528.6L889 518.3M897.2 527.9L886.5 529.6M897.2 527.9L898.4 521.8M890.4 492.4L891.4 491.8M891.4 491.8L900.3 498.3M925.8 527.3L927.6 521.6M936.4 521.5L930.2 520.4M930.2 520.4L927.6 521.6M925 498.2L923.8 506.8M935.6 507.5L934.9 497.8M935.6 507.5L930.4 509.4M930.4 509.4L923.8 506.8M909.3 328L902.5 336.2M914.7 337.9L907.4 339.9M907.4 339.9L902.5 336.2M891 338.1L896.6 339.4M891.5 351.3L897.2 344.8M897.2 344.8L896.6 339.4M896.8 326.6L900.4 336.3M896.6 339.4L900.4 336.3M902.5 336.2L900.4 336.3M860 332.7L864.1 334M864.1 334L867.7 322.8M860 322.8L865.1 320.3M867.7 322.8L866.6 320.6M866.6 320.6L865.1 320.3M864.4 334.5L864.1 334M877.8 327.1L867.7 322.8M860 314.8L865.1 320.3M870.7 314.7L866.6 320.6M906.2 289.2L904.8 288.9M906.2 289.2L909.3 298.6M904.8 288.9L897.7 295.2M897.7 295.2L903.7 303.3M909.3 298.6L903.7 303.3M918.1 300.1L909.3 298.6M910.1 287.2L906.2 289.2M896.9 295.2L897.7 295.2M888.8 304.1L896.9 295.2M897.7 307.3L903.7 303.3M910.1 311.9L903.7 303.3M887.7 289L890.9 289.2M887.7 289L886.2 277.4M890.9 289.2L898.8 281.6M886.2 277.4L886.3 277.2M886.3 277.2L897.9 276.4M898.8 281.6L898.5 276.7M897.9 276.4L898.5 276.7M887.7 289L887.7 289M896.9 295.2L890.9 289.2M876.1 279.7L886.2 277.4M904.8 288.9L898.8 281.6M884 265.5L886.3 277.2M894.3 265.2L897.9 276.4M903.1 274.8L898.5 276.7M931.7 637.1L930.9 633M934.4 630.2L930.9 633M916.1 608.2L910.9 604.7M916.1 608.2L924 603.8M920.1 596.4L911 599.2M920.1 596.4L924 603.8M911 599.2L910.9 604.7M909.7 587.9L918.5 587.9M918.5 587.9L922 592.9M922 592.9L920.1 596.4M909.8 597.7L911 599.2M922 592.9L928.2 591.8M932.6 599.4L928.2 591.8M932.6 599.4L924 603.8M907.8 607.1L910.9 604.7M944.1 555.5L944.1 552.9M955.3 561.1L954.6 561.5M944.1 555.5L950 561.4M950 561.4L954.6 561.5M954.6 561.5L955.1 572.7M965 572.4L955.1 572.7M965 572.4L967 566.1M941.3 495.4L943.6 497M952.2 487.1L952.2 494.6M943.6 497L952.2 494.6M993.1 512L987.6 505.4M994.8 497.1L990.6 498.2M990.6 498.2L987.6 505.4M933.8 449.3L933.7 443.4M921.7 445.4L927 439.3M933.7 443.4L927 439.3M937.3 473.4L935.9 477.7M937.3 473.4L934.9 467.5M931.9 467.4L934.9 467.5M931.9 467.4L924.8 476.5M935.9 477.7L930.9 480.2M930.9 480.2L924.8 476.5M941.5 483.5L935.9 477.7M948.1 474.8L937.3 473.4M938.8 463.4L949 468.1M938.8 463.4L934.9 467.5M925.4 462.6L931.9 467.4M939.1 460.6L938.8 463.4M939.1 460.6L933.7 455.3M922.9 476.6L924.8 476.5M931 487.1L930.9 480.2M904 487.1L903.5 479.3M904 487.1L903.7 487.4M903.7 487.4L893.3 488.2M903.5 479.3L896.6 476.3M893.3 488.2L891.9 480.5M891.9 480.5L893.9 477.3M893.9 477.3L896.6 476.3M913.5 487.1L904 487.1M907.2 477.1L903.5 479.3M904.5 497.6L903.7 487.4M912.9 497.2L913.4 496.7M912.9 497.2L905.4 498.1M891.4 491.8L893.3 488.2M899.2 469.4L896.6 476.3M883.8 480.2L891.9 480.5M887.6 469.2L893.9 477.3M919.2 576.3L921.8 577.7M918.5 587.9L922.1 578.3M921.8 577.7L922.1 578.3M928.2 591.8L930 588.7M930 588.7L926.4 580.4M922.1 578.3L926.4 580.4M968.1 596.3L968.1 596.3M968.1 596.3L968.9 591M960.6 584L968.9 591M955.6 584.6L956.1 596.9M960.6 584L955.6 584.6M968.1 596.3L956.1 596.9M945.7 603.3L947.2 597.2M956.3 603.2L956.1 596.9M947.2 597.2L956.1 596.9M955.1 572.7L955.6 584.6M965 572.4L966.6 575.8M966.6 575.8L960.6 584M968.6 603.4L968.1 596.3M911.1 546.1L913 542.2M911.1 546.1L901.8 547.1M913 542.2L905.4 534.9M901.8 547.1L899.2 536.7M905.4 534.9L900 535.7M900 535.7L899.2 536.7M918.7 554.3L924.3 547.4M912.4 550.7L911.1 546.1M915.4 541.2L913 542.2M898.4 552L901.8 547.1M889.1 539.6L899.2 536.7M897.2 527.9L900 535.7M906.7 523.8L908.2 530.8M906.7 523.8L914.5 519M908.2 530.8L917.2 529.7M914.5 519L917.2 529.7M899.8 521.1L906.7 523.8M905.4 534.9L908.2 530.8M919.5 531.4L917.2 529.7M918.9 555.2L925.1 559.1M915.7 567.1L924.7 564.4M924.7 564.4L925.1 559.1M921.8 577.7L929.2 568.4M924.7 564.4L929.2 568.4M931.4 552.4L931 556M931 556L925.1 559.1M1029.3 434.7L1029.4 437.4M1039.4 437.9L1032.7 440.8M1029.4 437.4L1032.7 440.8M1042.2 446.2L1032.6 446M1032.7 440.8L1032.6 446M1042.2 446.2L1041.5 454.2M1032.6 453.6L1032.6 446M1012 437.1L1012 432.7M1012 437.1L1007.9 439.8M1003.2 431.7L1001.5 435.2M1007.9 439.8L1001.5 435.2M972.2 463.4L976.5 461.3M972.2 463.4L968.1 457.9M976.5 461.3L978.3 454.1M968.1 457.9L969.4 453.5M969.4 453.5L973.2 451.3M973.2 451.3L978.3 454.1M984.2 463.9L976.5 461.3M971.8 464.8L972.2 463.4M960.1 458.4L968.1 457.9M987.8 461.7L983.7 453.5M981.6 452.7L983.7 453.5M981.6 452.7L978.3 454.1M964.8 449.3L969.4 453.5M961 449.3L960.1 458.4M973.5 444.9L973.2 451.3M981.6 452.7L981.3 445.1M952.2 494.6L955.8 498M955.8 498L962.4 497.6M962.4 497.6L962.5 487.1M952.2 487.1L962.5 487.1M962.5 481L962.5 487.1M1111.3 554.7L1112.8 546.3M1106.1 543.1L1106.3 542.9M1112.8 546.3L1106.3 542.9M1106 533.6L1108 539.4M1108 539.4L1106.3 542.9M1112.1 529.9L1116.2 536.6M1108 539.4L1116.2 536.6M1003.4 576.9L995.8 572.9M992.6 576L995.8 572.9M992.6 576L991.9 587.9M991.9 587.9L1004.1 587.9M1003.4 576.9L1004.1 587.9M1017.2 587.9L1004.1 587.9M1009 600.3L1003.7 594.8M1003.7 594.8L1004.1 587.9M996.9 603.3L995.3 599.8M1003.7 594.8L995.3 599.8M1009.1 574.6L1003.4 576.9M1009.1 574.6L1017 578M979.5 597.7L981.4 604.4M979.5 597.7L982 594.5M982 594.5L992.6 598.7M987.8 603.6L992.6 598.9M992.6 598.7L992.6 598.9M968.1 596.3L979.5 597.7M995.3 599.8L992.6 598.9M991.9 587.9L992.6 598.7M1127.8 525.4L1123.1 531.1M1130.1 536.1L1128.6 535.9M1128.6 535.9L1123.1 531.1M1116.8 525.2L1122.8 531.2M1122.8 531.2L1123.1 531.1M1116.2 536.6L1117.1 537M1122.8 531.2L1117.1 537M1075.6 567L1080.2 559.2M1075.6 567L1069.4 560.2M1080.2 559.2L1071 556.2M1069.4 560.2L1071 556.2M1082.1 558.9L1081.5 558.6M1075.8 569.4L1075.6 567M1081.5 558.6L1080.2 559.2M1062.7 563.8L1069.4 560.2M1072.1 540.5L1073.1 544.4M1082.7 540.2L1080.8 543.9M1073.1 544.4L1080.8 543.9M1086.4 549.3L1083.3 549.3M1080.8 543.9L1083.3 549.3M1081.5 558.6L1081.1 551.8M1083.3 549.3L1081.1 551.8M1139.2 568.1L1138.5 567.6M1138.5 567.6L1140.7 560.3M1140.7 560.3L1145.2 561.8M1135.6 568.5L1138.5 567.6M1139.5 558.4L1140.7 560.3M1151.3 556.6L1150.8 557.4M1047 322.6L1047 333.6M1037.7 333.2L1047 333.6M1037.4 332.9L1037.7 333.2M1055.4 333.3L1047 333.6M1036.9 368.5L1037.6 361.4M1036.9 368.5L1038.6 370.9M1038.6 370.9L1047 369.6M1037.6 361.4L1047 362.4M1047 369.6L1047 362.4M1038 376.2L1038.6 370.9M1047.2 369.8L1047 369.6M1055.9 361.4L1047 362.4M1135.2 338.3L1129 334.7M1135.2 338.3L1134.3 345.3M1129 334.7L1122.8 341.3M1134.3 345.3L1131 347.6M1131 347.6L1124.9 346.4M1122.8 341.3L1124.9 346.4M1117.3 338.1L1122.8 341.3M1127.7 328.5L1129 334.7M1113.4 349L1119.5 352.2M1119.5 352.2L1124.9 346.4M1144.2 327.4L1138.8 327.7M1144.2 327.4L1147.8 333.6M1138.8 327.7L1138 336.4M1138 336.4L1145 338.3M1147.8 333.6L1145 338.3M1146.9 324.2L1144.2 327.4M1134.4 324.4L1138.8 327.7M1155.1 332.9L1147.8 333.6M1155.1 324.1L1155.1 332.9M1135.2 338.3L1138 336.4M1142.6 347.7L1134.3 345.3M1146.3 342L1145 338.3M1146.3 342L1142.6 347.7M1146.3 342L1155.1 343.5M1155.1 343.5L1155.1 332.9M1088.6 294.9L1096.4 292.8M1098.2 297.2L1096.4 292.8M1092.4 283.3L1098.8 289.1M1103.8 281.9L1102.7 287.8M1102.7 287.8L1098.8 289.1M1096.4 292.8L1098.8 289.1M1102.7 287.8L1103.4 288.3M1099.3 375.6L1091.1 377.2M1090.5 383L1091.1 377.2M1090.5 383L1096.3 385.9M1099.3 375.6L1099.7 383M1099.7 383L1096.3 385.9M1297.7 307.3L1289.1 309.3M1293.9 296.5L1286.8 301.2M1289.1 309.3L1286.8 301.2M1280.3 291.8L1281.7 299.9M1286.8 301.2L1281.7 299.9M1272.5 289.8L1270.7 291.1M1270.7 291.1L1270.6 300.3M1270.6 300.3L1278.3 302.7M1281.7 299.9L1278.3 302.7M1239.5 436.8L1234.9 431.5M1230 439.4L1233.9 431.8M1233.9 431.8L1234.9 431.5M1257.5 410.9L1253 408.9M1250.4 414.6L1253 408.9M1257.4 419.5L1258.2 414.7M1247.1 415.9L1242.3 412.8M1242.3 412.8L1241.7 408.9M1253 408.9L1246.5 405.9M1246.5 405.9L1241.7 408.9M1225.5 397.5L1231 401.4M1232.6 400.8L1231 401.4M1232.6 400.8L1233.2 393.5M1225.5 397.5L1227.5 391.1M1227.5 391.1L1233.2 393.5M1151.4 437.4L1155.4 429.9M1151.4 437.4L1157.3 440.4M1155.4 429.9L1162.7 433M1157.3 440.4L1162.1 438.4M1162.7 433L1162.1 438.4M1165.3 448.2L1156.7 447.9M1156.7 447.9L1157.3 440.4M1165.6 440.9L1165.3 448.2M1165.6 440.9L1162.1 438.4M1173.2 439.3L1165.6 440.9M1173.3 439.3L1173.4 438.3M1169.8 432.1L1173.4 438.3M1162.9 432.8L1169.8 432.1M1162.9 432.8L1162.7 433M1173.2 439.3L1173.3 439.3M1148.6 437.9L1149.6 447.7M1156.7 447.9L1149.6 447.7M1151.4 437.4L1148.6 437.9M1162.9 432.8L1164.1 423.5M1171.6 428L1170.3 425.1M1169.8 432.1L1171.6 428M1164.1 423.5L1170.3 425.1M1167.9 394.8L1170.4 389.2M1168.1 385.8L1170.4 389.2M1159.5 389L1159.5 390.7M1167.9 394.8L1164 395.1M1164 395.1L1159.5 390.7M1148.6 386L1146.8 393.5M1146.8 393.5L1148.6 395.3M1148.6 395.3L1154.1 396M1159.5 390.7L1154.1 396M1231 401.4L1229 404.7M1222.5 398.6L1221.3 402.7M1221.3 402.7L1223 405.6M1225.5 397.5L1222.5 398.6M1223 405.6L1229 404.7M1236.7 402.2L1238.9 407.4M1238.9 407.4L1231.2 411.4M1232.6 400.8L1236.7 402.2M1229 404.7L1231.2 411.4M1183.4 469.2L1182.2 464.4M1190 472.6L1183.4 469.2M1193 470L1193.6 465.9M1182.2 464.4L1188.6 460.9M1193.6 465.9L1188.6 460.9M1278.8 364.4L1272 365.7M1278.8 364.4L1282.4 369.4M1282.4 369.4L1282.2 372.1M1282.2 372.1L1279.6 373.2M1279.4 373.2L1274.8 374.9M1274.8 374.9L1272.1 373.1M1272.1 373.1L1270.6 368.2M1270.6 368.2L1272 365.7M1269.1 358.1L1272 365.7M1280.6 359.2L1278.8 364.4M1289.8 364.8L1282.4 369.4M1284.5 374.7L1282.2 372.1M1275.5 384.6L1274.8 374.9M1260.8 368.2L1270.6 368.2M1260.9 359.9L1260.8 368.2M1270.7 291.1L1259 290M1263.7 276.8L1258.9 289.9M1259 290L1258.9 289.9M1177.2 311.3L1176.6 319.5M1165.2 314.8L1167.6 324M1176.6 319.5L1167.6 324M1155.1 324.1L1167.5 324.3M1164.3 333.7L1155.1 332.9M1164.3 333.7L1167.6 325.1M1167.6 325.1L1167.5 324.3M1167.5 324.3L1167.6 324M1259.7 346.5L1250.2 338.3M1244.8 351.4L1244 350M1244 350L1250.2 338.3M1272.1 373.1L1264.1 378.2M1275.5 384.6L1269.2 384.9M1269.2 384.9L1264.1 378.2M1260.8 368.2L1260.9 376.6M1262.7 377.8L1264.1 378.2M1171.4 398.2L1176.6 397.5M1171.4 398.2L1167.9 394.8M1170.4 389.2L1177.6 390.1M1176.6 397.5L1177.6 390.1M1179.1 382.9L1174.1 380.5M1168.3 384.6L1174.1 380.5M1179.1 382.9L1179.2 388.6M1179.2 388.6L1177.6 390.1M1187.2 372.1L1189.4 376.6M1187.2 372.1L1181 375.8M1189.4 376.6L1186.3 381M1186.3 381L1181 381.2M1181 381.2L1181 375.8M1185 390.5L1179.2 388.6M1189.7 385.9L1185 390.5M1189.7 385.9L1186.3 381M1179.1 382.9L1181 381.2M1177.5 372.4L1177.3 368.2M1177.3 368.2L1168.6 368.2M1177.5 372.4L1173 377.3M1168.1 374.3L1168.6 368.2M1168.1 374.3L1173 377.3M1181 375.8L1177.5 372.4M1187.4 368.2L1177.3 368.2M1187.4 368.2L1187.2 372.1M1167.9 359.8L1168.6 368.2M1173.3 356.7L1167.9 359.8M1177.8 359.1L1177.3 368.2M1173.3 356.7L1177.8 359.1M1174.1 380.5L1173 377.3M1156.9 371.5L1157.7 368.2M1157.7 368.2L1168.6 368.2M1163.5 377.8L1168.1 374.3M1187.4 368.2L1187 360.3M1177.8 359.1L1182.7 357.8M1187 360.3L1182.7 357.8M1167.9 359.8L1161 357.2M1156.8 365.8L1157.7 368.2M1156.8 365.8L1160 357.8M1160 357.8L1161 357.2M1217.5 410.5L1221.9 409.2M1217.5 410.5L1214.8 408.7M1223 405.6L1221.9 409.2M1221.3 402.7L1214.1 402.9M1214.8 408.7L1214.1 402.9M1222.5 398.6L1217.2 393.9M1217.2 393.9L1215.7 394.9M1215.7 394.9L1213.7 402.5M1214.1 402.9L1213.7 402.5M1205.1 324.6L1212 320M1205.1 324.6L1199.9 322.7M1199.9 322.7L1199.4 310.7M1212 320L1211.4 310.7M1211.4 310.7L1199.4 310.7M1212.1 299.7L1210.1 297.2M1212.1 299.7L1211.4 310.7M1199.9 299.3L1199.4 310.7M1186.5 309.4L1187.8 310.7M1187.8 310.7L1199.4 310.7M1159.8 345L1162.4 349.4M1159.8 345L1166.3 338.1M1162.4 349.4L1172.9 348.8M1166.3 338.1L1173.4 340.3M1173.4 340.3L1174.7 346M1172.9 348.8L1174.7 346M1155.6 344.1L1159.8 345M1155.1 343.5L1155.6 344.1M1164.3 333.7L1166.3 338.1M1161 357.2L1162.4 349.4M1173.3 356.7L1172.9 348.8M1182.7 357.8L1184.1 348.1M1184.1 348.1L1174.7 346M1128.3 405.2L1138.1 408.3M1128.3 405.2L1129.2 398.6M1129.2 398.6L1131.4 397.8M1131.4 397.8L1138.6 400.1M1138.6 400.1L1140 404.2M1140 404.2L1138.1 408.3M1126.3 407.1L1118.4 402.9M1126.3 407.1L1128.3 405.2M1125.9 395.9L1129.2 398.6M1125.9 395.9L1121.5 395.8M1121.5 395.8L1118.4 402.9M1142.4 393.8L1136.2 389M1142.4 393.8L1138.6 400.1M1136.2 389L1131.4 397.8M1148.6 395.3L1147.1 403.1M1147.1 403.1L1140 404.2M1142.4 393.8L1146.8 393.5M1107.3 414.5L1110.8 420M1104.1 424.3L1110.5 422M1110.8 420L1110.5 422M1107.5 430.7L1107.9 430.8M1110.5 422L1113.9 426.4M1107.9 430.8L1113.9 426.4M1104.5 440.5L1112.2 437.5M1107.9 430.8L1112.2 437.5M1146.4 373.5L1145.7 372.5M1142.2 382L1140.7 382.3M1135.7 374.7L1140.7 382.3M1135.7 374.7L1141.7 371.4M1141.7 371.4L1145.7 372.5M1123.3 364.8L1126.7 359M1123.3 364.8L1118 364.9M1115.2 360.1L1115.8 363.1M1115.2 360.1L1119.6 352.7M1119.6 352.7L1126.7 359M1118 364.9L1115.8 363.1M1126.9 368.9L1123.3 364.8M1125 373.4L1126.9 368.9M1117.9 375.5L1117.1 374.6M1117.1 374.6L1118 364.9M1117.9 375.5L1125 373.4M1107.2 351.3L1108.3 357.3M1108.3 357.3L1115.2 360.1M1119.5 352.2L1119.6 352.7M1134.9 374.6L1129.7 379M1135.7 374.7L1134.9 374.6M1140.7 382.3L1136.2 386.4M1136.2 386.4L1129.7 379M1125.9 395.9L1127.5 388.6M1136.2 389L1135.8 387.8M1127.5 388.6L1135.8 387.8M1136.2 386.4L1135.8 387.8M1125 373.4L1129.7 379M1134.9 374.6L1131.7 368.3M1131.7 368.3L1126.9 368.9M1156.9 455.8L1165.1 457.9M1156.9 455.8L1153.3 458.3M1153.3 458.3L1155.2 464.5M1155.2 464.5L1162.5 467M1162.5 467L1165.1 457.9M1149.2 457.7L1148.2 456.6M1149.2 457.7L1153.3 458.3M1148.2 456.6L1149.6 447.7M1156.7 447.9L1156.9 455.8M1150.4 470L1155.2 464.5M1145.7 464.6L1149.2 457.7M1163 468.4L1161 473.7M1153.1 473.7L1161 473.7M1163 468.4L1162.5 467M1170 458.1L1173.2 455.6M1170 458.1L1165.3 457.8M1165.3 457.8L1165.4 448.3M1173.2 455.6L1173.2 448.3M1165.4 448.3L1173.2 448.3M1180.5 463.5L1179.1 456.3M1173.9 465.4L1180.5 463.5M1179.1 456.3L1173.2 455.6M1173.9 465.4L1170 458.1M1173.9 465.4L1172.2 469.4M1163 468.4L1172.2 469.4M1165.1 457.9L1165.3 457.8M1165.3 448.2L1165.4 448.3M1173.2 439.3L1173.2 448.3M1085.8 385.8L1087 393.8M1085.8 385.8L1081.1 383.5M1081.1 383.5L1078.4 385.4M1078.4 385.4L1078.3 395M1078.3 395L1087 393.8M1096.9 392.3L1087 393.8M1090.5 383L1085.8 385.8M1096.3 385.9L1096.9 392.3M1091.1 377.2L1088.4 374.3M1079.9 376.2L1081.1 383.5M1071.9 385.8L1078.4 385.4M1077.9 395.3L1078.3 395M1087.8 400.2L1087 393.8M1098.1 395.9L1097.5 392.9M1097.5 392.9L1096.9 392.3M1097.5 392.9L1105.8 390.6M1099.7 383L1108.8 385.5M1105.8 390.6L1108.8 385.5M1103.2 401.4L1107.8 396.3M1105.8 390.6L1107.8 396.3M1114.2 404.3L1112.2 397M1113.4 405.4L1114.2 404.3M1107.8 396.3L1112.2 397M1096.2 367.7L1100.2 374.4M1096.2 367.7L1099.1 361.5M1099.1 361.5L1103.3 362.1M1103.3 362.1L1107.6 368M1100.2 374.4L1106.7 373.3M1107.6 368L1107.1 373M1106.7 373.3L1107.1 373M1099.3 375.6L1100.2 374.4M1089.7 368.6L1096.2 367.7M1096.2 357.3L1099.1 361.5M1108.3 357.3L1103.3 362.1M1115.8 363.1L1107.6 368M1108.9 385.5L1108.8 385.5M1108.9 385.5L1106.7 373.3M1117.1 374.6L1107.1 373M1183.4 469.2L1178.6 473.6M1172.2 469.4L1172.7 470.6M1180.5 463.5L1182.2 464.4M1178.6 473.6L1172.7 470.6M1210.2 495.9L1210.3 496.1M1210.2 495.9L1210.3 485M1210.3 496.1L1216.1 496.5M1216.1 496.5L1221.2 489.9M1210.3 485L1218.1 484M1221.2 489.9L1218.1 484M1199.6 493.3L1210.2 495.9M1207.6 504.1L1210.3 496.1M1208.5 483.7L1210.3 485M1221.4 503.1L1216.1 496.5M1226.2 490.8L1221.2 489.9M1221.1 478.1L1218.1 484M1207.7 477.5L1213.7 473M1030.1 369.3L1026.5 365.1M1030.1 369.3L1027.5 376.1M1026.5 365.1L1021.1 369.6M1027.5 376.1L1022 373.2M1022 373.2L1021.1 369.6M1037.1 360.6L1037.6 361.4M1026.6 362.5L1026.5 365.1M1036.9 368.5L1030.1 369.3M1027.9 376.8L1027.5 376.1M1016.1 377.7L1022 373.2M1012.1 372L1015.4 366.5M1015.4 366.5L1021.1 369.6M998.6 349.7L1004 352.4M1002.3 362.3L1004.8 353.9M1004 352.4L1004.8 353.9M1007.7 341.6L1008.8 346.5M1004 352.4L1008.8 346.5M1017.8 348.6L1017.4 349M1008.8 346.5L1017.4 349M991.3 426.3L984.6 430.1M991.3 426.3L991.4 426.3M991.4 426.3L994.3 435.3M984.6 430.1L984.9 436.6M984.9 436.6L990 438.4M990 438.4L994.3 435.3M983.9 420L991.3 426.3M981.1 428.5L984.6 430.1M993.4 424.7L991.4 426.3M1001.5 435.2L999.3 436.4M999.3 436.4L994.3 435.3M981.9 438.2L984.9 436.6M1057.3 496.3L1055.7 497.8M1057.3 496.3L1064.1 495.3M1055.7 497.8L1060 504M1060 504L1064.4 504.4M1064.4 504.4L1067.6 501.1M1064.1 495.3L1067.7 497.3M1067.6 501.1L1067.7 497.3M1054.5 498L1055.7 497.8M1057.2 487.3L1057.3 487.4M1057.3 487.4L1057.3 496.3M1049.1 487.3L1057.2 487.3M1057.3 487.4L1064.2 487.3M1064.2 487.3L1064.1 495.3M1057.1 509.2L1060 504M1065.8 510.8L1064.4 504.4M1074 505.9L1067.6 501.1M1040.9 515.9L1033 517.2M1031.3 508.4L1033 517.2M1038.8 506.9L1040.9 515.9M1048 510.9L1042 516.4M1051.9 520.7L1043.8 519.7M1043.8 519.7L1042 516.4M1040.9 515.9L1042 516.4M1024 519.3L1033 517.2M1021.2 516.8L1024 519.3M1062.2 547.4L1062.2 547.5M1062.2 547.4L1072.6 545.5M1062.2 547.5L1063.6 552M1063.6 552L1070.9 555.4M1070.9 555.4L1073.6 550.5M1072.6 545.5L1073.6 550.5M1056.3 541.1L1049.5 546.8M1052.3 551.4L1062.2 547.5M1061.8 545.6L1062.2 547.4M1052.2 551.4L1049.5 546.8M1073.1 544.4L1072.6 545.5M1058.7 559.3L1063.6 552M1071 556.2L1070.9 555.4M1081.1 551.8L1073.6 550.5M1041.3 569.3L1041.9 559.5M1044.4 558.3L1043.2 558.3M1041.9 559.5L1043.2 558.3M1028.7 564.5L1030.5 558.7M1041.9 559.5L1030.5 558.7M1024.6 487.1L1024.5 487.1M1024.6 487.1L1023.9 478.1M1024.5 487.1L1016 487.1M1016.6 477.6L1016 487.1M1016.6 477.6L1023.8 478M1023.9 478.1L1023.8 478M1031.6 487.1L1024.6 487.1M1024.2 492.1L1024.5 487.1M1033 478.8L1023.9 478.1M1016.7 497.8L1016 487.1M1006.3 487.1L1016 487.1M1010 477.1L1014.8 476M1014.8 476L1016.6 477.6M1034.4 477.4L1034.2 477.8M1030.3 469L1025.4 471.4M1025.4 471.4L1023.8 478M1014.8 476L1015.4 471.8M1006.5 467.7L1010.8 466.4M1010.8 466.4L1015.4 471.8M1025.4 471.4L1020.3 467.7M1015.4 471.8L1020.3 467.7M1025 460.8L1020.4 463.8M1020.4 463.8L1020.3 467.7M1060.9 454.8L1064.2 459.9M1060.9 454.8L1066.3 449.7M1064.2 459.9L1071.6 456.2M1066.3 449.7L1071.6 456.2M1057.4 446.5L1057.6 454M1066.4 446.6L1066.3 449.7M1057.6 454L1060.9 454.8M1072.3 456.3L1071.6 456.2M1069.8 467.3L1075.3 464.5M1075.7 463.7L1075.3 464.5M1069.8 467.3L1064.8 464.8M1064.2 459.9L1063.7 462.5M1064.8 464.8L1063.7 462.5M1050.1 446.3L1050.3 452.8M1057.6 454L1056.7 454.5M1050.3 452.8L1056.7 454.5M1044.4 456.9L1045 457M1050.3 452.8L1045 457M1039.6 473.5L1043.6 475.1M1040.2 482.3L1044.1 479.9M1043.6 475.1L1044.1 479.9M1049.1 487.3L1048.9 482.2M1048.9 482.2L1044.1 479.9M1077.8 496.2L1071.4 495.1M1077.8 496.2L1078.5 487.2M1071.4 495.1L1070.8 487.3M1078.5 487.2L1070.8 487.3M1078.6 497L1077.8 496.2M1067.7 497.3L1071.4 495.1M1085.6 487.1L1078.5 487.2M1064.2 487.3L1070.8 487.3M943.6 497L945.9 505.5M955.8 498L951.1 506.8M951.1 506.8L945.9 505.5M935.6 507.5L939.7 509.4M945.9 505.5L939.7 509.4M938.2 520.8L940.9 516.1M930.2 520.4L930.4 509.4M940.9 516.1L939.7 509.4M949.2 527.5L951.4 518.4M959.2 529.5L960.5 518.5M951.4 518.4L960.5 518.5M940.9 516.1L950.3 516.7M951.1 506.8L951.8 507.9M951.8 507.9L950.3 516.7M951.4 518.4L950.3 516.7M970.4 520.9L960.5 518.5M970.4 520.9L967.4 529.9M1109.9 471.7L1108 471.7M1109.9 471.7L1115.5 462.6M1108 471.7L1104 468.5M1104 468.5L1103.2 461.8M1103.2 461.8L1103.2 461.8M1103.2 461.8L1112.6 460.1M1112.6 460.1L1115 461.4M1115 461.4L1115.5 462.6M1112.3 474L1109.9 471.7M1103 479.2L1108 471.7M1121.9 466.3L1115.5 462.6M1097.8 471.1L1104 468.5M1093.8 463.2L1103.2 461.8M1102 455.7L1103.2 461.8M1110.8 454.8L1104.5 452.8M1110.8 454.8L1112.6 460.1M1113.7 448.8L1110.8 454.8M1119.3 455.7L1115 461.4M1119.3 455.7L1113.7 448.8M1126.6 461.9L1125.9 455.9M1119.3 455.7L1122.3 454.5M1125.9 455.9L1122.3 454.5M914.7 518.5L920 517.2M914.7 518.5L909.7 511.2M920 517.2L923.6 506.9M909.7 511.2L915.1 505.9M915.1 505.9L923.6 506.9M927.6 521.6L920 517.2M914.5 519L914.7 518.5M906.3 510.4L909.7 511.2M923.8 506.8L923.6 506.9M912.9 497.2L915.1 505.9M907.2 348.6L905.4 350.1M907.2 348.6L914.1 348.5M914.1 348.5L918.8 355.4M904.9 352.4L905.4 350.1M904.9 352.4L911.3 359.3M911.3 359.3L918.8 355.4M907.4 339.9L907.2 348.6M897.2 344.8L905.4 350.1M919.1 340.3L914.1 348.5M921.2 356.1L918.8 355.4M899.1 357.5L904.9 352.4M909.4 366.5L911.3 359.3M924 603.8L926.3 608.1M936 605.2L933.9 600M932.6 599.4L933.9 600M971.6 520.1L978.2 523.4M971.6 520.1L972.7 514M972.7 514L980.2 512.2M978.2 523.4L986.1 519.2M986.1 519.2L980.2 512.2M970.4 520.9L971.6 520.1M978.5 529.7L978.2 523.4M986.5 519.3L986.1 519.2M987.6 505.4L982 506.2M982 506.2L980.2 512.2M963 498.1L961.5 510.2M970.2 510.3L961.5 510.2M970.2 510.3L972.2 504.2M972.2 504.2L967.3 498.5M963 498.1L967.3 498.5M951.8 507.9L961.5 510.2M962.4 497.6L963 498.1M972.7 514L970.2 510.3M960.5 518.5L961.5 510.2M982 506.2L978.6 502.9M978.6 502.9L972.2 504.2M932.5 432.3L939.4 438.2M932.5 432.3L938.2 425.6M938.2 425.6L940.9 427.7M940.9 427.7L941.6 436.1M941.6 436.1L939.4 438.2M937.4 421.7L938.2 425.6M947.6 428L940.9 427.7M947.8 435.1L941.6 436.1M939.3 439L939.4 438.2M939.3 439L942.5 442.9M952.4 440.3L951.4 442.2M942.5 442.9L951.4 442.2M932.4 432.3L927 438.6M932.4 432.3L926.2 426.8M927 438.6L920 431.8M926.2 426.8L920 431.8M927 439.3L927 438.6M939.3 439L933.7 443.4M932.5 432.3L932.4 432.3M926.3 425.5L926.2 426.8M918.6 431.8L920 431.8M942.6 457.4L951.4 457.1M942.6 457.4L942 449.3M942 449.3L951.3 449.3M951.4 457.1L951.3 449.3M939.1 460.6L942.6 457.4M951.6 457.4L951.4 457.1M933.8 449.3L942 449.3M942.5 442.9L942 449.3M951.4 442.2L951.3 449.3M961 449.3L951.3 449.3M971.7 578.5L971.8 587.9M971.7 578.5L979.4 575.9M979.4 575.9L981.8 577.7M981.8 577.7L982.4 587.9M971.8 587.9L982.4 587.9M966.6 575.8L971.7 578.5M968.9 591L971.8 587.9M979.1 567.2L979.4 575.9M995.8 572.9L995.8 572.6M992.6 576L981.8 577.7M991.9 587.9L982.4 587.9M982 594.5L982.4 587.9M936.4 575.1L931.8 568.3M936.4 575.1L944.8 573.4M944.5 568.3L945 573.2M944.5 568.3L937.1 562.1M931.8 568.3L936.2 562.2M945 573.2L944.8 573.4M937.1 562.1L936.2 562.2M926.4 580.4L935.3 577.2M935.3 577.2L936.4 575.1M929.2 568.4L931.8 568.3M950 561.4L944.5 568.3M955.1 572.7L945 573.2M944.1 555.5L937.1 562.1M931 556L936.2 562.2M937.8 585L946.7 583.4M937.8 585L936.4 587.3M936.4 587.3L941 594.7M947.8 584.4L945 595.1M947.8 584.4L946.7 583.4M941 594.7L945 595.1M944.8 573.4L946.7 583.4M935.3 577.2L937.8 585M930 588.7L936.4 587.3M933.9 600L941 594.7M955.6 584.6L947.8 584.4M947.2 597.2L945 595.1M983.7 453.5L989.9 449.9M993.7 457.8L993.8 454.2M993.8 454.2L989.9 449.9M981.3 445.1L990.3 445.3M989.9 449.9L990.3 445.3M990 438.4L990.3 445.3M1010.8 466.4L1012.9 461.5M1020.4 463.8L1014.4 460.7M1014.4 460.7L1012.9 461.5M1001.3 460.9L1004.4 457.6M1012.9 461.5L1004.4 457.6M1012 437.1L1016.2 439.4M1020.6 433.1L1019.8 437.4M1019.8 437.4L1016.2 439.4M1029.4 437.4L1024 441.1M1019.8 437.4L1024 441.1M1032.6 446L1023.8 445.9M1024 441.1L1023.8 445.9M1025.5 455.5L1023.9 453.9M1023.9 453.9L1023.8 445.9M973.7 492.8L973.5 487.1M973.7 492.8L979.5 496.8M973.5 487.1L984.9 487.1M979.5 496.8L984.9 494.3M984.9 494.3L984.9 487.1M962.5 487.1L973.5 487.1M967.3 498.5L973.7 492.8M978.6 502.9L979.5 496.8M973.9 478.2L973.5 487.1M984.9 481.2L984.9 487.1M990.6 498.2L984.9 494.3M995.6 487.1L984.9 487.1M1010.9 525.7L1010.9 525.5M1024 519.3L1024.3 528.7M1010.9 525.7L1022 529.8M1024.3 528.7L1022 529.8M1004.3 560.4L1010.8 567.2M1004.3 560.4L1007.2 556.8M1007.2 556.8L1016.4 556.1M1010.8 567.2L1018.1 564.2M1018.1 564.2L1016.4 556.1M1000.6 561.1L1004.3 560.4M1009.1 574.6L1010.8 567.2M996.4 546.4L1005.9 549.2M1005.9 549.2L1007.2 556.8M1022.1 566.5L1018.1 564.2M1019.7 551.1L1016.4 556.1M1019.7 551.1L1029.3 554.8M1030.5 558.7L1029.3 554.8M1123.8 540.6L1117.6 537.9M1123.8 540.6L1125.3 545.3M1119.8 547.7L1116.4 545.1M1119.8 547.7L1124.2 546.9M1116.4 545.1L1117.6 537.9M1124.2 546.9L1125.3 545.3M1128.6 535.9L1123.8 540.6M1117.1 537L1117.6 537.9M1131.9 543.8L1125.3 545.3M1118.2 554.6L1119.8 547.7M1112.8 546.3L1116.4 545.1M1127.9 553.8L1124.2 546.9M1026.3 339.5L1033.2 342.4M1023.5 348L1026.8 350.5M1026.8 350.5L1033.4 346.9M1033.4 346.9L1033.2 342.4M1037.7 333.2L1037.5 339.2M1033.2 342.4L1037.5 339.2M1296.1 319.5L1288.8 313.5M1289.1 309.3L1288.3 310.7M1288.8 313.5L1288.3 310.7M1245.2 429.7L1244.6 429.3M1234.9 431.5L1236.8 428.6M1236.8 428.6L1244.6 429.3M1246.7 420.3L1243.6 422.3M1244.6 429.3L1243.6 422.3M1221.9 409.2L1224.8 412.5M1231.2 411.4L1231.1 411.8M1231.1 411.8L1224.8 412.5M1249.9 375L1249.7 368.2M1260.8 368.2L1249.7 368.2M1257.7 378.8L1249.9 375M1249.9 362.7L1249.7 368.2M1227.5 391.1L1227.3 390.9M1218.2 390.7L1217.2 393.9M1218.2 390.7L1222.6 388.9M1222.6 388.9L1227.3 390.9M1173.4 438.3L1179.4 431.8M1171.6 428L1179.1 429.4M1179.4 431.8L1179.1 429.4M1163.6 420.4L1163.8 423.2M1163.6 420.4L1156.3 415M1163.8 423.2L1154.1 425.9M1152.4 418.7L1154.1 425.9M1152.4 418.7L1156.3 415M1155.4 429.9L1154.1 425.9M1164.1 423.5L1163.8 423.2M1164 395.1L1162.3 401.4M1154.1 396L1156.4 400.7M1162.3 401.4L1156.4 400.7M1150.5 406.8L1147.1 403.1M1150.5 406.8L1152.9 407.1M1156.4 400.7L1152.9 407.1M1217.5 410.5L1216.5 417.2M1214.8 408.7L1208 412M1216.5 417.2L1209.3 414.8M1209.3 414.8L1208 412M1208.9 402.2L1213.7 402.5M1206.9 404L1206.2 410.9M1206.9 404L1208.9 402.2M1208 412L1206.2 410.9M1201.9 473.8L1205.1 465.6M1193.6 465.9L1197.6 463.3M1197.6 463.3L1205.1 465.6M1212.1 466.7L1207.7 464.1M1205.1 465.6L1207.7 464.1M1221.3 459L1215.3 455.9M1207.7 464.1L1207.9 457.8M1215.3 455.9L1207.9 457.8M1270.6 300.3L1266.5 303.5M1259 290L1259.9 299.3M1266.5 303.5L1259.9 299.3M1250.1 285L1254.5 289.2M1250.1 285L1240.8 285.2M1254.5 289.2L1246.4 298.6M1239.8 286.4L1240.8 285.2M1239.8 286.4L1241.5 299.2M1241.5 299.2L1246.4 298.6M1252 273.9L1250.1 285M1258.9 289.9L1254.5 289.2M1239 276.7L1240.8 285.2M1253.8 304.2L1259.9 299.3M1253.8 304.2L1246.4 298.6M1226.6 287.9L1239.8 286.4M1239.9 359.7L1243.5 357.1M1239.9 359.7L1230.4 357.8M1244 350L1237 347.1M1237 347.1L1229.7 356.7M1230.4 357.8L1229.7 356.7M1207.3 374.4L1207.9 368.2M1197.8 375.4L1207.3 374.4M1197.8 375.4L1197.6 368.2M1197.6 368.2L1207.9 368.2M1187.4 368.2L1197.6 368.2M1197.2 377L1196 377.8M1196 377.8L1189.4 376.6M1197.8 375.4L1197.2 377M1236.7 346.3L1239.2 337.4M1236.7 346.3L1228.2 342.5M1239.2 337.4L1230.4 333M1228.2 342.5L1226.9 337.7M1230.4 333L1226.9 337.7M1244.6 335.1L1249.7 336.4M1250.2 338.3L1249.7 336.4M1237 347.1L1236.7 346.3M1244.6 335.1L1239.2 337.4M1230 325.5L1239.2 322.4M1230 325.5L1230.4 333M1239.2 322.4L1244.6 335.1M1225.8 310.7L1240 310.7M1225.4 300.3L1225.8 310.7M1225.4 300.3L1227.4 297.8M1227.4 297.8L1240.4 300.2M1240.4 300.2L1240 310.7M1240.4 321L1239.2 322.4M1225.4 322.6L1225.8 310.7M1240.4 321L1240 310.7M1225.4 322.6L1230 325.5M1212.1 299.7L1225.4 300.3M1211.4 310.7L1225.8 310.7M1226.5 288L1227.4 297.8M1241.5 299.2L1240.4 300.2M1220.3 324L1225.4 322.6M1220.3 324L1212 320M1249.7 336.4L1254 331.1M1240.4 321L1248.4 321.7M1254 331.1L1248.4 321.7M1262.5 345.6L1265.1 333M1265.1 333L1257 330.3M1254 331.1L1257 330.3M1269.2 384.9L1265.1 389.8M1260.8 388.5L1265.1 389.8M1270.6 398.1L1266.5 396.5M1265.1 389.8L1266.5 396.5M1266.5 396.5L1260.9 399.6M1253 408.9L1255.6 403.3M1196 377.8L1195 383.6M1189.7 385.9L1190.5 385.9M1190.5 385.9L1195 383.6M1198.5 401.3L1198.3 407.9M1198.5 401.3L1206.9 404M1206.2 410.9L1203.6 411.5M1198.3 407.9L1203.6 411.5M1201.3 419.9L1206.8 422.2M1201.3 419.9L1200.3 416.7M1206.8 422.2L1209.3 414.8M1200.3 416.7L1203.6 411.5M1184 406.3L1179 401.2M1184 406.3L1188 406.6M1188 406.6L1190.1 402.4M1190.1 402.4L1187.6 396M1178.8 399.8L1187.6 396M1179 401.2L1178.8 399.8M1176.6 397.5L1178.8 399.8M1185 390.5L1187.6 396M1190.5 385.9L1194.4 393.1M1194.4 393.1L1187.6 396M1176.6 319.5L1182.5 324M1167.6 325.1L1177.2 331.7M1177.2 331.7L1182.5 324M1173.4 340.3L1177.8 335.1M1177.2 331.7L1177.8 335.1M1187.8 310.7L1188.3 323.2M1182.5 324L1188.3 323.2M1199.9 322.7L1191.8 325.9M1191.8 325.9L1188.3 323.2M1150.5 406.8L1145.8 412.2M1157.1 411.4L1152.9 407.1M1156.3 415L1157.1 411.4M1152.4 418.7L1150.2 418.2M1145.8 412.2L1150.2 418.2M1138.1 408.3L1138.8 411M1138.8 411L1140.4 412.2M1145.8 412.2L1140.4 412.2M1128.4 416.1L1125.4 410.7M1128.4 416.1L1121.2 422M1125.4 410.7L1117.2 412.9M1120.3 421.8L1117.3 417.5M1120.3 421.8L1121.2 422M1117.2 412.9L1117.3 417.5M1130.7 417.1L1138.8 411M1126.3 407.1L1125.4 410.7M1130.7 417.1L1128.4 416.1M1113.8 410.3L1117.2 412.9M1118.4 402.9L1114.2 404.3M1110.8 420L1117.3 417.5M1113.9 426.4L1120.3 421.8M1113.7 448.8L1113.6 447M1122 447L1113.6 447M1122.3 454.5L1122 447M1105 446.9L1113.6 447M1114.1 438.2L1113.6 447M1112.2 437.5L1114.1 438.2M1150.8 354.5L1148.2 363.7M1156.8 365.8L1148.2 363.7M1160 357.8L1150.8 354.5M1142.6 347.7L1144.1 351.8M1155.6 344.1L1150.3 353.7M1144.1 351.8L1150.3 353.7M1150.8 354.5L1150.3 353.7M1145.7 372.5L1148.2 363.7M1132.1 358L1134 365M1132.1 358L1132.9 356.8M1132.9 356.8L1140.6 356.2M1134 365L1138.7 365.6M1138.7 365.6L1142.7 361.9M1142.7 361.9L1140.6 356.2M1131.7 368.3L1134 365M1126.7 359L1132.1 358M1131 347.6L1132.9 356.8M1144.1 351.8L1140.6 356.2M1141.7 371.4L1138.7 365.6M1148.2 363.7L1142.7 361.9M1110.2 385.6L1116.9 391.8M1123.6 384.4L1116.9 391.8M1110.2 385.6L1118.1 379.1M1118.1 379.1L1123.6 384.2M1123.6 384.2L1123.6 384.4M1112.2 397L1116.9 391.8M1108.9 385.5L1110.2 385.6M1127.5 388.6L1123.6 384.4M1121.5 395.8L1116.9 391.8M1117.9 375.5L1118.1 379.1M1129.7 379L1123.6 384.2M1169.5 478.6L1171.2 482.5M1169.5 478.6L1161.6 475.2M1171.2 482.5L1163 485.2M1161.6 475.2L1159.6 482.2M1163 485.2L1159.6 482.2M1161 473.7L1161.6 475.2M1172.7 470.6L1169.5 478.6M1154.8 483.4L1159.6 482.2M1162.4 491.9L1163 485.2M1179.3 476.8L1173 483.6M1179.3 476.8L1184.1 479M1184.1 479L1185.4 485.5M1185.4 485.5L1174.3 486.3M1174.3 486.3L1173 483.6M1171.2 482.5L1173 483.6M1178.6 473.6L1179.3 476.8M1189.9 473.6L1184.1 479M1187.2 486.9L1185.4 485.5M1173.7 489.8L1174.3 486.3M1016.4 351.8L1011.3 355.6M1016.4 351.8L1020.8 359.6M1011.3 355.6L1012.9 362.9M1020.8 359.6L1014.9 364.2M1014.9 364.2L1012.9 362.9M1004.8 353.9L1011.3 355.6M1017.4 349L1016.4 351.8M1027.6 353.4L1026.8 350.5M1024.7 359.9L1020.8 359.6M1004.3 364.1L1012.9 362.9M1015.4 366.5L1014.9 364.2M1043.2 558.3L1040.1 548.6M1049.5 546.8L1047.5 545.8M1047.5 545.8L1040.1 548.6M1032.5 550.5L1040.1 548.6M1032.5 550.5L1029.3 554.8M1044.7 529L1044.8 536.3M1044.7 529L1052.1 527.2M1054 535.3L1046 537.1M1054 535.3L1054.6 529.8M1046 537.1L1044.8 536.3M1054.6 529.8L1052.1 527.2M1043.8 519.7L1041.8 526.1M1052.1 520.9L1052.1 527.2M1041.8 526.1L1044.7 529M1047.5 545.8L1046 537.1M1056 537.5L1054 535.3M1060.2 528L1054.6 529.8M1064.2 487.3L1064 479.9M1070.8 487.3L1071.2 480.4M1064 479.9L1071.2 480.4M1039.1 466.5L1047.3 467.8M1043.6 475.1L1049.6 471.5M1047.3 467.8L1049.6 471.5M1045 457L1049 461.2M1047.3 467.8L1049 461.2M1056.7 454.5L1054.2 461.3M1049 461.2L1054.2 461.3M1063.7 462.5L1055.9 463.2M1055.9 463.2L1054.2 461.3M1052.9 478L1051.1 472.1M1052.9 478L1057.4 479.6M1060.4 470.9L1055.3 469.4M1060.4 470.9L1062.6 475.3M1055.3 469.4L1051.1 472.1M1057.4 479.6L1062 477.9M1062.6 475.3L1062 477.9M1048.9 482.2L1052.9 478M1049.6 471.5L1051.1 472.1M1057.2 487.3L1057.4 479.6M1064.8 464.8L1060.4 470.9M1055.9 463.2L1055.3 469.4M1069.5 472.2L1062.6 475.3M1069.8 467.3L1069.5 472.2M1064 479.9L1062 477.9M924 616.8L926.5 619.3M924 616.8L918.6 617.3M917.7 618.3L918.6 617.3M917.7 618.3L919.6 628.8M928.3 625.8L927.8 630.1M925.7 630L927.8 630.1M928.1 611.5L924 616.8M916.1 608.2L918.6 617.3M910.8 619.7L917.7 618.3M930.9 633L927.8 630.1M1023.9 453.9L1016 454M1016 454L1015.7 445.7M1023.8 445.9L1015.7 445.7M1014.4 460.7L1015.7 454.3M1016 454L1015.7 454.3M1007.9 439.8L1008 445.6M1016.2 439.4L1015.7 445.7M1008 445.6L1015.7 445.7M1019.1 549L1010.6 545.3M1019.1 549L1022 543M1022 543L1018.4 536.5M1018.4 536.5L1009.5 537.1M1010.6 545.3L1009.1 537.4M1009.1 537.4L1009.5 537.1M1019.7 551.1L1019.1 549M1005.9 549.2L1010.6 545.3M1032.5 550.5L1029.3 540.8M1029.3 540.8L1022 543M1010.9 525.7L1009.5 537.1M1022 529.8L1018.4 536.5M1001.3 536.9L1009.1 537.4M1030 539.8L1025.4 529.2M1030 539.8L1036.8 538M1036.8 538L1037.1 537.7M1037.1 537.7L1035 527.5M1025.4 529.2L1035 527.5M1024.3 528.7L1025.4 529.2M1029.3 540.8L1030 539.8M1040.1 548.6L1036.8 538M1044.8 536.3L1037.1 537.7M1041.8 526.1L1035 527.5M1033 517.2L1035 527.5M1042.4 343.5L1047 343.3M1047 343.3L1047 353.2M1042.4 343.5L1038 349.8M1038.9 353.4L1047 353.2M1038.9 353.4L1038 349.8M1047 333.6L1047 343.3M1037.5 339.2L1042.4 343.5M1054.7 343.7L1047 343.3M1054.9 353.4L1047 353.2M1033.4 346.9L1038 349.8M1047 362.4L1047 353.2M1037 356.6L1038.9 353.4M1290.8 325.1L1288.7 325.5M1288.8 313.5L1283.5 320.8M1288.7 325.5L1283.5 320.8M1292.1 337.2L1285.2 332.7M1288.7 325.5L1285.2 332.7M1239.1 416.5L1239.3 420.9M1239.1 416.5L1232.3 415M1239.3 420.9L1235.9 424M1235.9 424L1230 421.4M1232.3 415L1230 421.4M1242.3 412.8L1239.1 416.5M1243.6 422.3L1239.3 420.9M1238.9 407.4L1241.7 408.9M1231.1 411.8L1232.3 415M1236.8 428.6L1235.9 424M1230 421.4L1229.7 421.5M1224.8 412.5L1222.9 418.5M1222.9 418.5L1229.7 421.5M1241.4 397.5L1246.8 401.4M1241.4 397.5L1241.4 394.5M1241.4 394.5L1242.1 393.5M1242.1 393.5L1250.2 392.3M1246.8 401.4L1253.7 396.5M1250.2 392.3L1253.3 395.1M1253.3 395.1L1253.7 396.5M1246.5 405.9L1246.8 401.4M1236.7 402.2L1241.4 397.5M1233.2 393.5L1234.1 393M1234.1 393L1241.4 394.5M1254.6 397.3L1253.7 396.5M1254.3 394L1253.3 395.1M1255.8 383.2L1249.4 385.7M1249.4 385.7L1250.2 392.3M1230.4 357.8L1229.7 368.2M1239.9 359.7L1240.5 368.2M1229.7 368.2L1240.5 368.2M1249.7 368.2L1240.5 368.2M1179.1 456.3L1182.1 453.5M1188.6 460.9L1189 457.5M1182.1 453.5L1189 457.5M1197.6 463.3L1197.9 456.6M1197.9 456.6L1191.1 455.8M1189 457.5L1191.1 455.8M1173.3 439.3L1182 442.2M1184.5 436L1179.4 431.8M1184.5 436L1184.4 439.7M1182 442.2L1184.4 439.7M1182 442.2L1182.4 448.3M1173.2 448.3L1182.4 448.3M1182.1 453.5L1182.4 448.3M1198.3 407.9L1193.5 410.9M1200.3 416.7L1195.4 415.5M1195.4 415.5L1193.5 410.9M1198.5 401.2L1190.1 402.4M1198.5 401.3L1198.5 401.2M1188 406.6L1189.5 409.5M1189.5 409.5L1193.5 410.9M1195.4 415.5L1191.1 420.9M1201.3 419.9L1196.3 425M1196.3 425L1191.1 420.9M1130.9 453L1131.2 447.2M1130.9 453L1137.1 457.8M1131.2 447.2L1141 447.5M1141.1 454.8L1141 447.5M1137.1 457.8L1141.1 454.8M1136.8 460.1L1137.1 457.8M1125.9 455.9L1130.9 453M1149.6 447.7L1141 447.5M1148.2 456.6L1141.1 454.8M1131.2 447.2L1131.1 447.1M1122 447L1122 447M1131.1 447.1L1122 447M1148.6 437.9L1147.7 437.6M1141 447.5L1141.6 439M1141.6 439L1147.7 437.6M1179.2 415.7L1175.8 419.2M1179.2 415.7L1185.4 417.4M1175.8 419.2L1180.6 427.1M1185.4 417.4L1187.7 420.9M1187.7 420.9L1185.5 425.3M1180.6 427.1L1185.5 425.3M1178.4 412.4L1184 406.3M1189.5 409.5L1185.4 417.4M1178.4 412.4L1179.2 415.7M1170.3 425.1L1174.6 419.5M1179.1 429.4L1180.6 427.1M1174.6 419.5L1175.8 419.2M1191.1 420.9L1187.7 420.9M1196.5 426.4L1196.3 425M1196.5 426.4L1190.5 432.1M1190.5 432.1L1190 432M1190 432L1185.5 425.3M1184.5 436L1190 432M1173.3 408.3L1167.9 415M1168.4 404.4L1173.3 408.3M1162 409.4L1167.9 415M1168.4 404.4L1164.5 404.7M1164.5 404.7L1162 409.4M1178.4 412.4L1173.3 408.3M1174.6 419.5L1167.9 415M1179 401.2L1173.3 408.3M1171.4 398.2L1168.4 404.4M1157.1 411.4L1162 409.4M1163.6 420.4L1167.9 415M1162.3 401.4L1164.5 404.7M1206.8 422.2L1207.2 422.8M1200 429.1L1196.5 426.4M1200 429.1L1204.7 427.9M1204.7 427.9L1207.2 422.8M1257 330.3L1259.5 321.1M1248.4 321.7L1253.9 316.7M1259.5 321.1L1253.9 316.7M1253.9 316.7L1253.9 310.7M1240 310.7L1253.9 310.7M1253.8 304.2L1253.9 310.7M1223 383.1L1222.6 388.9M1223 383.1L1216.1 378.8M1218.2 390.7L1213.6 385.3M1216.1 378.8L1215.6 379.1M1213.6 385.3L1215.6 379.1M1218 368.2L1207.9 368.2M1218 375.1L1218 368.2M1207.3 374.4L1208.4 376.8M1218 375.1L1216.1 378.8M1215.6 379.1L1208.4 376.8M1197.6 368.2L1197.9 357.9M1187 360.3L1194.3 356.7M1197.9 357.9L1194.3 356.7M1198.5 401.2L1198.9 398.5M1194.4 393.1L1195.8 393.3M1198.9 398.5L1195.8 393.3M1208.9 402.2L1206.7 394.1M1198.9 398.5L1206.7 394.1M1215.7 394.9L1206.9 393.4M1206.7 394.1L1206.9 393.4M1117.8 431.9L1114.3 438.1M1117.8 431.9L1120.8 431.3M1120.8 431.3L1124.6 433.7M1114.3 438.1L1122.4 440.1M1124.6 433.7L1123.7 439.3M1123.7 439.3L1122.4 440.1M1113.9 426.4L1117.8 431.9M1114.1 438.2L1114.3 438.1M1121.2 422L1122.9 424.7M1122.9 424.7L1120.8 431.3M1122 447L1122.4 440.1M1131.1 447.1L1131.2 441.6M1131.2 441.6L1123.7 439.3M1071.8 479.8L1072.3 475.3M1071.8 479.8L1078 481.5M1072.3 475.3L1079.8 472.8M1078 481.5L1082 477.6M1082 477.6L1079.9 472.8M1079.9 472.8L1079.8 472.8M1069.5 472.2L1072.3 475.3M1071.2 480.4L1071.8 479.8M1078.5 487.2L1078 481.5M1075.3 464.5L1079.8 472.8M1084.9 478.9L1082 477.6M1087.6 467.5L1079.9 472.8M1004.7 455.3L1007.7 452.3M1004.7 455.3L999.1 450.4M1007.7 452.3L1008 445.6M1008 445.6L999.3 445.4M999.1 450.4L999.3 445.4M1004.4 457.6L1004.7 455.3M1015.7 454.3L1007.7 452.3M993.8 454.2L999.1 450.4M1008 445.6L1008 445.6M999.3 436.4L999.3 445.4M990.3 445.3L999.3 445.4M1285.2 332.7L1280.6 334.1M1285.3 344.1L1278.6 337.7M1280.6 334.1L1278.6 337.7M1273.5 345.5L1276.7 338.7M1265.1 333L1265.3 332.9M1276.7 338.7L1265.3 332.9M1276.7 338.7L1278.6 337.7M1204.7 427.9L1208.1 432.6M1211.7 432L1208.1 432.6M1207.2 422.8L1212 424M1211.7 432L1213.1 425.7M1213.1 425.7L1212 424M1216.5 417.2L1216.8 417.7M1212 424L1216.8 417.7M1222.9 418.5L1220.9 419.3M1216.8 417.7L1220.9 419.3M1218 433L1221.7 435.3M1218 433L1219.5 427.1M1226.6 428.9L1226.5 428.6M1226.6 428.9L1224.6 434.3M1226.5 428.6L1220.4 426.5M1219.5 427.1L1220.4 426.5M1224.6 434.3L1221.7 435.3M1213.1 425.7L1219.5 427.1M1214.5 434.1L1211.7 432M1214.5 434.1L1218 433M1233.9 431.8L1226.6 428.9M1229.7 421.5L1226.5 428.6M1229.9 439.4L1224.6 434.3M1220.9 419.3L1220.4 426.5M1222.3 442.4L1220.4 440.4M1220.4 440.4L1221.7 435.3M1230.3 377.2L1239.9 377M1230.3 377.2L1230.2 377.3M1230.2 377.3L1229.7 379.5M1229.7 379.5L1231.4 383.9M1231.4 383.9L1236.1 386.2M1236.1 386.2L1240.7 385.4M1239.9 377L1243.8 380.7M1240.7 385.4L1243.8 381.7M1243.8 381.7L1243.8 380.7M1229.7 368.2L1230.3 377.2M1240.5 368.2L1239.9 377M1218 368.2L1229.7 368.2M1218 375.1L1230.2 377.3M1223 383.1L1229.7 379.5M1227.3 390.9L1231.4 383.9M1234.1 393L1236.1 386.2M1242.1 393.5L1240.7 385.4M1249.9 375L1243.8 380.7M1249.4 385.7L1243.8 381.7M1131.2 441.6L1133.5 438.5M1141.6 439L1138.3 437.1M1133.5 438.5L1138.3 437.1M1124.6 433.7L1128.5 432M1133.5 438.5L1128.5 432M1143.6 421.7L1146.1 428.1M1154.1 425.9L1146.1 428.1M1150.2 418.2L1143.6 421.7M1140.4 412.2L1141.4 420.8M1143.6 421.7L1141.4 420.8M1147.7 437.6L1146.1 428.1M1200 429.1L1199.7 434.1M1208.1 432.6L1205.7 436.5M1205.7 436.5L1199.7 434.1M1190.5 432.1L1195.4 437.7M1199.7 434.1L1195.4 437.7M1197.9 456.6L1199.1 455.6M1207.9 457.8L1207 456.6M1199.1 455.6L1207 456.6M1207 441L1207.5 448.2M1207 441L1213.9 439.7M1215.3 440.9L1213.9 439.7M1215.3 440.9L1215.2 448.2M1215.2 448.2L1207.5 448.2M1205.7 436.5L1206.6 440.6M1206.6 440.6L1207 441M1214.5 434.1L1213.9 439.7M1220.4 440.4L1215.3 440.9M1221.8 448.2L1215.2 448.2M1215.3 455.9L1215.2 448.2M1207 456.6L1207.5 448.2M1191.1 441.7L1191.3 448.2M1191.3 448.2L1198.4 448.2M1199 442.1L1198.4 448.2M1199 442.1L1195.3 438.1M1191.1 441.7L1195.3 438.1M1184.4 439.7L1191.1 441.7M1182.4 448.3L1191.3 448.2M1191.1 455.8L1191.3 448.2M1199.1 455.6L1198.4 448.2M1207.5 448.2L1198.4 448.2M1206.6 440.6L1199 442.1M1195.4 437.7L1195.3 438.1M1266.5 318.9L1266.3 310.7M1266.3 310.7L1277.9 310.7M1266.5 318.9L1271.2 323.6M1278.4 320.3L1277.9 310.7M1278.4 320.3L1274.6 323.6M1271.2 323.6L1274.6 323.6M1253.9 310.7L1266.3 310.7M1259.5 321.1L1266.5 318.9M1266.5 303.5L1266.3 310.7M1278.3 302.7L1277.9 310.7M1265.3 332.9L1271.2 323.6M1288.3 310.7L1277.9 310.7M1283.5 320.8L1278.4 320.3M1280.6 334.1L1274.6 323.6M1177.8 335.1L1186.8 337.1M1191.8 325.9L1191.7 334.1M1191.7 334.1L1186.8 337.1M1184.1 348.1L1185.7 347.2M1186.8 337.1L1185.7 347.2M1194.3 356.7L1191.2 348.9M1185.7 347.2L1191.2 348.9M1207.9 368.2L1206.8 356.3M1197.9 357.9L1204.4 355.2M1206.8 356.3L1204.4 355.2M1209.9 386.6L1204.4 381.9M1204.4 381.9L1199.8 388M1206.7 392.3L1199.8 388M1209.9 386.6L1206.7 392.3M1213.6 385.3L1209.9 386.6M1208.4 376.8L1204.4 381.9M1197.2 377L1204.4 381.9M1195 383.6L1199.8 388M1195.8 393.3L1199.8 388M1206.9 393.4L1206.7 392.3M1138.3 430.3L1138.9 422.1M1138.3 430.3L1138.1 430.5M1138.1 430.5L1130.2 427.5M1132.6 421.1L1130.2 427.5M1132.6 421.1L1138.9 422.1M1146.1 428.1L1138.3 430.3M1141.4 420.8L1138.9 422.1M1138.3 437.1L1138.1 430.5M1128.5 432L1130.2 427.5M1122.9 424.7L1130.2 427.5M1130.7 417.1L1132.6 421.1M1191.2 348.9L1196.4 344.7M1191.7 334.1L1194.7 336.2M1194.7 336.2L1196.4 344.7M1204.4 355.2L1203.3 347.1M1196.4 344.7L1203.3 347.1M1218 359.1L1226.5 355.5M1218 359.1L1212.6 355.5M1212.6 355.5L1216.3 346M1216.3 346L1223.9 348.6M1226.5 355.5L1223.9 348.6M1218 368.2L1218 359.1M1229.7 356.7L1226.5 355.5M1206.8 356.3L1212.6 355.5M1228.2 342.5L1223.9 348.6M1207 332.7L1216.1 333.7M1207 332.7L1205.1 335.4M1205.1 335.4L1206.6 343M1206.6 343L1215.6 344.2M1215.6 344.2L1218.2 337.3M1216.1 333.7L1218.2 337.3M1220.3 324L1216.1 333.7M1205.1 324.6L1207 332.7M1194.7 336.2L1205.1 335.4M1203.3 347.1L1206.6 343M1216.3 346L1215.6 344.2M1226.9 337.7L1218.2 337.3"/>
<path fill="none" stroke="#23260a" stroke-width="1" d="M1267.6 442.5L1271.5 450.6L1275.2 461.1L1278.9 471.7L1276.8 479.1L1268.3 484.4L1259.9 489.7L1252.5 495.4"/>
<g fill="#fff" stroke="#23260a" stroke-width=".8">
<path d="M925.3 612.2L924.6 613.5L922.7 614.3L920.3 614.3L918.4 613.5L917.7 612.2L918.4 610.9L920.3 610.1L922.7 610.1L924.6 610.9Z"/>
<path d="M1104.2 663.2L1105.2 664.4L1099.6 672.6L1098.2 674.2L1097.2 673.2L1099.8 669.6Z"/>
<path d="M1112.4 688.6L1113.6 689L1112.8 694L1113.2 700L1112 700L1111.4 694Z"/>
<path d="M56.2 184.4L62.6 185.6L60 187.4L56.9 187.2Z"/>
<path d="M57.4 193.5L60.4 194.5L59.4 199.5L57.6 199.5Z"/>
<path d="M93.5 411L96.6 410.2L98.4 414L100.5 418.2L99.2 418.6L96.8 415.5L95.2 413.5Z"/>
</g>
<path fill="none" stroke="#23260a" stroke-width="2.3" stroke-linejoin="round" d="M94.2 162.2L90 166L85.5 170.5L81.8 174.4L83.5 175.3L86.5 173.6"/>
<path fill="none" stroke="#fff" stroke-width=".9" stroke-linejoin="round" d="M94.2 162.2L90 166L85.5 170.5L81.8 174.4L83.5 175.3L86.5 173.6"/>
</svg>
<div class="abs edgeT"></div>
<div class="abs edgeL"></div>
<div class="abs" style="left:694px;top:0;width:1px;height:3px;background:#b5b5b5"></div>

<div id="dlg" class="abs">
 <div id="title" class="abs">
  <svg class="abs" style="left:8px;top:6px" width="18" height="18" viewBox="0 0 18 18">
   <circle cx="8" cy="8.2" r="5.6" fill="#fff" stroke="#6a9e34" stroke-width="3.2"/>
   <path d="M9.2 9.6 L15.2 15.6" stroke="#8fc63f" stroke-width="3" stroke-linecap="butt"/>
   <path d="M8.6 9.2 L14.6 15.2" stroke="#5d8f2c" stroke-width="1.2"/>
   <circle cx="8.2" cy="8.6" r="1.5" fill="#e9a23b"/>
  </svg>
  <div class="abs t">Save Vector Layer as...</div>
  <div class="abs" style="left:520px;top:6px;font-family:'Liberation Sans',sans-serif;font-stretch:normal;font-size:13px;line-height:16px">?</div>
  <svg class="abs" style="left:562px;top:9px" width="12" height="12" viewBox="0 0 12 12"><path d="M1 .6L11 10.6M11 .6L1 10.6" stroke="#000" stroke-width="1.1" fill="none"/></svg>
 </div>

 <!-- left labels -->
 <div class="abs lbl" style="left:19px;top:55px;letter-spacing:.15px">Format</div>
 <div class="abs lbl" style="left:19px;top:81px;letter-spacing:-.1px">File name</div>
 <div class="abs lbl" style="left:19px;top:107px;letter-spacing:-.1px">Layer name</div>
 <div class="abs lbl" style="left:19px;top:134px;letter-spacing:0">CRS</div>

 <!-- scroll frame -->
 <div class="abs" style="left:11px;top:165px;width:569px;height:457px;border:1px solid #8a8a8a"></div>
 <div class="abs lbl" style="left:20px;top:180px;letter-spacing:0">Encoding</div>

 <div class="abs cb d" style="left:21px;top:203px"></div>
 <div class="abs lbl dis" style="left:38px;top:204px;letter-spacing:-.1px">Save only selected features</div>
 <div class="abs cb" style="left:21px;top:226px"><svg class="abs" style="left:0;top:0" width="11" height="11" viewBox="0 0 11 11"><path d="M1.8 5.6L4.3 8.1L9.3 2.6" stroke="#000" stroke-width="1.3" fill="none"/></svg></div>
 <div class="abs lbl" style="left:39px;top:227px">Add saved file to map</div>

 <svg class="abs" style="left:25px;top:250px" width="10" height="12" viewBox="0 0 10 12"><path d="M1 1L8.5 6L1 11Z" fill="#222"/></svg>
 <div class="abs lbl b" style="left:42px;top:250px;letter-spacing:.02px">Select fields to export and their export options</div>
 <div class="abs hl" style="left:313px;top:253px;width:257px"></div>

 <!-- Geometry -->
 <div class="abs grp" style="left:21px;top:279px;width:549px;height:94px"></div>
 <div class="abs" style="left:21px;top:272px;width:86px;height:16px;background:#f0f0f0"></div>
 <svg class="abs" style="left:23px;top:278px" width="12" height="10" viewBox="0 0 12 10"><path d="M.5 1L11.5 1L6 8.5Z" fill="#222"/></svg>
 <div class="abs lbl b" style="left:42px;top:276px;letter-spacing:.45px">Geometry</div>
 <div class="abs lbl" style="left:30px;top:302px;letter-spacing:-.1px">Geometry type</div>
 <div class="abs combo" style="left:299px;top:296px;width:261px;height:22px"><div class="abs v">Automatic</div><div class="abs arr" style="left:246px;top:9px"></div></div>
 <div class="abs cb d" style="left:31px;top:326px"></div>
 <div class="abs lbl dis" style="left:48px;top:327px;letter-spacing:-.08px">Force multi-type</div>
 <div class="abs cb d" style="left:31px;top:349px"></div>
 <div class="abs lbl dis" style="left:48px;top:350px;letter-spacing:-.22px">Include z-dimension</div>

 <!-- Extent -->
 <svg class="abs" style="left:25px;top:383px" width="10" height="12" viewBox="0 0 10 12"><path d="M1 1L8.5 6L1 11Z" fill="#222"/></svg>
 <div class="abs cb" style="left:41px;top:382px"></div>
 <div class="abs lbl b" style="left:61px;top:383px;letter-spacing:.15px">Extent (current: layer)</div>
 <div class="abs hl" style="left:195px;top:386px;width:375px"></div>

 <!-- Layer options -->
 <div class="abs grp" style="left:21px;top:412px;width:549px;height:70px"></div>
 <div class="abs" style="left:21px;top:405px;width:106px;height:16px;background:#f0f0f0"></div>
 <svg class="abs" style="left:23px;top:411px" width="12" height="10" viewBox="0 0 12 10"><path d="M.5 1L11.5 1L6 8.5Z" fill="#222"/></svg>
 <div class="abs lbl b" style="left:42px;top:409px;letter-spacing:.2px">Layer Options</div>
 <div class="abs lbl" style="left:30px;top:433px;letter-spacing:.34px">COORDINATE_PRECISION</div>
 <div class="abs spin" style="left:165px;top:429px;width:395px;height:18px;background:#fff;border:1px solid #7a7a7a"><div class="abs v" style="left:2px;top:3px">15</div>
   <div class="abs" style="left:378px;top:1px;width:14px;height:14px;background:#f0f0f0;border:1px solid #c4c4c4"></div>
   <div class="abs" style="left:378px;top:8px;width:14px;height:1px;background:#c4c4c4"></div>
   <div class="abs" style="left:382px;top:3.5px;width:0;height:0;border-left:3px solid transparent;border-right:3px solid transparent;border-bottom:3px solid #000"></div>
   <div class="abs" style="left:382px;top:10.5px;width:0;height:0;border-left:3px solid transparent;border-right:3px solid transparent;border-top:3px solid #000"></div>
 </div>
 <div class="abs lbl" style="left:30px;top:458px;letter-spacing:.33px">WRITE_BBOX</div>
 <div class="abs combo" style="left:165px;top:453px;width:395px;height:20px"><div class="abs v" style="left:2px;top:4px">NO</div><div class="abs arr" style="left:380px;top:8px"></div></div>

 <!-- Custom -->
 <svg class="abs" style="left:25px;top:492px" width="10" height="12" viewBox="0 0 10 12"><path d="M1 1L8.5 6L1 11Z" fill="#222"/></svg>
 <div class="abs lbl b" style="left:42px;top:492px;letter-spacing:.17px">Custom Options</div>
 <div class="abs hl" style="left:139px;top:495px;width:431px"></div>

 <!-- buttons -->
 <div class="abs btn" style="left:344px;border:2px solid #0078d7;line-height:19px;letter-spacing:.8px">OK</div>
 <div class="abs btn" style="left:425px;letter-spacing:.3px">Cancel</div>
 <div class="abs btn" style="left:506px;letter-spacing:.15px">Help</div>

 <!-- Format combo (open) -->
 <div class="abs" style="left:82px;top:50px;width:489px;height:20px;background:#cce4f7;border:1px solid #1c5a94"><div class="abs" style="left:2px;top:4px;line-height:14px;letter-spacing:.25px">GeoJSON</div><div class="abs arr" style="left:474px;top:8px"></div></div>
 <div id="list" class="abs">
  <div class="abs it" style="top:0">GeoPackage</div>
  <div class="abs it" style="top:13px">ESRI Shapefile</div>
  <div class="abs it" style="top:26px">Atlas BNA</div>
  <div class="abs it" style="top:39px">AutoCAD DXF</div>
  <div class="abs it" style="top:52px">Comma Separated Value [CSV]</div>
  <div class="abs it" style="top:65px">Geoconcept</div>
  <div class="abs it" style="top:78px">Geography Markup Language [GML]</div>
  <div class="abs it" style="top:91px;background:#0078d7;color:#fff;outline:1px dotted rgba(255,255,255,.45);outline-offset:-1px;letter-spacing:0">GeoJSON</div>
  <div class="abs it" style="top:104px">GeoRSS</div>
  <div class="abs it" style="top:117px">GPS eXchange Format [GPX]</div>
  <div class="abs" style="left:471px;top:0;width:16px;height:130px;background:#f0f0f0"></div>
  <div class="abs" style="left:471px;top:17px;width:16px;height:45px;background:#cdcdcd"></div>
  <svg class="abs" style="left:474px;top:5px" width="10" height="8" viewBox="0 0 10 8"><path d="M1.2 6.2L5 2.4L8.8 6.2" stroke="#404040" stroke-width="2" fill="none"/></svg>
  <svg class="abs" style="left:474px;top:117px" width="10" height="8" viewBox="0 0 10 8"><path d="M1.2 1.8L5 5.6L8.8 1.8" stroke="#404040" stroke-width="2" fill="none"/></svg>
 </div>
</div>
</div>
</body>
</html>
